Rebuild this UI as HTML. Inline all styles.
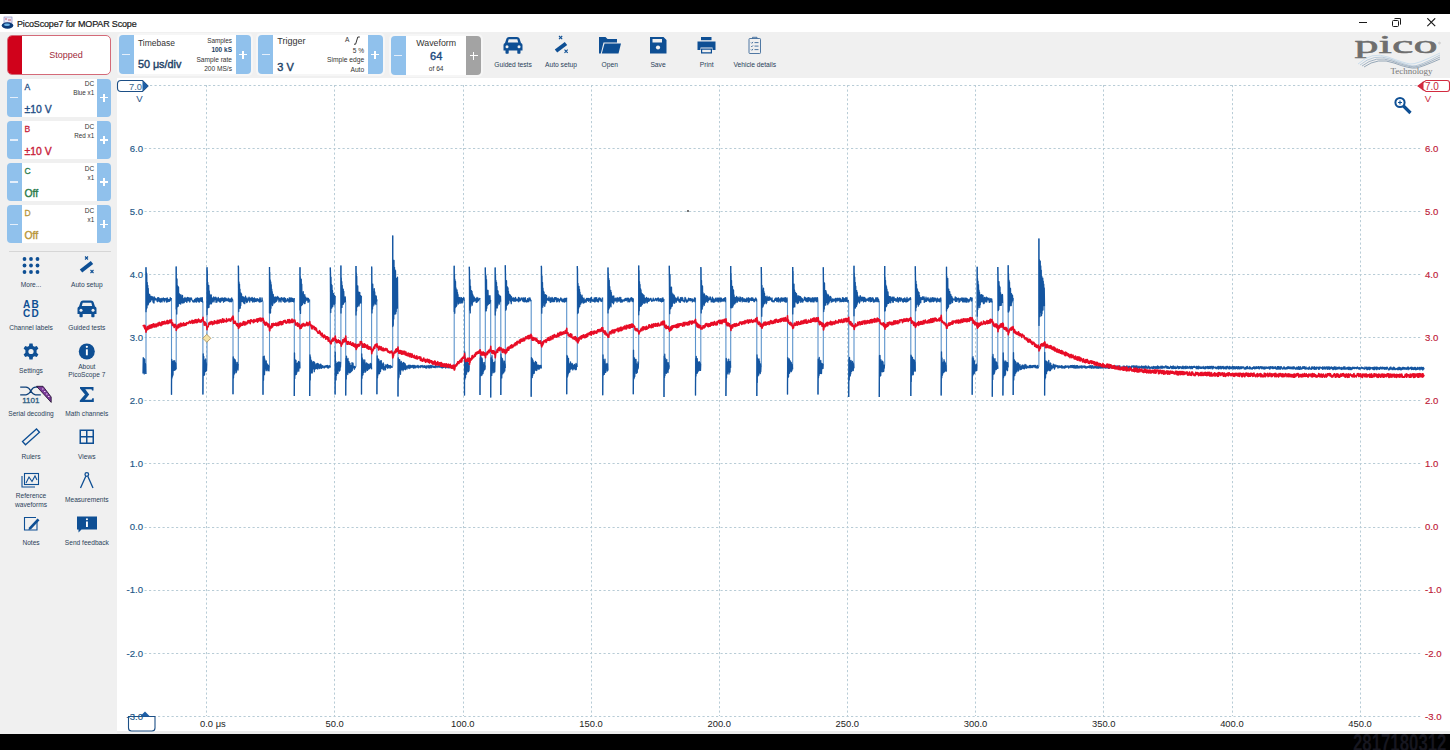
<!DOCTYPE html>
<html><head><meta charset="utf-8">
<style>
html,body{margin:0;padding:0;}
body{width:1450px;height:750px;position:relative;overflow:hidden;background:#000;font-family:"Liberation Sans", sans-serif;}
.a{position:absolute;}
.t{position:absolute;white-space:nowrap;line-height:1;font-family:"Liberation Sans", sans-serif;}
.bm{position:absolute;background:#90c1ec;}
.bm.l{border-radius:4px 0 0 4px;}
.bm.r{border-radius:0 4px 4px 0;}
.bm:before{content:"";position:absolute;left:50%;top:50%;width:8px;height:1.6px;margin:-0.8px 0 0 -4px;background:#fff;}
.bm.l:before{background:#e4eefa;}
.bm.p:after{content:"";position:absolute;left:50%;top:50%;width:1.6px;height:8px;margin:-4px 0 0 -0.8px;background:#fff;}
.wc{position:absolute;background:#fff;}
</style></head>
<body>
<!-- title bar -->
<div class="a" style="left:0;top:14px;width:1450px;height:18px;background:#fff;"></div>
<!-- toolbar + left panel -->
<div class="a" style="left:0;top:32px;width:1450px;height:46px;background:#f0f0f0;"></div>
<div class="a" style="left:0;top:78px;width:117px;height:656px;background:#f0f0f0;"></div>
<!-- plot -->
<div class="a" style="left:117px;top:78px;width:1333px;height:653px;background:#fff;"></div>
<div class="a" style="left:117px;top:731px;width:1333px;height:3px;background:#ececec;"></div>

<!-- app icon -->
<svg class="a" style="left:1px;top:16px" width="13" height="14" viewBox="0 0 13 14">
<rect x="3" y="1" width="8" height="6" fill="#e8e8f4" stroke="#8080c0" stroke-width="0.6"/>
<path d="M4 3h2M7 4h3" stroke="#c03050" stroke-width="0.8"/>
<ellipse cx="6.5" cy="9.5" rx="5.8" ry="3.2" fill="#0c3a78"/>
<ellipse cx="6" cy="8.8" rx="3" ry="1.3" fill="#6fb4e8"/>
</svg>
<!-- window controls -->
<div class="a" style="left:1358.5px;top:22.2px;width:8px;height:1.3px;background:#1a1a1a;"></div>
<div class="a" style="left:1392px;top:19.5px;width:7px;height:7px;border:1.4px solid #1a1a1a;border-radius:1.5px;box-sizing:border-box;"></div>
<div class="a" style="left:1394px;top:18px;width:7px;height:7px;border-top:1.4px solid #1a1a1a;border-right:1.4px solid #1a1a1a;border-radius:1.5px;box-sizing:border-box;"></div>
<svg class="a" style="left:1426.8px;top:18.2px" width="9" height="9" viewBox="0 0 9 9"><path d="M0.3 0.3L8.2 8.2M8.2 0.3L0.3 8.2" stroke="#1a1a1a" stroke-width="1.2"/></svg>

<!-- Stopped button -->
<div class="a" style="left:7px;top:35px;width:104px;height:40px;box-sizing:border-box;border:1px solid #d46a78;border-radius:5px;background:#fff;overflow:hidden;">
  <div class="a" style="left:0;top:0;width:14px;height:40px;background:#d0021b;"></div>
</div>

<!-- Timebase control -->
<div class="a" style="left:117px;top:33px;width:136px;height:43px;background:#f6f6f6;border-radius:5px;"></div>
<div class="wc" style="left:133px;top:35px;width:103px;height:39px;"></div>
<div class="bm l" style="left:119px;top:35px;width:14.5px;height:39px;"></div>
<div class="bm r p" style="left:235.5px;top:35px;width:15px;height:39px;"></div>
<!-- Trigger control -->
<div class="a" style="left:256px;top:33px;width:129px;height:43px;background:#f6f6f6;border-radius:5px;"></div>
<div class="wc" style="left:273px;top:35px;width:95px;height:39px;"></div>
<div class="bm l" style="left:258.3px;top:35px;width:15px;height:39px;"></div>
<div class="bm r p" style="left:368px;top:35px;width:14.5px;height:39px;"></div>
<!-- Waveform control -->
<div class="a" style="left:389px;top:34px;width:94px;height:43px;background:#f6f6f6;border-radius:5px;"></div>
<div class="wc" style="left:405px;top:36px;width:62px;height:39px;"></div>
<div class="bm l" style="left:391px;top:36px;width:14.5px;height:39px;"></div>
<div class="bm r p" style="left:466.3px;top:36px;width:14.5px;height:39px;background:#a3a3a3;"></div>

<!-- trigger edge glyph -->
<svg class="a" style="left:353px;top:36px" width="8" height="9" viewBox="0 0 8 9"><path d="M1 8.2h1.6L4.8 1h2" fill="none" stroke="#333" stroke-width="1"/></svg>

<!-- toolbar icons -->
<svg class="a" style="left:480px;top:33px" width="300" height="24" viewBox="480 33 300 24">
 <g fill="#0e4f94">
  <!-- car -->
  <path d="M506.5 38.5 Q507 37 509 37 H517 Q519 37 519.5 38.5 L521 43 Q522.5 43.5 522.5 45 V50.5 H520.5 V53 Q520.5 53.7 519.8 53.7 H518 Q517.3 53.7 517.3 53 V50.5 H508.7 V53 Q508.7 53.7 508 53.7 H506.2 Q505.5 53.7 505.5 53 V50.5 H503.5 V45 Q503.5 43.5 505 43 Z M507.8 42.5 H518.2 L517.3 39.3 H508.7 Z"/>
  <circle cx="507" cy="46.8" r="1.5" fill="#f0f0f0"/><circle cx="519" cy="46.8" r="1.5" fill="#f0f0f0"/>
  <!-- wand -->
  <path d="M554.8 49.4 L564.8 41.9 L567.2 45.1 L557.2 52.6 Z"/>
  <path d="M559 36 l3.2 3.2 M562.2 36 l-3.2 3.2 M564.5 49.7 l3.2 3.2 M567.7 49.7 l-3.2 3.2" stroke="#0e4f94" stroke-width="1.1"/>
  <!-- folder -->
  <path d="M599 37 H605.5 L607.5 39 H617 V42.5 H603.5 L600.8 53.5 H599 Z"/>
  <path d="M604.5 43.5 H621 L618.5 53.5 H601.8 Z"/>
  <!-- save -->
  <path d="M650 37 H663.5 L666.5 40 V53.5 H650 Z M652.5 39 V42.5 H662 V39 Z" fill-rule="evenodd"/>
  <circle cx="658" cy="47.5" r="2.1" fill="#f0f0f0"/>
  <!-- print -->
  <rect x="701" y="37" width="10.5" height="3.2"/>
  <path d="M697.5 41.5 H715.5 V50 H712.5 V47.5 H700.5 V50 H697.5 Z"/>
  <path d="M701 48.5 H712 V53.5 H701 Z M702.2 49.7 V52.3 H710.8 V49.7 Z" fill-rule="evenodd"/>
 </g>
 <!-- vehicle details clipboard -->
 <g fill="none" stroke="#3d6a9a" stroke-width="0.9">
  <rect x="749" y="38.5" width="11.5" height="15" rx="0.8"/>
  <path d="M752.5 38.5 V37.3 H757 V38.5"/>
  <path d="M751 42.5 l0.8 0.8 l1.2 -1.4 M754.5 42.6 H758.5 M751 46 l0.8 0.8 l1.2 -1.4 M754.5 46.1 H758.5 M751 49.5 l0.8 0.8 l1.2 -1.4 M754.5 49.6 H758.5"/>
 </g>
</svg>

<!-- pico logo -->
<svg class="a" style="left:1350px;top:33px" width="95" height="44" viewBox="0 0 95 44">
 <text x="4.5" y="19.5" style="font-family:'Liberation Serif',serif" font-size="25" fill="#6e6e6e" stroke="#6e6e6e" stroke-width="0.5" textLength="83" lengthAdjust="spacingAndGlyphs">pico</text>
 <circle cx="89.5" cy="10" r="0.9" fill="none" stroke="#999" stroke-width="0.4"/>
 <g fill="none" stroke-width="0.7">
  <path d="M8 31 Q22 18 38 24 T60 31 T90 20" stroke="#b9d4ea"/>
  <path d="M10 32 Q24 20 40 26 T62 33 T90 22" stroke="#9db8cf"/>
  <path d="M12 33 Q26 22 42 28 T64 34 T90 24" stroke="#7f97ad"/>
  <path d="M14 34 Q28 24 44 30 T66 35 T90 26" stroke="#6f879d"/>
 </g>
 <text x="40.5" y="41" style="font-family:'Liberation Serif',serif" font-size="8.5" fill="#777" textLength="42" lengthAdjust="spacingAndGlyphs">Technology</text>
</svg>

<!-- left panel channels -->
<div class="wc" style="left:21px;top:78.6px;width:76px;height:38px;"></div>
<div class="bm l" style="left:7px;top:78.6px;width:14.5px;height:38px;"></div>
<div class="bm r p" style="left:96.6px;top:78.6px;width:14.5px;height:38px;"></div>
<div class="wc" style="left:21px;top:120.8px;width:76px;height:38px;"></div>
<div class="bm l" style="left:7px;top:120.8px;width:14.5px;height:38px;"></div>
<div class="bm r p" style="left:96.6px;top:120.8px;width:14.5px;height:38px;"></div>
<div class="wc" style="left:21px;top:163px;width:76px;height:38px;"></div>
<div class="bm l" style="left:7px;top:163px;width:14.5px;height:38px;"></div>
<div class="bm r p" style="left:96.6px;top:163px;width:14.5px;height:38px;"></div>
<div class="wc" style="left:21px;top:205.3px;width:76px;height:38px;"></div>
<div class="bm l" style="left:7px;top:205.3px;width:14.5px;height:38px;"></div>
<div class="bm r p" style="left:96.6px;top:205.3px;width:14.5px;height:38px;"></div>
<div class="a" style="left:9px;top:251px;width:102px;height:1px;background:#d6d6d6;"></div>

<!-- left icons -->
<svg class="a" style="left:0;top:250px" width="117" height="290" viewBox="0 250 117 290">
 <g fill="#0e4f94">
  <!-- more dots -->
  <g>
   <circle cx="24.5" cy="259" r="1.9"/><circle cx="31" cy="259" r="1.9"/><circle cx="37.5" cy="259" r="1.9"/>
   <circle cx="24.5" cy="265.5" r="1.9"/><circle cx="31" cy="265.5" r="1.9"/><circle cx="37.5" cy="265.5" r="1.9"/>
   <circle cx="24.5" cy="272" r="1.9"/><circle cx="31" cy="272" r="1.9"/><circle cx="37.5" cy="272" r="1.9"/>
  </g>
  <!-- wand -->
  <path d="M79.8 269.4 L90.8 260.9 L93.2 264.1 L82.2 272.6 Z"/>
  <path d="M85 256.5 l3 3 M88 256.5 l-3 3 M90.5 270 l3 3 M93.5 270 l-3 3" stroke="#0e4f94" stroke-width="1.1"/>
  <!-- ABCD -->
  <text x="31.5" y="307.8" font-family="Liberation Sans, sans-serif" font-size="10" font-weight="700" text-anchor="middle" letter-spacing="1.2">AB</text>
  <text x="31.5" y="317.1" font-family="Liberation Sans, sans-serif" font-size="10" font-weight="700" text-anchor="middle" letter-spacing="1.2">CD</text>
  <!-- car -->
  <path d="M80.5 302 Q81 300.5 83 300.5 H91 Q93 300.5 93.5 302 L95 306.5 Q96.5 307 96.5 308.5 V314 H94.5 V316.5 Q94.5 317.2 93.8 317.2 H92 Q91.3 317.2 91.3 316.5 V314 H82.7 V316.5 Q82.7 317.2 82 317.2 H80.2 Q79.5 317.2 79.5 316.5 V314 H77.5 V308.5 Q77.5 307 79 306.5 Z M81.8 306 H92.2 L91.3 302.8 H82.7 Z"/>
  <circle cx="81" cy="310.3" r="1.5" fill="#f0f0f0"/><circle cx="93" cy="310.3" r="1.5" fill="#f0f0f0"/>
  <!-- gear -->
  <g transform="translate(31 351.5)">
   <path d="M-1.6 -8 H1.6 L2 -5.6 L3.6 -4.7 L5.8 -5.6 L7.4 -2.9 L5.6 -1.3 V1.3 L7.4 2.9 L5.8 5.6 L3.6 4.7 L2 5.6 L1.6 8 H-1.6 L-2 5.6 L-3.6 4.7 L-5.8 5.6 L-7.4 2.9 L-5.6 1.3 V-1.3 L-7.4 -2.9 L-5.8 -5.6 L-3.6 -4.7 L-2 -5.6 Z"/>
   <circle r="2.6" fill="#f0f0f0"/>
  </g>
  <!-- info -->
  <circle cx="86.8" cy="351.5" r="8"/>
  <rect x="85.9" y="349.3" width="1.9" height="6" fill="#fff"/><circle cx="86.85" cy="346.8" r="1.1" fill="#fff"/>
  <!-- sigma -->
  <path d="M80 387 H93.5 V390.5 H92 L91.5 389.3 H85.3 L89.2 394.5 L85 399.8 H91.7 L92.3 398.3 H93.8 V402 H79.8 V400.6 L85 394.5 L80 388.5 Z"/>
  <!-- grid views -->
  <path d="M79.5 429.5 H94 V444 H79.5 Z M81 431 V436 H86 V431 Z M87.5 431 V436 H92.5 V431 Z M81 437.5 V442.5 H86 V437.5 Z M87.5 437.5 V442.5 H92.5 V437.5 Z" fill-rule="evenodd"/>
  <!-- notes speech -->
  <path d="M77 516.5 H97 V529.5 H81.5 L78.5 532.5 V529.5 H77 Z"/>
  <rect x="86" y="521.5" width="1.9" height="5.5" fill="#fff"/><circle cx="86.95" cy="519.3" r="1" fill="#fff"/>
 </g>
 <!-- serial decoding -->
 <g fill="none" stroke="#0c3f78" stroke-width="1.3">
  <path d="M20.2 387.2 H26 Q28.5 387.2 30.8 391 Q33 394.8 35.5 394.8 H40.8 M20.2 394.8 H26 Q28.5 394.8 30.8 391 Q33 387.2 35.5 387.2 H38"/>
 </g>
 <path d="M36.5 386.3 L43 386.3 L51.2 397 L51.2 402.4 Z" fill="#7a3a98" stroke="#1a0a2a" stroke-width="0.8"/>
 <path d="M42 389 l1.5 0 M44 391.5 l1.5 0 M46 394 l1.5 0 M48 396.5 l1.5 0" stroke="#e8c8f0" stroke-width="1"/>
 <text x="30.8" y="403" style="font-family:'Liberation Sans',sans-serif" font-size="8" fill="#2a5a80" stroke="#2a5a80" stroke-width="0.3" text-anchor="middle">1101</text>
 <!-- ruler -->
 <g fill="none" stroke="#0e4f94" stroke-width="1.3">
  <path d="M22.5 441.5 L36.5 429 L39.5 432.3 L25.5 444.8 Z"/>
 </g>
 <!-- reference waveforms -->
 <g fill="none" stroke="#0e4f94" stroke-width="1.1">
  <rect x="24.5" y="473.5" width="14" height="11"/>
  <path d="M22 476 V487 H35"/>
  <path d="M26 483 L29 477 L32 481.5 L35 476 L37 480"/>
 </g>
 <!-- measurements compass -->
 <g fill="none" stroke="#0e4f94" stroke-width="1.3">
  <circle cx="86.8" cy="474.5" r="1.8"/>
  <path d="M85.8 476.3 L80.5 488 M87.8 476.3 L93 488"/>
 </g>
 <!-- notes -->
 <g fill="none" stroke="#0e4f94" stroke-width="1.1">
  <path d="M36 517.5 H24.5 V530 H37 V522"/>
 </g>
 <path d="M29 527.5 L37.5 518.5 L39.5 520.3 L31 529.3 L28.5 530 Z" fill="#0e4f94"/>
</svg>

<!-- grid -->
<svg class="a" style="left:0;top:0" width="1450" height="750">
 <g stroke="#b8ccd6" stroke-width="1" stroke-dasharray="2.2 2.3">
<line x1="144.5" y1="716.5" x2="1421" y2="716.5"/>
<line x1="144.5" y1="653.5" x2="1421" y2="653.5"/>
<line x1="144.5" y1="590.5" x2="1421" y2="590.5"/>
<line x1="144.5" y1="527.5" x2="1421" y2="527.5"/>
<line x1="144.5" y1="463.5" x2="1421" y2="463.5"/>
<line x1="144.5" y1="400.5" x2="1421" y2="400.5"/>
<line x1="144.5" y1="337.5" x2="1421" y2="337.5"/>
<line x1="144.5" y1="274.5" x2="1421" y2="274.5"/>
<line x1="144.5" y1="211.5" x2="1421" y2="211.5"/>
<line x1="144.5" y1="148.5" x2="1421" y2="148.5"/>
<line x1="150" y1="85.5" x2="1417" y2="85.5"/>
<line x1="206.5" y1="85" x2="206.5" y2="716"/>
<line x1="334.5" y1="85" x2="334.5" y2="716"/>
<line x1="463.5" y1="85" x2="463.5" y2="716"/>
<line x1="591.5" y1="85" x2="591.5" y2="716"/>
<line x1="719.5" y1="85" x2="719.5" y2="716"/>
<line x1="847.5" y1="85" x2="847.5" y2="716"/>
<line x1="975.5" y1="85" x2="975.5" y2="716"/>
<line x1="1103.5" y1="85" x2="1103.5" y2="716"/>
<line x1="1232.5" y1="85" x2="1232.5" y2="716"/>
<line x1="1360.5" y1="85" x2="1360.5" y2="716"/>
 </g>
 <path d="M146.00,374.1V267.2 M171.50,298.0V394.8 M176.20,369.2V266.6 M202.90,301.6V394.5 M207.00,364.0V267.2 M233.00,300.8V394.2 M238.30,363.5V265.7 M263.00,301.5V394.7 M269.50,365.3V266.9 M294.30,298.1V395.9 M300.00,368.4V267.2 M309.70,299.4V395.9 M330.30,367.5V267.5 M335.10,295.9V394.4 M340.90,361.8V265.4 M345.70,302.5V395.6 M356.00,366.7V266.1 M361.50,296.1V394.5 M371.60,369.3V266.6 M376.90,299.5V394.3 M392.70,366.6V235.5 M398.00,308.8V396.5 M454.20,365.5V265.8 M464.50,301.5V395.6 M469.30,365.7V266.7 M480.00,298.0V395.1 M485.30,365.5V267.4 M490.70,300.0V397.6 M495.20,360.8V267.5 M500.80,301.9V394.9 M505.30,368.0V265.2 M531.20,300.2V396.7 M541.30,368.4V265.8 M566.70,297.7V394.2 M577.30,367.1V266.1 M602.70,297.6V395.2 M608.00,370.6V267.6 M633.30,298.6V394.2 M638.70,362.4V265.5 M664.00,299.1V396.9 M669.30,365.4V265.8 M695.50,297.8V395.5 M700.80,364.0V267.1 M725.90,299.8V396.0 M730.70,367.7V266.0 M756.80,301.7V395.9 M761.30,366.5V267.1 M787.50,301.7V394.5 M792.70,369.3V267.0 M818.00,301.3V394.5 M823.30,363.8V267.3 M848.70,301.7V397.1 M854.00,368.2V265.8 M879.30,302.0V396.9 M884.70,364.4V266.0 M910.80,300.4V396.1 M915.30,371.6V266.3 M941.20,301.1V395.4 M946.50,371.6V266.8 M972.20,297.6V394.7 M977.20,364.1V266.7 M992.30,301.4V396.7 M997.80,368.8V267.0 M1002.90,303.0V395.6 M1008.20,367.4V265.3 M1013.20,298.1V394.9 M1038.90,366.9V238.6 M1044.60,306.1V395.6" fill="none" stroke="#5b93cc" stroke-width="1.1"/>
 <path d="M143.00,373.5 143.25,357.7 143.50,369.0 143.75,372.3 144.00,358.6 144.25,373.9 144.50,369.5 144.75,359.4 145.00,371.7 145.25,363.4 145.50,364.4 145.75,374.1 M146.00,267.2 146.00,311.7 146.25,271.9 146.50,309.0 146.75,273.7 147.00,307.7 147.25,282.5 147.50,303.1 147.75,285.4 148.00,304.9 148.25,288.5 148.50,304.0 148.75,293.7 149.00,302.4 149.25,295.4 149.50,302.1 149.75,294.6 150.00,299.6 150.25,297.7 150.50,301.7 150.75,296.5 151.00,299.5 151.25,296.4 151.50,299.9 151.75,297.8 152.00,299.3 152.25,296.8 152.50,299.7 152.75,296.9 153.00,301.9 153.25,300.8 153.50,302.7 153.75,298.0 154.00,303.0 154.25,296.8 154.50,299.8 154.75,298.6 155.00,299.8 155.25,298.1 155.50,299.1 155.75,299.7 156.00,299.9 156.25,299.8 156.50,298.8 156.75,299.0 157.00,300.4 157.25,301.6 157.50,301.7 157.75,297.7 158.00,300.6 158.25,300.1 158.50,300.2 158.75,297.6 159.00,301.1 159.25,299.5 159.50,300.2 159.75,301.7 160.00,298.6 160.25,301.9 160.50,302.1 160.75,298.9 161.00,301.3 161.25,299.9 161.50,300.7 161.75,298.5 162.00,301.9 162.25,299.9 162.50,299.7 162.75,299.9 163.00,298.5 163.25,297.9 163.50,298.7 163.75,300.4 164.00,298.7 164.25,301.8 164.50,298.6 164.75,298.7 165.00,299.9 165.25,299.6 165.50,299.8 165.75,300.3 166.00,298.3 166.25,301.1 166.50,302.0 166.75,298.4 167.00,301.9 167.25,297.9 167.50,300.2 167.75,300.6 168.00,301.5 168.25,301.0 168.50,299.3 168.75,299.8 169.00,300.2 169.25,301.4 169.50,299.7 169.75,301.0 170.00,300.7 170.25,297.6 170.50,298.8 170.75,300.2 171.00,299.0 171.25,298.0 M171.50,394.8 171.50,384.9 171.75,359.4 172.00,378.1 172.25,361.5 172.50,376.3 172.75,363.7 173.00,375.1 173.25,360.9 173.50,370.4 173.75,361.1 174.00,370.4 174.25,363.7 174.50,370.1 174.75,360.7 175.00,370.0 175.25,362.3 175.50,369.5 175.75,363.2 176.00,369.2 M176.20,266.6 176.25,309.1 176.50,278.4 176.75,314.1 177.00,278.9 177.25,307.1 177.50,285.7 177.75,306.3 178.00,291.4 178.25,306.2 178.50,287.0 178.75,303.3 179.00,294.8 179.25,303.4 179.50,293.9 179.75,301.9 180.00,297.4 180.25,303.9 180.50,294.8 180.75,304.0 181.00,294.9 181.25,301.3 181.50,297.0 181.75,302.7 182.00,298.0 182.25,301.1 182.50,295.4 182.75,303.1 183.00,299.0 183.25,300.7 183.50,299.3 183.75,302.6 184.00,298.3 184.25,302.5 184.50,299.7 184.75,299.2 185.00,297.5 185.25,301.0 185.50,298.5 185.75,299.2 186.00,301.3 186.25,300.1 186.50,298.2 186.75,302.3 187.00,300.5 187.25,300.9 187.50,297.4 187.75,298.7 188.00,297.6 188.25,300.7 188.50,300.8 188.75,298.5 189.00,298.0 189.25,300.0 189.50,298.2 189.75,302.0 190.00,301.6 190.25,299.3 190.50,299.6 190.75,297.9 191.00,298.6 191.25,298.6 191.50,298.1 191.75,299.9 192.00,300.0 192.25,300.5 192.50,300.7 192.75,301.7 193.00,301.7 193.25,302.0 193.50,300.9 193.75,301.3 194.00,300.6 194.25,301.1 194.50,299.5 194.75,302.0 195.00,299.7 195.25,299.2 195.50,300.3 195.75,301.5 196.00,298.1 196.25,300.9 196.50,302.0 196.75,301.8 197.00,299.9 197.25,298.3 197.50,297.9 197.75,299.7 198.00,300.7 198.25,300.0 198.50,301.6 198.75,298.4 199.00,298.8 199.25,302.1 199.50,299.3 199.75,300.8 200.00,300.9 200.25,297.9 200.50,298.3 200.75,299.0 201.00,298.3 201.25,301.4 201.50,297.9 201.75,298.6 202.00,300.2 202.25,297.7 202.50,302.0 202.75,301.6 M202.90,394.5 203.00,379.7 203.25,353.8 203.50,375.6 203.75,356.4 204.00,372.1 204.25,360.9 204.50,375.0 204.75,360.1 205.00,371.3 205.25,362.0 205.50,371.5 205.75,359.0 206.00,369.4 206.25,362.7 206.50,370.8 206.75,364.0 M207.00,267.2 207.00,314.5 207.25,270.7 207.50,306.1 207.75,282.5 208.00,307.8 208.25,286.7 208.50,304.9 208.75,285.4 209.00,307.3 209.25,290.9 209.50,304.2 209.75,294.1 210.00,303.1 210.25,295.2 210.50,302.1 210.75,295.8 211.00,304.0 211.25,294.8 211.50,303.5 211.75,298.7 212.00,299.1 212.25,298.0 212.50,301.9 212.75,299.8 213.00,299.3 213.25,298.4 213.50,299.4 213.75,296.8 214.00,301.9 214.25,297.3 214.50,299.9 214.75,299.3 215.00,299.4 215.25,298.2 215.50,298.6 215.75,297.2 216.00,302.3 216.25,299.0 216.50,301.3 216.75,298.2 217.00,302.0 217.25,299.5 217.50,300.3 217.75,299.9 218.00,300.3 218.25,297.3 218.50,299.7 218.75,298.3 219.00,301.4 219.25,299.1 219.50,301.4 219.75,299.9 220.00,302.1 220.25,298.4 220.50,302.2 220.75,300.8 221.00,301.5 221.25,298.2 221.50,300.7 221.75,299.6 222.00,300.1 222.25,297.9 222.50,300.3 222.75,298.5 223.00,299.7 223.25,300.3 223.50,302.1 223.75,300.4 224.00,298.2 224.25,300.3 224.50,301.3 224.75,301.1 225.00,297.7 225.25,300.3 225.50,300.9 225.75,300.2 226.00,300.6 226.25,298.5 226.50,300.7 226.75,300.6 227.00,300.4 227.25,299.4 227.50,299.7 227.75,298.8 228.00,300.9 228.25,298.1 228.50,301.2 228.75,299.5 229.00,299.1 229.25,299.0 229.50,299.3 229.75,301.8 230.00,300.9 230.25,301.3 230.50,300.6 230.75,298.9 231.00,300.3 231.25,301.8 231.50,300.6 231.75,298.0 232.00,301.3 232.25,300.4 232.50,299.3 232.75,300.8 M233.00,394.2 233.00,383.6 233.25,356.8 233.50,378.1 233.75,358.8 234.00,374.7 234.25,359.2 234.50,373.5 234.75,359.4 235.00,370.2 235.25,360.0 235.50,369.2 235.75,362.0 236.00,372.8 236.25,364.6 236.50,372.0 236.75,366.1 237.00,368.2 237.25,362.4 237.50,368.6 237.75,365.0 238.00,370.0 238.25,363.5 M238.30,265.7 238.50,267.3 238.75,311.6 239.00,281.9 239.25,308.6 239.50,284.1 239.75,307.2 240.00,289.2 240.25,308.2 240.50,292.9 240.75,305.4 241.00,293.2 241.25,301.7 241.50,293.9 241.75,300.8 242.00,296.6 242.25,301.3 242.50,297.6 242.75,299.6 243.00,296.6 243.25,302.2 243.50,299.0 243.75,303.0 244.00,297.5 244.25,302.9 244.50,298.8 244.75,303.7 245.00,297.8 245.25,301.7 245.50,296.1 245.75,300.1 246.00,298.6 246.25,299.8 246.50,299.4 246.75,302.5 247.00,297.8 247.25,302.1 247.50,301.4 247.75,300.1 248.00,300.2 248.25,300.5 248.50,298.5 248.75,298.1 249.00,297.1 249.25,299.6 249.50,297.8 249.75,302.0 250.00,298.8 250.25,299.7 250.50,298.9 250.75,298.2 251.00,298.4 251.25,300.4 251.50,299.5 251.75,298.2 252.00,297.3 252.25,301.2 252.50,298.0 252.75,302.0 253.00,300.8 253.25,299.8 253.50,300.4 253.75,298.3 254.00,300.2 254.25,301.9 254.50,298.0 254.75,300.3 255.00,299.1 255.25,301.4 255.50,301.4 255.75,300.6 256.00,298.7 256.25,301.5 256.50,300.2 256.75,300.6 257.00,300.8 257.25,299.1 257.50,298.7 257.75,300.3 258.00,300.7 258.25,300.3 258.50,300.1 258.75,299.5 259.00,301.7 259.25,299.1 259.50,302.0 259.75,300.1 260.00,297.6 260.25,298.4 260.50,301.8 260.75,301.1 261.00,301.4 261.25,301.4 261.50,300.9 261.75,301.6 262.00,297.8 262.25,299.7 262.50,300.7 262.75,301.5 M263.00,394.7 263.00,384.4 263.25,356.7 263.50,380.3 263.75,358.5 264.00,374.9 264.25,356.1 264.50,374.5 264.75,358.9 265.00,370.8 265.25,360.9 265.50,368.7 265.75,364.8 266.00,368.7 266.25,361.0 266.50,370.2 266.75,364.1 267.00,370.8 267.25,364.0 267.50,368.9 267.75,365.9 268.00,369.2 268.25,365.1 268.50,370.4 268.75,366.9 269.00,370.9 269.25,365.3 M269.50,266.9 269.50,312.9 269.75,272.3 270.00,311.7 270.25,279.9 270.50,313.0 270.75,282.0 271.00,308.3 271.25,284.7 271.50,304.2 271.75,289.2 272.00,302.5 272.25,291.7 272.50,305.6 272.75,294.5 273.00,304.0 273.25,294.5 273.50,301.9 273.75,296.9 274.00,301.4 274.25,297.5 274.50,302.9 274.75,298.8 275.00,302.4 275.25,296.8 275.50,300.0 275.75,298.3 276.00,301.5 276.25,297.6 276.50,301.1 276.75,299.8 277.00,300.3 277.25,296.5 277.50,299.1 277.75,298.3 278.00,298.9 278.25,297.1 278.50,299.3 278.75,299.1 279.00,301.9 279.25,300.1 279.50,298.8 279.75,298.2 280.00,298.8 280.25,300.1 280.50,301.0 280.75,299.2 281.00,302.0 281.25,297.7 281.50,298.0 281.75,298.9 282.00,298.0 282.25,299.5 282.50,300.0 282.75,298.7 283.00,300.2 283.25,301.3 283.50,298.1 283.75,298.1 284.00,299.6 284.25,297.7 284.50,302.2 284.75,301.8 285.00,299.9 285.25,301.9 285.50,298.4 285.75,301.9 286.00,299.9 286.25,301.0 286.50,301.1 286.75,300.9 287.00,301.0 287.25,300.6 287.50,298.6 287.75,300.9 288.00,300.5 288.25,300.3 288.50,300.6 288.75,299.3 289.00,302.1 289.25,297.9 289.50,297.8 289.75,301.4 290.00,301.6 290.25,297.8 290.50,300.9 290.75,300.5 291.00,301.6 291.25,298.6 291.50,301.1 291.75,297.9 292.00,299.6 292.25,300.0 292.50,301.3 292.75,298.6 293.00,301.3 293.25,301.1 293.50,300.0 293.75,301.9 294.00,300.0 294.25,298.1 M294.30,395.9 294.50,352.9 294.75,378.6 295.00,359.5 295.25,375.0 295.50,360.6 295.75,371.0 296.00,360.5 296.25,374.4 296.50,363.8 296.75,373.1 297.00,363.6 297.25,371.6 297.50,363.8 297.75,368.5 298.00,362.3 298.25,369.8 298.50,361.5 298.75,371.2 299.00,365.2 299.25,368.2 299.50,362.0 299.75,368.4 M300.00,267.2 300.00,310.0 300.25,276.7 300.50,313.4 300.75,281.4 301.00,305.2 301.25,279.2 301.50,305.6 301.75,284.1 302.00,304.5 302.25,293.3 302.50,304.5 302.75,294.5 303.00,302.9 303.25,291.7 303.50,300.8 303.75,295.8 304.00,302.6 304.25,297.6 304.50,303.5 304.75,294.6 305.00,303.5 305.25,297.1 305.50,301.4 305.75,297.2 306.00,299.5 306.25,298.8 306.50,300.0 306.75,298.8 307.00,298.7 307.25,298.1 307.50,300.3 307.75,298.3 308.00,302.3 308.25,300.9 308.50,298.5 308.75,300.1 309.00,301.7 309.25,299.7 309.50,299.4 M309.70,395.9 309.75,384.6 310.00,354.8 310.25,380.0 310.50,357.0 310.75,373.5 311.00,359.8 311.25,372.3 311.50,360.6 311.75,371.5 312.00,361.6 312.25,372.9 312.50,362.6 312.75,367.9 313.00,364.5 313.25,368.6 313.50,361.6 313.75,369.0 314.00,363.2 314.25,371.7 314.50,362.1 314.75,368.9 315.00,365.6 315.25,367.8 315.50,365.4 315.75,368.8 316.00,364.0 316.25,366.7 316.50,364.0 316.75,368.4 317.00,365.5 317.25,366.9 317.50,363.4 317.75,369.0 318.00,364.1 318.25,367.8 318.50,364.0 318.75,366.7 319.00,364.3 319.25,368.2 319.50,365.6 319.75,368.5 320.00,367.4 320.25,367.5 320.50,364.2 320.75,367.9 321.00,364.3 321.25,367.7 321.50,368.3 321.75,366.2 322.00,367.5 322.25,365.7 322.50,367.7 322.75,366.4 323.00,365.9 323.25,367.0 323.50,366.9 323.75,367.5 324.00,367.0 324.25,368.0 324.50,366.5 324.75,366.2 325.00,366.0 325.25,367.2 325.50,366.5 325.75,365.8 326.00,367.2 326.25,366.5 326.50,365.6 326.75,366.3 327.00,366.9 327.25,365.5 327.50,367.8 327.75,366.7 328.00,365.7 328.25,368.0 328.50,367.6 328.75,367.8 329.00,366.8 329.25,366.5 329.50,365.6 329.75,366.9 330.00,366.5 330.25,367.5 M330.30,267.5 330.50,273.0 330.75,312.6 331.00,277.1 331.25,305.2 331.50,284.4 331.75,308.1 332.00,285.5 332.25,306.2 332.50,290.5 332.75,306.5 333.00,294.9 333.25,303.7 333.50,293.7 333.75,303.0 334.00,296.4 334.25,304.8 334.50,295.5 334.75,303.4 335.00,295.9 M335.10,394.4 335.25,352.1 335.50,375.5 335.75,361.2 336.00,379.9 336.25,363.6 336.50,375.4 336.75,363.3 337.00,373.5 337.25,364.1 337.50,371.3 337.75,362.4 338.00,373.6 338.25,364.7 338.50,369.9 338.75,362.0 339.00,368.8 339.25,362.6 339.50,371.1 339.75,362.2 340.00,370.3 340.25,365.2 340.50,367.0 340.75,361.8 M340.90,265.4 341.00,313.1 341.25,278.0 341.50,307.4 341.75,281.6 342.00,307.4 342.25,285.5 342.50,304.5 342.75,292.0 343.00,304.3 343.25,289.2 343.50,304.1 343.75,291.3 344.00,302.1 344.25,296.9 344.50,302.2 344.75,298.7 345.00,301.1 345.25,297.0 345.50,302.5 M345.70,395.6 345.75,385.3 346.00,358.5 346.25,378.9 346.50,356.2 346.75,372.1 347.00,359.5 347.25,372.8 347.50,360.8 347.75,374.6 348.00,358.4 348.25,371.9 348.50,361.4 348.75,371.4 349.00,361.7 349.25,372.8 349.50,365.0 349.75,368.6 350.00,363.4 350.25,372.5 350.50,366.3 350.75,367.3 351.00,365.7 351.25,371.5 351.50,365.8 351.75,370.8 352.00,362.7 352.25,370.5 352.50,365.5 352.75,367.0 353.00,363.1 353.25,367.3 353.50,367.5 353.75,367.9 354.00,366.7 354.25,369.3 354.50,366.5 354.75,366.5 355.00,367.9 355.25,367.5 355.50,366.7 355.75,366.7 M356.00,266.1 356.00,315.0 356.25,272.8 356.50,310.9 356.75,276.2 357.00,306.9 357.25,287.4 357.50,306.4 357.75,285.9 358.00,304.6 358.25,292.2 358.50,304.8 358.75,292.1 359.00,306.1 359.25,294.2 359.50,304.0 359.75,292.3 360.00,300.9 360.25,298.5 360.50,302.5 360.75,295.7 361.00,303.1 361.25,296.1 M361.50,394.5 361.50,383.4 361.75,353.9 362.00,378.3 362.25,357.8 362.50,375.3 362.75,361.5 363.00,374.8 363.25,359.8 363.50,371.4 363.75,362.1 364.00,372.4 364.25,363.3 364.50,369.2 364.75,359.9 365.00,370.1 365.25,365.4 365.50,372.1 365.75,364.4 366.00,371.0 366.25,362.8 366.50,369.1 366.75,363.1 367.00,368.0 367.25,365.2 367.50,370.4 367.75,363.8 368.00,368.7 368.25,364.3 368.50,369.2 368.75,364.3 369.00,366.3 369.25,366.0 369.50,368.7 369.75,365.5 370.00,366.5 370.25,363.3 370.50,365.1 370.75,367.7 371.00,366.0 371.25,364.0 371.50,369.3 M371.60,266.6 371.75,268.4 372.00,312.9 372.25,285.9 372.50,308.9 372.75,284.1 373.00,306.3 373.25,291.7 373.50,303.5 373.75,293.2 374.00,304.9 374.25,288.7 374.50,303.0 374.75,292.0 375.00,302.2 375.25,297.2 375.50,303.5 375.75,295.8 376.00,304.5 376.25,296.2 376.50,301.1 376.75,299.5 M376.90,394.3 377.00,378.0 377.25,356.0 377.50,377.8 377.75,358.5 378.00,375.0 378.25,362.5 378.50,373.3 378.75,359.5 379.00,373.3 379.25,361.7 379.50,373.7 379.75,364.5 380.00,369.4 380.25,361.0 380.50,371.5 380.75,363.7 381.00,367.1 381.25,360.6 381.50,368.6 381.75,364.4 382.00,368.1 382.25,365.9 382.50,367.7 382.75,363.6 383.00,369.3 383.25,362.8 383.50,368.1 383.75,364.2 384.00,370.2 384.25,366.8 384.50,367.4 384.75,367.3 385.00,366.8 385.25,366.6 385.50,369.8 385.75,364.9 386.00,365.6 386.25,366.3 386.50,367.0 386.75,366.8 387.00,367.0 387.25,364.3 387.50,367.6 387.75,368.4 388.00,364.9 388.25,365.5 388.50,367.5 388.75,366.5 389.00,365.7 389.25,367.2 389.50,365.9 389.75,366.4 390.00,368.2 390.25,365.5 390.50,366.8 390.75,367.7 391.00,366.1 391.25,367.4 391.50,366.6 391.75,366.5 392.00,367.2 392.25,367.2 392.50,366.6 M392.70,235.5 392.75,326.5 393.00,259.8 393.25,325.3 393.50,267.0 393.75,318.9 394.00,260.5 394.25,314.3 394.50,267.3 394.75,314.0 395.00,269.8 395.25,311.7 395.50,270.6 395.75,313.8 396.00,281.1 396.25,311.6 396.50,278.5 396.75,308.5 397.00,281.9 397.25,306.5 397.50,277.2 397.75,308.8 M398.00,396.5 398.00,388.2 398.25,357.8 398.50,379.2 398.75,359.9 399.00,377.2 399.25,359.6 399.50,370.3 399.75,359.8 400.00,370.7 400.25,362.4 400.50,374.3 400.75,365.4 401.00,370.6 401.25,361.4 401.50,367.7 401.75,365.8 402.00,369.4 402.25,363.7 402.50,369.4 402.75,363.1 403.00,370.8 403.25,362.3 403.50,369.5 403.75,362.6 404.00,368.7 404.25,364.3 404.50,369.1 404.75,363.5 405.00,369.3 405.25,364.0 405.50,369.6 405.75,365.9 406.00,366.5 406.25,365.8 406.50,366.4 406.75,367.3 407.00,369.0 407.25,367.3 407.50,365.8 407.75,366.8 408.00,366.7 408.25,367.4 408.50,365.3 408.75,368.2 409.00,365.1 409.25,368.5 409.50,365.4 409.75,366.0 410.00,365.3 410.25,366.1 410.50,367.8 410.75,365.3 411.00,366.7 411.25,367.0 411.50,366.6 411.75,365.8 412.00,367.5 412.25,365.5 412.50,366.7 412.75,366.3 413.00,366.7 413.25,365.5 413.50,368.1 413.75,365.6 414.00,366.6 414.25,366.4 414.50,367.9 414.75,365.4 415.00,366.8 415.25,365.9 415.50,367.4 415.75,367.8 416.00,366.4 416.25,366.7 416.50,366.9 416.75,366.0 417.00,366.5 417.25,367.2 417.50,366.1 417.75,365.4 418.00,365.4 418.25,367.8 418.50,366.2 418.75,366.8 419.00,366.4 419.25,366.5 419.50,366.2 419.75,366.8 420.00,367.1 420.25,367.6 420.50,366.7 420.75,365.7 421.00,365.6 421.25,366.8 421.50,366.9 421.75,366.6 422.00,365.9 422.25,365.5 422.50,366.6 422.75,366.3 423.00,367.7 423.25,366.9 423.50,366.4 423.75,365.9 424.00,366.6 424.25,366.1 424.50,367.4 424.75,365.7 425.00,366.5 425.25,366.6 425.50,367.8 425.75,367.9 426.00,368.0 426.25,365.8 426.50,368.1 426.75,366.7 427.00,365.8 427.25,366.2 427.50,366.8 427.75,366.8 428.00,365.9 428.25,367.8 428.50,366.7 428.75,366.2 429.00,365.4 429.25,366.8 429.50,367.9 429.75,368.0 430.00,367.6 430.25,366.9 430.50,365.4 430.75,366.6 431.00,365.9 431.25,367.8 431.50,367.6 431.75,365.5 432.00,365.5 432.25,366.7 432.50,366.3 432.75,367.2 433.00,367.0 433.25,366.8 433.50,366.1 433.75,367.4 434.00,366.2 434.25,366.6 434.50,367.4 434.75,366.8 435.00,366.4 435.25,367.7 435.50,365.5 435.75,366.1 436.00,366.0 436.25,366.0 436.50,366.7 436.75,366.7 437.00,367.6 437.25,366.8 437.50,366.3 437.75,366.6 438.00,365.8 438.25,366.6 438.50,366.3 438.75,366.6 439.00,367.4 439.25,365.7 439.50,366.9 439.75,366.0 440.00,366.1 440.25,366.9 440.50,365.8 440.75,366.7 441.00,367.3 441.25,367.7 441.50,365.9 441.75,365.7 442.00,365.5 442.25,365.8 442.50,367.8 442.75,365.9 443.00,367.7 443.25,366.5 443.50,366.9 443.75,366.5 444.00,367.3 444.25,365.5 444.50,365.5 444.75,366.0 445.00,366.6 445.25,366.8 445.50,367.7 445.75,368.0 446.00,367.0 446.25,366.3 446.50,367.1 446.75,365.5 447.00,366.1 447.25,367.1 447.50,367.7 447.75,365.9 448.00,366.9 448.25,366.2 448.50,365.6 448.75,367.9 449.00,366.4 449.25,367.9 449.50,365.8 449.75,366.3 450.00,367.0 450.25,367.3 450.50,367.1 450.75,366.3 451.00,367.2 451.25,366.2 451.50,368.0 451.75,367.6 452.00,368.0 452.25,367.7 452.50,367.9 452.75,367.3 453.00,366.7 453.25,365.9 453.50,367.8 453.75,367.7 454.00,365.5 M454.20,265.8 454.25,311.4 454.50,274.3 454.75,313.3 455.00,279.6 455.25,307.7 455.50,281.5 455.75,304.6 456.00,288.0 456.25,306.5 456.50,293.2 456.75,305.4 457.00,290.0 457.25,301.8 457.50,292.5 457.75,301.9 458.00,294.6 458.25,304.1 458.50,297.5 458.75,303.2 459.00,297.6 459.25,303.2 459.50,298.2 459.75,299.5 460.00,297.3 460.25,299.7 460.50,299.3 460.75,303.1 461.00,300.2 461.25,302.3 461.50,297.6 461.75,302.5 462.00,300.1 462.25,302.9 462.50,298.6 462.75,299.0 463.00,299.2 463.25,299.9 463.50,297.7 463.75,299.9 464.00,298.0 464.25,301.5 M464.50,395.6 464.50,381.8 464.75,351.9 465.00,379.0 465.25,357.5 465.50,377.4 465.75,361.5 466.00,371.8 466.25,361.5 466.50,374.2 466.75,360.6 467.00,370.5 467.25,363.2 467.50,369.8 467.75,359.7 468.00,371.9 468.25,365.6 468.50,371.4 468.75,363.7 469.00,370.8 469.25,365.7 M469.30,266.7 469.50,271.3 469.75,310.2 470.00,279.6 470.25,312.9 470.50,286.2 470.75,306.2 471.00,291.7 471.25,303.2 471.50,290.7 471.75,303.6 472.00,291.5 472.25,305.2 472.50,294.0 472.75,301.9 473.00,295.2 473.25,301.8 473.50,297.5 473.75,299.9 474.00,296.8 474.25,301.1 474.50,297.6 474.75,300.3 475.00,298.4 475.25,300.6 475.50,300.5 475.75,299.3 476.00,300.8 476.25,302.4 476.50,298.4 476.75,300.7 477.00,297.4 477.25,301.8 477.50,299.8 477.75,298.8 478.00,298.1 478.25,300.5 478.50,300.7 478.75,299.6 479.00,299.7 479.25,299.3 479.50,298.8 479.75,298.0 M480.00,395.1 480.00,385.5 480.25,358.0 480.50,374.8 480.75,355.3 481.00,375.7 481.25,358.7 481.50,371.8 481.75,357.8 482.00,375.0 482.25,358.7 482.50,372.5 482.75,362.4 483.00,373.5 483.25,364.4 483.50,371.2 483.75,364.4 484.00,368.6 484.25,362.5 484.50,369.8 484.75,365.4 485.00,369.2 485.25,365.5 M485.30,267.4 485.50,278.1 485.75,310.9 486.00,275.7 486.25,310.8 486.50,279.6 486.75,308.2 487.00,290.0 487.25,305.6 487.50,290.5 487.75,303.3 488.00,290.5 488.25,304.5 488.50,296.0 488.75,303.5 489.00,295.9 489.25,302.2 489.50,297.9 489.75,303.5 490.00,295.7 490.25,302.3 490.50,300.0 M490.70,397.6 490.75,381.4 491.00,357.9 491.25,374.2 491.50,361.0 491.75,375.4 492.00,355.7 492.25,373.0 492.50,359.6 492.75,370.2 493.00,362.7 493.25,370.6 493.50,362.9 493.75,372.7 494.00,362.7 494.25,368.6 494.50,365.0 494.75,371.8 495.00,360.8 M495.20,267.5 495.25,315.1 495.50,275.4 495.75,311.0 496.00,280.4 496.25,307.9 496.50,282.4 496.75,306.0 497.00,286.4 497.25,307.9 497.50,290.4 497.75,305.7 498.00,290.9 498.25,302.8 498.50,294.5 498.75,302.2 499.00,295.0 499.25,304.2 499.50,298.2 499.75,300.9 500.00,295.8 500.25,301.6 500.50,296.4 500.75,301.9 M500.80,394.9 501.00,353.9 501.25,375.8 501.50,357.2 501.75,377.9 502.00,362.1 502.25,373.4 502.50,358.7 502.75,373.8 503.00,363.0 503.25,370.3 503.50,364.1 503.75,372.7 504.00,360.9 504.25,370.8 504.50,361.3 504.75,371.1 505.00,364.0 505.25,368.0 M505.30,265.2 505.50,275.3 505.75,310.3 506.00,283.4 506.25,309.2 506.50,280.7 506.75,305.6 507.00,291.8 507.25,305.1 507.50,286.9 507.75,301.3 508.00,287.9 508.25,303.9 508.50,291.4 508.75,303.2 509.00,294.1 509.25,300.2 509.50,294.3 509.75,300.0 510.00,297.4 510.25,299.4 510.50,295.1 510.75,301.8 511.00,296.3 511.25,303.7 511.50,296.7 511.75,300.0 512.00,299.1 512.25,300.3 512.50,298.8 512.75,299.1 513.00,297.8 513.25,301.2 513.50,297.9 513.75,298.8 514.00,299.3 514.25,299.5 514.50,301.2 514.75,300.1 515.00,297.9 515.25,301.3 515.50,297.3 515.75,300.3 516.00,298.7 516.25,300.7 516.50,299.9 516.75,300.5 517.00,299.5 517.25,300.6 517.50,299.5 517.75,300.0 518.00,298.9 518.25,301.2 518.50,297.4 518.75,301.8 519.00,299.2 519.25,297.9 519.50,299.3 519.75,300.3 520.00,300.8 520.25,299.9 520.50,299.2 520.75,300.3 521.00,298.3 521.25,298.1 521.50,298.9 521.75,299.1 522.00,298.0 522.25,299.2 522.50,299.1 522.75,301.0 523.00,299.1 523.25,299.3 523.50,298.0 523.75,301.6 524.00,299.3 524.25,299.4 524.50,298.3 524.75,301.8 525.00,297.7 525.25,297.7 525.50,300.4 525.75,300.1 526.00,301.6 526.25,300.7 526.50,301.9 526.75,302.0 527.00,300.3 527.25,301.3 527.50,298.7 527.75,301.6 528.00,301.1 528.25,299.4 528.50,299.6 528.75,301.6 529.00,297.8 529.25,300.4 529.50,298.2 529.75,299.8 530.00,298.0 530.25,299.9 530.50,299.6 530.75,300.9 531.00,300.2 M531.20,396.7 531.25,384.0 531.50,357.6 531.75,376.8 532.00,361.8 532.25,377.6 532.50,358.9 532.75,375.2 533.00,360.4 533.25,372.7 533.50,362.7 533.75,373.4 534.00,362.5 534.25,373.2 534.50,366.0 534.75,368.8 535.00,363.5 535.25,370.0 535.50,361.3 535.75,370.0 536.00,364.1 536.25,369.6 536.50,362.5 536.75,370.5 537.00,364.5 537.25,368.3 537.50,365.3 537.75,368.9 538.00,367.0 538.25,366.1 538.50,365.2 538.75,369.2 539.00,367.1 539.25,369.0 539.50,365.7 539.75,367.2 540.00,365.4 540.25,367.8 540.50,366.3 540.75,367.1 541.00,365.5 541.25,368.4 M541.30,265.8 541.50,267.2 541.75,313.2 542.00,275.8 542.25,306.8 542.50,282.5 542.75,307.2 543.00,288.2 543.25,305.6 543.50,291.1 543.75,301.7 544.00,292.1 544.25,301.9 544.50,294.7 544.75,306.3 545.00,296.4 545.25,304.1 545.50,294.6 545.75,302.9 546.00,298.3 546.25,302.7 546.50,295.3 546.75,299.6 547.00,299.1 547.25,300.1 547.50,299.0 547.75,299.0 548.00,298.4 548.25,299.8 548.50,300.2 548.75,300.5 549.00,297.0 549.25,300.6 549.50,299.0 549.75,299.2 550.00,299.6 550.25,302.3 550.50,298.0 550.75,302.1 551.00,298.9 551.25,301.6 551.50,299.7 551.75,298.6 552.00,297.4 552.25,301.0 552.50,298.0 552.75,301.7 553.00,298.6 553.25,299.2 553.50,300.3 553.75,301.6 554.00,301.0 554.25,301.7 554.50,297.6 554.75,301.2 555.00,298.5 555.25,298.1 555.50,297.6 555.75,298.0 556.00,299.4 556.25,299.1 556.50,297.8 556.75,301.9 557.00,300.3 557.25,301.7 557.50,299.9 557.75,298.9 558.00,298.3 558.25,300.5 558.50,298.9 558.75,299.8 559.00,299.2 559.25,301.9 559.50,301.3 559.75,300.6 560.00,299.8 560.25,299.6 560.50,299.8 560.75,297.8 561.00,298.4 561.25,300.2 561.50,300.8 561.75,300.9 562.00,299.0 562.25,301.4 562.50,300.2 562.75,300.5 563.00,301.9 563.25,301.4 563.50,299.1 563.75,299.6 564.00,299.2 564.25,301.7 564.50,302.0 564.75,298.4 565.00,301.2 565.25,298.7 565.50,299.2 565.75,298.3 566.00,301.6 566.25,301.2 566.50,297.7 M566.70,394.2 566.75,382.7 567.00,355.5 567.25,377.2 567.50,356.4 567.75,376.1 568.00,358.9 568.25,373.9 568.50,358.3 568.75,372.8 569.00,364.8 569.25,372.2 569.50,364.0 569.75,372.1 570.00,365.4 570.25,369.5 570.50,361.8 570.75,368.5 571.00,365.1 571.25,368.9 571.50,364.3 571.75,367.8 572.00,363.3 572.25,368.4 572.50,363.8 572.75,369.9 573.00,365.2 573.25,367.5 573.50,365.3 573.75,368.9 574.00,367.0 574.25,368.4 574.50,364.3 574.75,366.6 575.00,367.3 575.25,369.7 575.50,366.0 575.75,368.7 576.00,363.5 576.25,369.5 576.50,364.0 576.75,366.3 577.00,366.9 577.25,367.1 M577.30,266.1 577.50,269.8 577.75,313.6 578.00,283.5 578.25,312.5 578.50,289.9 578.75,308.0 579.00,286.5 579.25,305.3 579.50,289.4 579.75,306.5 580.00,292.2 580.25,304.1 580.50,294.5 580.75,304.1 581.00,296.6 581.25,301.9 581.50,296.7 581.75,302.6 582.00,295.1 582.25,300.6 582.50,297.4 582.75,301.5 583.00,298.8 583.25,303.2 583.50,300.3 583.75,299.1 584.00,298.2 584.25,302.6 584.50,300.5 584.75,300.3 585.00,300.7 585.25,302.0 585.50,301.0 585.75,299.7 586.00,300.0 586.25,302.0 586.50,298.4 586.75,299.8 587.00,300.6 587.25,298.5 587.50,300.4 587.75,300.2 588.00,299.3 588.25,298.4 588.50,301.3 588.75,299.0 589.00,298.6 589.25,300.4 589.50,299.2 589.75,300.5 590.00,298.8 590.25,302.4 590.50,298.1 590.75,299.4 591.00,300.8 591.25,298.0 591.50,297.3 591.75,301.0 592.00,300.2 592.25,299.5 592.50,301.1 592.75,299.8 593.00,300.5 593.25,301.3 593.50,300.7 593.75,299.7 594.00,299.8 594.25,298.0 594.50,301.9 594.75,301.6 595.00,299.7 595.25,301.8 595.50,297.6 595.75,299.2 596.00,297.8 596.25,298.0 596.50,301.0 596.75,297.7 597.00,300.9 597.25,300.2 597.50,301.7 597.75,299.7 598.00,300.0 598.25,301.4 598.50,301.9 598.75,298.1 599.00,298.7 599.25,300.0 599.50,297.9 599.75,298.1 600.00,299.9 600.25,298.5 600.50,298.8 600.75,301.0 601.00,299.8 601.25,300.1 601.50,300.9 601.75,301.5 602.00,301.1 602.25,298.5 602.50,297.6 M602.70,395.2 602.75,384.1 603.00,354.9 603.25,375.2 603.50,359.5 603.75,373.7 604.00,361.1 604.25,374.4 604.50,363.2 604.75,372.8 605.00,359.2 605.25,371.3 605.50,364.9 605.75,372.3 606.00,364.2 606.25,368.6 606.50,364.5 606.75,368.7 607.00,363.5 607.25,371.1 607.50,364.0 607.75,370.6 M608.00,267.6 608.00,312.9 608.25,272.8 608.50,309.6 608.75,278.5 609.00,308.7 609.25,280.3 609.50,307.5 609.75,286.6 610.00,305.7 610.25,294.4 610.50,302.5 610.75,290.3 611.00,306.8 611.25,292.3 611.50,301.8 611.75,295.1 612.00,299.8 612.25,297.3 612.50,302.7 612.75,296.7 613.00,300.9 613.25,296.7 613.50,303.8 613.75,295.9 614.00,302.2 614.25,300.2 614.50,300.5 614.75,299.9 615.00,300.6 615.25,298.1 615.50,300.2 615.75,301.0 616.00,299.6 616.25,299.8 616.50,300.0 616.75,298.1 617.00,302.2 617.25,297.6 617.50,298.3 617.75,299.7 618.00,300.9 618.25,299.0 618.50,299.0 618.75,301.2 619.00,299.9 619.25,297.4 619.50,298.6 619.75,300.2 620.00,300.7 620.25,301.7 620.50,298.9 620.75,297.3 621.00,302.4 621.25,300.2 621.50,299.5 621.75,301.1 622.00,300.8 622.25,301.6 622.50,301.9 622.75,300.2 623.00,299.7 623.25,300.9 623.50,300.9 623.75,300.9 624.00,300.2 624.25,301.1 624.50,300.1 624.75,299.1 625.00,299.0 625.25,298.4 625.50,300.3 625.75,299.5 626.00,298.9 626.25,300.7 626.50,300.1 626.75,299.5 627.00,298.1 627.25,299.4 627.50,298.3 627.75,300.1 628.00,301.9 628.25,298.1 628.50,299.6 628.75,301.1 629.00,299.0 629.25,301.3 629.50,301.8 629.75,300.1 630.00,301.5 630.25,299.8 630.50,298.1 630.75,299.4 631.00,299.8 631.25,299.2 631.50,297.6 631.75,298.2 632.00,301.1 632.25,300.4 632.50,298.7 632.75,298.5 633.00,301.6 633.25,298.6 M633.30,394.2 633.50,350.1 633.75,379.1 634.00,360.7 634.25,378.1 634.50,357.8 634.75,376.5 635.00,362.2 635.25,371.3 635.50,359.7 635.75,371.5 636.00,359.5 636.25,373.4 636.50,363.6 636.75,371.1 637.00,365.4 637.25,372.6 637.50,364.3 637.75,369.2 638.00,361.9 638.25,368.1 638.50,362.4 M638.70,265.5 638.75,314.8 639.00,270.6 639.25,310.8 639.50,281.7 639.75,305.3 640.00,284.5 640.25,306.1 640.50,288.6 640.75,306.3 641.00,289.8 641.25,305.9 641.50,292.9 641.75,303.2 642.00,297.0 642.25,304.6 642.50,294.0 642.75,302.7 643.00,294.5 643.25,299.6 643.50,297.1 643.75,303.2 644.00,295.3 644.25,298.9 644.50,297.8 644.75,303.1 645.00,299.2 645.25,302.5 645.50,298.5 645.75,298.9 646.00,299.8 646.25,300.2 646.50,297.3 646.75,302.3 647.00,298.2 647.25,302.9 647.50,300.2 647.75,299.4 648.00,301.1 648.25,298.1 648.50,299.3 648.75,301.4 649.00,299.4 649.25,300.9 649.50,299.1 649.75,300.1 650.00,298.6 650.25,299.8 650.50,298.5 650.75,299.8 651.00,298.5 651.25,300.2 651.50,299.9 651.75,301.3 652.00,301.2 652.25,301.0 652.50,300.2 652.75,300.6 653.00,299.6 653.25,298.2 653.50,300.6 653.75,300.0 654.00,300.9 654.25,300.8 654.50,300.3 654.75,299.7 655.00,300.0 655.25,299.0 655.50,298.4 655.75,299.9 656.00,300.2 656.25,298.9 656.50,299.0 656.75,299.7 657.00,300.9 657.25,298.7 657.50,299.6 657.75,298.2 658.00,299.2 658.25,298.0 658.50,298.9 658.75,301.2 659.00,300.9 659.25,300.3 659.50,300.2 659.75,298.8 660.00,299.0 660.25,301.3 660.50,298.6 660.75,300.3 661.00,298.9 661.25,300.9 661.50,301.9 661.75,301.7 662.00,300.6 662.25,298.1 662.50,299.6 662.75,301.3 663.00,298.0 663.25,301.4 663.50,300.6 663.75,299.1 M664.00,396.9 664.00,385.3 664.25,356.1 664.50,377.4 664.75,354.2 665.00,375.4 665.25,358.1 665.50,373.1 665.75,361.9 666.00,370.7 666.25,360.6 666.50,373.3 666.75,359.4 667.00,371.7 667.25,362.7 667.50,371.6 667.75,363.9 668.00,372.5 668.25,362.6 668.50,369.6 668.75,365.1 669.00,368.4 669.25,365.4 M669.30,265.8 669.50,278.8 669.75,313.7 670.00,274.3 670.25,309.0 670.50,288.5 670.75,308.6 671.00,287.4 671.25,305.6 671.50,287.2 671.75,306.5 672.00,292.8 672.25,306.0 672.50,294.6 672.75,303.2 673.00,294.2 673.25,301.5 673.50,297.3 673.75,302.2 674.00,295.1 674.25,303.3 674.50,295.9 674.75,303.0 675.00,299.6 675.25,300.4 675.50,298.0 675.75,300.8 676.00,300.0 676.25,302.1 676.50,299.9 676.75,299.5 677.00,298.2 677.25,299.2 677.50,298.1 677.75,300.3 678.00,296.9 678.25,300.6 678.50,300.2 678.75,299.1 679.00,300.9 679.25,301.9 679.50,301.2 679.75,301.9 680.00,299.2 680.25,302.4 680.50,297.7 680.75,298.2 681.00,298.0 681.25,300.5 681.50,298.0 681.75,300.7 682.00,297.4 682.25,299.5 682.50,300.3 682.75,298.2 683.00,301.0 683.25,300.1 683.50,300.8 683.75,300.7 684.00,301.4 684.25,302.1 684.50,300.5 684.75,300.3 685.00,297.4 685.25,299.5 685.50,297.9 685.75,299.3 686.00,301.5 686.25,300.3 686.50,301.7 686.75,302.2 687.00,299.9 687.25,300.6 687.50,300.4 687.75,301.6 688.00,300.6 688.25,300.6 688.50,298.1 688.75,300.0 689.00,298.4 689.25,300.2 689.50,299.7 689.75,300.4 690.00,300.7 690.25,298.6 690.50,300.6 690.75,298.7 691.00,299.5 691.25,299.9 691.50,300.3 691.75,299.3 692.00,299.0 692.25,301.9 692.50,299.1 692.75,300.2 693.00,299.7 693.25,301.0 693.50,300.3 693.75,301.1 694.00,300.2 694.25,299.4 694.50,297.9 694.75,298.4 695.00,301.8 695.25,297.8 M695.50,395.5 695.50,388.5 695.75,358.6 696.00,375.9 696.25,356.5 696.50,373.5 696.75,359.7 697.00,373.4 697.25,358.6 697.50,372.6 697.75,362.3 698.00,371.4 698.25,362.2 698.50,368.9 698.75,363.4 699.00,370.5 699.25,361.6 699.50,370.2 699.75,363.8 700.00,369.9 700.25,363.0 700.50,370.4 700.75,364.0 M700.80,267.1 701.00,269.2 701.25,312.9 701.50,280.4 701.75,308.9 702.00,285.3 702.25,309.1 702.50,286.1 702.75,306.7 703.00,292.7 703.25,304.1 703.50,294.2 703.75,302.2 704.00,294.6 704.25,305.3 704.50,294.0 704.75,303.1 705.00,297.1 705.25,302.4 705.50,299.1 705.75,301.7 706.00,295.6 706.25,299.8 706.50,295.9 706.75,301.2 707.00,299.8 707.25,301.7 707.50,296.4 707.75,302.2 708.00,297.0 708.25,299.1 708.50,299.2 708.75,300.4 709.00,298.3 709.25,299.7 709.50,298.5 709.75,298.8 710.00,297.0 710.25,299.4 710.50,297.1 710.75,299.3 711.00,299.9 711.25,301.8 711.50,299.5 711.75,300.8 712.00,301.6 712.25,299.7 712.50,297.2 712.75,301.7 713.00,298.3 713.25,302.2 713.50,299.4 713.75,301.6 714.00,299.1 714.25,302.0 714.50,301.2 714.75,300.8 715.00,301.7 715.25,300.8 715.50,298.5 715.75,299.7 716.00,297.8 716.25,301.0 716.50,300.1 716.75,300.1 717.00,299.6 717.25,301.1 717.50,298.1 717.75,299.6 718.00,298.2 718.25,302.0 718.50,299.3 718.75,298.2 719.00,298.6 719.25,298.5 719.50,301.0 719.75,298.4 720.00,299.6 720.25,298.0 720.50,299.4 720.75,301.8 721.00,299.4 721.25,298.3 721.50,298.2 721.75,298.7 722.00,301.2 722.25,300.9 722.50,299.7 722.75,300.8 723.00,300.1 723.25,301.1 723.50,298.7 723.75,300.9 724.00,300.6 724.25,300.6 724.50,298.8 724.75,297.9 725.00,299.0 725.25,301.7 725.50,297.7 725.75,299.8 M725.90,396.0 726.00,387.4 726.25,358.3 726.50,377.9 726.75,359.4 727.00,374.3 727.25,363.4 727.50,373.3 727.75,361.8 728.00,371.5 728.25,362.6 728.50,370.7 728.75,359.1 729.00,374.1 729.25,364.9 729.50,371.7 729.75,361.6 730.00,372.1 730.25,361.4 730.50,367.7 M730.70,266.0 730.75,307.7 731.00,273.4 731.25,306.2 731.50,280.5 731.75,307.8 732.00,286.5 732.25,306.4 732.50,286.4 732.75,307.1 733.00,290.7 733.25,305.5 733.50,290.0 733.75,303.6 734.00,294.8 734.25,302.3 734.50,297.2 734.75,304.0 735.00,297.6 735.25,300.8 735.50,297.6 735.75,302.7 736.00,298.2 736.25,300.3 736.50,296.5 736.75,299.7 737.00,298.0 737.25,302.1 737.50,298.3 737.75,301.2 738.00,297.2 738.25,300.0 738.50,298.2 738.75,298.9 739.00,298.6 739.25,301.0 739.50,301.0 739.75,301.1 740.00,296.9 740.25,301.5 740.50,298.8 740.75,299.2 741.00,297.7 741.25,300.1 741.50,299.2 741.75,300.1 742.00,300.4 742.25,301.8 742.50,297.6 742.75,298.1 743.00,299.0 743.25,300.1 743.50,299.0 743.75,301.4 744.00,300.8 744.25,299.4 744.50,298.9 744.75,299.7 745.00,301.6 745.25,299.1 745.50,300.0 745.75,301.4 746.00,300.5 746.25,301.6 746.50,301.7 746.75,298.1 747.00,298.0 747.25,300.5 747.50,299.8 747.75,300.6 748.00,299.0 748.25,302.2 748.50,298.0 748.75,297.8 749.00,302.0 749.25,301.8 749.50,299.8 749.75,299.0 750.00,298.7 750.25,299.7 750.50,300.2 750.75,299.4 751.00,299.7 751.25,297.8 751.50,300.5 751.75,297.9 752.00,298.9 752.25,299.1 752.50,300.3 752.75,297.8 753.00,300.0 753.25,300.5 753.50,299.1 753.75,300.6 754.00,301.7 754.25,299.1 754.50,301.6 754.75,299.7 755.00,299.7 755.25,300.3 755.50,300.1 755.75,298.0 756.00,299.8 756.25,300.0 756.50,299.2 756.75,301.7 M756.80,395.9 757.00,355.0 757.25,382.5 757.50,358.0 757.75,376.3 758.00,359.5 758.25,371.3 758.50,363.5 758.75,375.1 759.00,358.8 759.25,372.4 759.50,361.2 759.75,370.6 760.00,364.3 760.25,373.5 760.50,363.8 760.75,371.6 761.00,366.3 761.25,366.5 M761.30,267.1 761.50,278.6 761.75,316.3 762.00,285.5 762.25,307.2 762.50,289.8 762.75,307.1 763.00,290.5 763.25,306.1 763.50,288.1 763.75,301.9 764.00,291.6 764.25,303.8 764.50,293.5 764.75,303.0 765.00,297.1 765.25,300.8 765.50,296.7 765.75,300.4 766.00,299.2 766.25,303.7 766.50,297.8 766.75,302.5 767.00,296.2 767.25,299.3 767.50,299.7 767.75,300.0 768.00,297.7 768.25,300.4 768.50,297.1 768.75,299.9 769.00,300.0 769.25,298.2 769.50,296.9 769.75,300.1 770.00,297.4 770.25,298.8 770.50,298.3 770.75,298.6 771.00,299.5 771.25,299.1 771.50,300.2 771.75,301.2 772.00,298.0 772.25,301.4 772.50,301.4 772.75,301.7 773.00,300.8 773.25,301.7 773.50,300.8 773.75,301.4 774.00,301.9 774.25,301.3 774.50,300.5 774.75,299.1 775.00,299.3 775.25,298.5 775.50,300.4 775.75,299.8 776.00,297.8 776.25,300.3 776.50,298.4 776.75,301.5 777.00,299.8 777.25,298.2 777.50,299.3 777.75,301.2 778.00,300.9 778.25,301.9 778.50,297.7 778.75,299.9 779.00,300.8 779.25,298.9 779.50,300.6 779.75,300.9 780.00,300.3 780.25,302.2 780.50,298.7 780.75,299.9 781.00,298.0 781.25,300.6 781.50,300.6 781.75,297.9 782.00,301.4 782.25,299.6 782.50,300.5 782.75,299.4 783.00,298.1 783.25,300.6 783.50,300.9 783.75,299.8 784.00,299.5 784.25,298.0 784.50,301.3 784.75,300.8 785.00,298.9 785.25,302.0 785.50,297.6 785.75,301.9 786.00,299.0 786.25,300.6 786.50,302.0 786.75,299.9 787.00,297.9 787.25,301.7 M787.50,394.5 787.50,384.8 787.75,357.6 788.00,376.6 788.25,358.7 788.50,377.1 788.75,359.3 789.00,373.4 789.25,359.0 789.50,373.2 789.75,361.8 790.00,370.5 790.25,360.9 790.50,370.6 790.75,365.0 791.00,371.8 791.25,362.4 791.50,371.3 791.75,364.1 792.00,370.3 792.25,364.5 792.50,369.3 M792.70,267.0 792.75,313.9 793.00,271.5 793.25,307.4 793.50,285.2 793.75,306.7 794.00,284.1 794.25,306.3 794.50,289.9 794.75,306.9 795.00,293.0 795.25,301.5 795.50,292.4 795.75,301.8 796.00,293.8 796.25,302.0 796.50,293.7 796.75,301.2 797.00,297.2 797.25,303.5 797.50,297.9 797.75,301.4 798.00,295.7 798.25,303.1 798.50,296.3 798.75,302.1 799.00,296.2 799.25,298.6 799.50,296.3 799.75,300.7 800.00,297.0 800.25,300.3 800.50,296.6 800.75,302.3 801.00,301.3 801.25,302.0 801.50,297.9 801.75,299.7 802.00,300.7 802.25,298.6 802.50,300.0 802.75,302.1 803.00,299.9 803.25,300.1 803.50,300.7 803.75,300.1 804.00,300.1 804.25,298.5 804.50,297.2 804.75,299.6 805.00,297.3 805.25,299.3 805.50,300.3 805.75,298.2 806.00,301.2 806.25,298.3 806.50,299.2 806.75,300.9 807.00,301.7 807.25,298.0 807.50,300.0 807.75,300.4 808.00,301.7 808.25,297.9 808.50,297.6 808.75,300.8 809.00,298.4 809.25,298.7 809.50,300.6 809.75,297.9 810.00,299.6 810.25,298.2 810.50,301.6 810.75,301.2 811.00,301.4 811.25,301.8 811.50,300.6 811.75,298.3 812.00,300.3 812.25,297.7 812.50,298.7 812.75,301.8 813.00,300.7 813.25,300.0 813.50,301.8 813.75,297.8 814.00,301.9 814.25,298.5 814.50,299.4 814.75,300.6 815.00,297.6 815.25,299.9 815.50,299.3 815.75,300.2 816.00,297.8 816.25,301.6 816.50,298.0 816.75,300.8 817.00,298.5 817.25,301.6 817.50,297.7 817.75,301.3 M818.00,394.5 818.00,387.9 818.25,359.2 818.50,377.8 818.75,359.9 819.00,375.6 819.25,357.4 819.50,372.0 819.75,361.3 820.00,373.5 820.25,361.2 820.50,371.6 820.75,360.5 821.00,373.4 821.25,363.7 821.50,373.6 821.75,363.4 822.00,368.9 822.25,364.2 822.50,367.1 822.75,364.0 823.00,368.4 823.25,363.8 M823.30,267.3 823.50,281.9 823.75,311.6 824.00,285.6 824.25,309.0 824.50,283.0 824.75,303.5 825.00,291.4 825.25,305.0 825.50,290.6 825.75,305.1 826.00,291.0 826.25,301.0 826.50,293.0 826.75,302.7 827.00,296.7 827.25,302.2 827.50,295.1 827.75,304.7 828.00,294.5 828.25,302.9 828.50,295.5 828.75,303.2 829.00,296.2 829.25,301.9 829.50,299.8 829.75,298.7 830.00,297.1 830.25,300.3 830.50,296.5 830.75,300.0 831.00,297.1 831.25,302.1 831.50,300.7 831.75,300.4 832.00,300.2 832.25,301.7 832.50,298.8 832.75,300.6 833.00,301.1 833.25,299.3 833.50,301.1 833.75,299.2 834.00,300.6 834.25,300.8 834.50,299.9 834.75,300.6 835.00,300.9 835.25,298.3 835.50,298.5 835.75,302.1 836.00,300.3 836.25,298.5 836.50,300.3 836.75,299.6 837.00,300.3 837.25,301.0 837.50,298.8 837.75,298.2 838.00,299.5 838.25,300.5 838.50,300.0 838.75,298.7 839.00,300.1 839.25,298.2 839.50,299.3 839.75,300.2 840.00,301.8 840.25,298.5 840.50,301.4 840.75,300.4 841.00,300.0 841.25,301.3 841.50,300.4 841.75,301.6 842.00,299.4 842.25,300.5 842.50,297.8 842.75,297.7 843.00,301.4 843.25,297.9 843.50,299.2 843.75,301.6 844.00,299.7 844.25,300.2 844.50,300.6 844.75,298.7 845.00,299.3 845.25,301.4 845.50,297.9 845.75,300.8 846.00,297.6 846.25,298.2 846.50,301.3 846.75,299.1 847.00,298.0 847.25,300.9 847.50,300.5 847.75,301.8 848.00,302.0 848.25,300.5 848.50,301.7 M848.70,397.1 848.75,383.3 849.00,358.9 849.25,379.9 849.50,357.5 849.75,371.5 850.00,361.0 850.25,375.9 850.50,364.2 850.75,373.8 851.00,360.3 851.25,371.2 851.50,362.0 851.75,371.3 852.00,363.3 852.25,370.1 852.50,361.4 852.75,369.8 853.00,362.6 853.25,370.6 853.50,363.7 853.75,368.2 M854.00,265.8 854.00,315.8 854.25,273.1 854.50,306.1 854.75,277.1 855.00,307.8 855.25,282.3 855.50,308.1 855.75,286.2 856.00,302.6 856.25,291.1 856.50,306.3 856.75,290.7 857.00,304.7 857.25,292.5 857.50,303.0 857.75,295.8 858.00,301.9 858.25,296.9 858.50,300.6 858.75,297.4 859.00,301.1 859.25,299.3 859.50,303.0 859.75,296.9 860.00,301.7 860.25,295.6 860.50,299.1 860.75,296.7 861.00,298.9 861.25,297.7 861.50,300.9 861.75,297.5 862.00,298.8 862.25,300.3 862.50,300.3 862.75,297.1 863.00,300.8 863.25,298.1 863.50,301.9 863.75,297.5 864.00,299.7 864.25,301.3 864.50,300.1 864.75,297.5 865.00,301.0 865.25,298.5 865.50,298.9 865.75,301.7 866.00,301.1 866.25,300.3 866.50,299.1 866.75,300.0 867.00,300.0 867.25,299.3 867.50,300.0 867.75,300.4 868.00,298.5 868.25,298.1 868.50,300.9 868.75,301.1 869.00,298.3 869.25,298.6 869.50,298.1 869.75,297.7 870.00,297.9 870.25,301.8 870.50,301.6 870.75,297.7 871.00,299.9 871.25,298.2 871.50,301.4 871.75,299.4 872.00,298.3 872.25,299.1 872.50,298.3 872.75,297.7 873.00,300.5 873.25,301.6 873.50,299.0 873.75,302.1 874.00,301.9 874.25,301.7 874.50,301.8 874.75,299.8 875.00,301.4 875.25,301.5 875.50,301.0 875.75,297.9 876.00,297.7 876.25,299.1 876.50,300.2 876.75,301.5 877.00,299.7 877.25,297.8 877.50,301.2 877.75,297.8 878.00,301.8 878.25,300.4 878.50,299.3 878.75,300.7 879.00,301.2 879.25,302.0 M879.30,396.9 879.50,355.6 879.75,375.2 880.00,355.5 880.25,376.0 880.50,359.9 880.75,375.5 881.00,359.8 881.25,371.7 881.50,361.7 881.75,371.1 882.00,361.8 882.25,371.6 882.50,361.1 882.75,371.8 883.00,361.9 883.25,369.2 883.50,365.8 883.75,371.3 884.00,365.5 884.25,368.1 884.50,364.4 M884.70,266.0 884.75,311.0 885.00,277.1 885.25,310.7 885.50,280.4 885.75,305.2 886.00,285.2 886.25,306.7 886.50,286.7 886.75,305.8 887.00,289.2 887.25,303.7 887.50,294.7 887.75,303.5 888.00,291.9 888.25,300.8 888.50,295.9 888.75,303.3 889.00,296.3 889.25,299.9 889.50,298.3 889.75,302.0 890.00,296.7 890.25,299.2 890.50,297.0 890.75,302.8 891.00,299.5 891.25,299.4 891.50,298.5 891.75,300.3 892.00,297.2 892.25,300.5 892.50,297.8 892.75,302.1 893.00,297.2 893.25,302.3 893.50,299.4 893.75,300.5 894.00,297.2 894.25,298.6 894.50,300.4 894.75,300.3 895.00,299.3 895.25,298.9 895.50,300.0 895.75,298.7 896.00,301.3 896.25,299.0 896.50,301.1 896.75,301.0 897.00,301.1 897.25,301.1 897.50,297.4 897.75,300.5 898.00,300.2 898.25,302.2 898.50,300.6 898.75,298.5 899.00,301.2 899.25,299.1 899.50,297.6 899.75,298.0 900.00,299.0 900.25,299.3 900.50,301.2 900.75,301.0 901.00,297.8 901.25,298.5 901.50,299.9 901.75,298.7 902.00,299.0 902.25,299.1 902.50,301.5 902.75,300.7 903.00,299.8 903.25,302.2 903.50,298.7 903.75,299.6 904.00,300.2 904.25,300.3 904.50,301.3 904.75,298.0 905.00,299.3 905.25,298.9 905.50,301.8 905.75,299.2 906.00,300.0 906.25,300.9 906.50,301.9 906.75,299.9 907.00,297.5 907.25,299.9 907.50,301.0 907.75,301.6 908.00,299.4 908.25,300.5 908.50,298.8 908.75,300.4 909.00,299.7 909.25,300.0 909.50,299.4 909.75,298.2 910.00,299.1 910.25,299.4 910.50,297.7 910.75,300.4 M910.80,396.1 911.00,355.1 911.25,381.6 911.50,356.2 911.75,375.6 912.00,359.9 912.25,374.2 912.50,357.5 912.75,373.2 913.00,363.5 913.25,374.7 913.50,359.6 913.75,371.6 914.00,361.2 914.25,370.2 914.50,360.2 914.75,367.5 915.00,362.0 915.25,371.6 M915.30,266.3 915.50,277.1 915.75,310.8 916.00,281.1 916.25,307.6 916.50,284.5 916.75,304.4 917.00,288.4 917.25,303.9 917.50,289.6 917.75,303.0 918.00,293.5 918.25,306.2 918.50,292.0 918.75,304.1 919.00,292.5 919.25,304.5 919.50,295.4 919.75,302.7 920.00,297.8 920.25,301.9 920.50,297.7 920.75,302.8 921.00,297.8 921.25,299.5 921.50,299.0 921.75,298.9 922.00,297.3 922.25,299.3 922.50,296.9 922.75,299.5 923.00,296.9 923.25,299.2 923.50,297.1 923.75,298.6 924.00,296.9 924.25,302.4 924.50,298.2 924.75,300.7 925.00,299.3 925.25,300.5 925.50,301.1 925.75,301.5 926.00,297.1 926.25,300.1 926.50,301.4 926.75,300.4 927.00,299.9 927.25,298.6 927.50,300.0 927.75,299.3 928.00,297.7 928.25,299.6 928.50,300.5 928.75,299.2 929.00,301.1 929.25,299.4 929.50,299.8 929.75,301.9 930.00,301.6 930.25,298.0 930.50,301.2 930.75,301.7 931.00,301.9 931.25,301.4 931.50,299.9 931.75,298.3 932.00,297.9 932.25,301.2 932.50,297.6 932.75,298.8 933.00,299.3 933.25,301.6 933.50,301.7 933.75,297.9 934.00,299.6 934.25,299.4 934.50,298.2 934.75,299.8 935.00,301.2 935.25,300.2 935.50,299.3 935.75,298.1 936.00,299.3 936.25,299.8 936.50,300.2 936.75,302.1 937.00,300.8 937.25,299.7 937.50,298.1 937.75,301.0 938.00,300.5 938.25,300.4 938.50,301.1 938.75,299.7 939.00,298.9 939.25,301.5 939.50,299.0 939.75,299.5 940.00,301.0 940.25,301.9 940.50,299.3 940.75,297.8 941.00,301.1 M941.20,395.4 941.25,383.5 941.50,351.8 941.75,377.7 942.00,358.0 942.25,375.4 942.50,362.7 942.75,373.9 943.00,364.4 943.25,371.7 943.50,362.0 943.75,372.4 944.00,359.6 944.25,371.7 944.50,361.1 944.75,371.3 945.00,364.0 945.25,370.7 945.50,363.0 945.75,367.4 946.00,365.5 946.25,371.6 M946.50,266.8 946.50,311.1 946.75,276.1 947.00,308.3 947.25,281.1 947.50,308.5 947.75,278.5 948.00,306.3 948.25,290.2 948.50,307.1 948.75,289.2 949.00,304.1 949.25,293.2 949.50,301.8 949.75,291.7 950.00,304.0 950.25,294.5 950.50,301.1 950.75,294.3 951.00,303.3 951.25,298.4 951.50,300.9 951.75,296.3 952.00,299.3 952.25,299.5 952.50,302.5 952.75,298.2 953.00,298.8 953.25,299.4 953.50,299.8 953.75,299.6 954.00,299.8 954.25,299.4 954.50,299.0 954.75,300.1 955.00,298.6 955.25,296.9 955.50,301.4 955.75,297.7 956.00,301.0 956.25,297.6 956.50,299.8 956.75,301.3 957.00,301.3 957.25,298.3 957.50,299.8 957.75,298.9 958.00,299.6 958.25,298.7 958.50,298.2 958.75,298.3 959.00,302.3 959.25,299.6 959.50,300.6 959.75,300.9 960.00,301.5 960.25,298.3 960.50,299.2 960.75,299.9 961.00,299.5 961.25,300.0 961.50,300.2 961.75,298.0 962.00,300.1 962.25,301.0 962.50,300.6 962.75,301.9 963.00,298.0 963.25,299.7 963.50,298.5 963.75,300.4 964.00,301.9 964.25,299.5 964.50,301.8 964.75,298.9 965.00,297.8 965.25,298.1 965.50,301.8 965.75,298.9 966.00,302.0 966.25,298.6 966.50,298.3 966.75,299.0 967.00,302.1 967.25,298.8 967.50,299.7 967.75,300.8 968.00,299.5 968.25,300.4 968.50,300.1 968.75,302.0 969.00,300.0 969.25,300.0 969.50,301.0 969.75,299.3 970.00,299.0 970.25,298.9 970.50,297.7 970.75,298.1 971.00,297.8 971.25,301.0 971.50,299.6 971.75,300.8 972.00,297.6 M972.20,394.7 972.25,381.7 972.50,357.8 972.75,375.8 973.00,356.7 973.25,373.5 973.50,358.6 973.75,374.0 974.00,364.2 974.25,373.5 974.50,361.0 974.75,372.2 975.00,364.6 975.25,368.6 975.50,365.3 975.75,370.8 976.00,365.2 976.25,369.4 976.50,364.2 976.75,370.5 977.00,364.1 M977.20,266.7 977.25,316.2 977.50,278.4 977.75,309.4 978.00,281.2 978.25,307.5 978.50,284.6 978.75,303.9 979.00,290.2 979.25,305.2 979.50,292.2 979.75,307.5 980.00,295.4 980.25,304.7 980.50,294.9 980.75,302.5 981.00,297.5 981.25,301.6 981.50,294.6 981.75,301.1 982.00,294.9 982.25,301.6 982.50,299.0 982.75,299.6 983.00,295.4 983.25,303.0 983.50,298.5 983.75,303.6 984.00,300.1 984.25,303.2 984.50,297.4 984.75,299.2 985.00,300.9 985.25,299.4 985.50,299.0 985.75,301.8 986.00,297.3 986.25,299.7 986.50,297.1 986.75,301.9 987.00,298.2 987.25,298.7 987.50,297.8 987.75,299.8 988.00,298.5 988.25,299.4 988.50,299.8 988.75,299.9 989.00,298.1 989.25,302.3 989.50,300.2 989.75,299.8 990.00,299.3 990.25,301.8 990.50,300.9 990.75,298.6 991.00,300.3 991.25,300.0 991.50,301.8 991.75,299.0 992.00,301.8 992.25,301.4 M992.30,396.7 992.50,356.6 992.75,379.4 993.00,354.4 993.25,374.5 993.50,358.0 993.75,370.9 994.00,360.0 994.25,373.8 994.50,359.7 994.75,372.0 995.00,358.7 995.25,369.6 995.50,363.7 995.75,368.7 996.00,361.8 996.25,369.6 996.50,362.2 996.75,368.8 997.00,362.7 997.25,368.4 997.50,365.6 997.75,368.8 M997.80,267.0 998.00,275.3 998.25,310.5 998.50,282.7 998.75,309.6 999.00,281.7 999.25,305.8 999.50,285.9 999.75,302.6 1000.00,287.2 1000.25,305.4 1000.50,292.6 1000.75,301.6 1001.00,295.3 1001.25,305.3 1001.50,296.7 1001.75,302.8 1002.00,294.4 1002.25,300.5 1002.50,294.7 1002.75,303.0 M1002.90,395.6 1003.00,384.1 1003.25,352.9 1003.50,377.7 1003.75,360.1 1004.00,375.7 1004.25,362.5 1004.50,370.8 1004.75,361.8 1005.00,375.5 1005.25,363.1 1005.50,374.2 1005.75,361.0 1006.00,368.8 1006.25,363.3 1006.50,369.4 1006.75,362.3 1007.00,370.0 1007.25,362.7 1007.50,370.7 1007.75,362.7 1008.00,367.4 M1008.20,265.3 1008.25,312.0 1008.50,273.7 1008.75,311.8 1009.00,280.2 1009.25,310.2 1009.50,282.0 1009.75,305.0 1010.00,288.2 1010.25,305.7 1010.50,288.5 1010.75,305.7 1011.00,293.9 1011.25,305.5 1011.50,293.7 1011.75,302.7 1012.00,294.7 1012.25,301.3 1012.50,295.3 1012.75,300.4 1013.00,298.1 M1013.20,394.9 1013.25,378.2 1013.50,352.7 1013.75,380.1 1014.00,360.4 1014.25,375.8 1014.50,360.0 1014.75,375.5 1015.00,361.3 1015.25,373.6 1015.50,361.5 1015.75,372.9 1016.00,362.3 1016.25,370.6 1016.50,364.6 1016.75,371.7 1017.00,364.3 1017.25,369.7 1017.50,363.0 1017.75,369.6 1018.00,366.5 1018.25,371.0 1018.50,363.2 1018.75,370.3 1019.00,364.9 1019.25,367.2 1019.50,367.0 1019.75,366.8 1020.00,364.6 1020.25,369.7 1020.50,366.4 1020.75,369.4 1021.00,367.3 1021.25,369.3 1021.50,367.6 1021.75,365.8 1022.00,365.7 1022.25,365.1 1022.50,367.8 1022.75,368.7 1023.00,365.1 1023.25,368.3 1023.50,367.5 1023.75,367.6 1024.00,365.8 1024.25,368.9 1024.50,368.3 1024.75,366.5 1025.00,364.3 1025.25,366.5 1025.50,365.9 1025.75,367.9 1026.00,364.9 1026.25,368.3 1026.50,365.9 1026.75,367.9 1027.00,367.7 1027.25,366.2 1027.50,367.1 1027.75,367.7 1028.00,367.7 1028.25,366.8 1028.50,367.3 1028.75,367.6 1029.00,366.5 1029.25,365.6 1029.50,365.5 1029.75,367.6 1030.00,367.9 1030.25,366.6 1030.50,365.3 1030.75,367.4 1031.00,367.3 1031.25,365.9 1031.50,366.4 1031.75,366.6 1032.00,367.6 1032.25,365.7 1032.50,366.3 1032.75,366.6 1033.00,367.5 1033.25,365.6 1033.50,365.5 1033.75,366.0 1034.00,366.4 1034.25,366.4 1034.50,365.5 1034.75,366.8 1035.00,367.7 1035.25,366.5 1035.50,365.5 1035.75,367.5 1036.00,366.5 1036.25,367.3 1036.50,366.5 1036.75,367.9 1037.00,366.0 1037.25,368.1 1037.50,367.5 1037.75,365.4 1038.00,367.1 1038.25,367.9 1038.50,367.1 1038.75,366.9 M1038.90,238.6 1039.00,325.4 1039.25,259.5 1039.50,315.5 1039.75,261.0 1040.00,316.6 1040.25,261.1 1040.50,312.2 1040.75,265.9 1041.00,312.3 1041.25,270.2 1041.50,315.7 1041.75,276.1 1042.00,313.7 1042.25,286.2 1042.50,310.3 1042.75,278.1 1043.00,310.1 1043.25,281.2 1043.50,304.8 1043.75,284.2 1044.00,305.7 1044.25,288.0 1044.50,306.1 M1044.60,395.6 1044.75,352.4 1045.00,378.9 1045.25,360.6 1045.50,377.7 1045.75,362.3 1046.00,372.1 1046.25,361.1 1046.50,373.7 1046.75,363.2 1047.00,371.5 1047.25,361.9 1047.50,370.5 1047.75,364.4 1048.00,369.6 1048.25,365.2 1048.50,369.4 1048.75,360.4 1049.00,370.6 1049.25,364.3 1049.50,366.2 1049.75,365.8 1050.00,370.5 1050.25,362.9 1050.50,370.6 1050.75,363.3 1051.00,369.2 1051.25,365.6 1051.50,367.8 1051.75,365.7 1052.00,368.8 1052.25,366.2 1052.50,367.6 1052.75,366.7 1053.00,366.8 1053.25,364.2 1053.50,367.7 1053.75,364.3 1054.00,367.4 1054.25,364.9 1054.50,369.1 1054.75,368.1 1055.00,365.8 1055.25,365.2 1055.50,366.9 1055.75,366.3 1056.00,365.2 1056.25,365.9 1056.50,366.3 1056.75,366.6 1057.00,366.4 1057.25,366.5 1057.50,365.7 1057.75,367.0 1058.00,368.0 1058.25,367.7 1058.50,365.9 1058.75,367.1 1059.00,367.2 1059.25,367.2 1059.50,365.8 1059.75,367.5 1060.00,366.7 1060.25,367.2 1060.50,366.1 1060.75,366.3 1061.00,367.2 1061.25,367.7 1061.50,365.6 1061.75,367.8 1062.00,367.3 1062.25,366.6 1062.50,366.1 1062.75,368.0 1063.00,366.8 1063.25,367.0 1063.50,367.9 1063.75,367.4 1064.00,366.4 1064.25,367.0 1064.50,368.1 1064.75,367.8 1065.00,367.9 1065.25,365.6 1065.50,367.5 1065.75,366.3 1066.00,366.5 1066.25,367.3 1066.50,367.0 1066.75,366.5 1067.00,365.8 1067.25,366.9 1067.50,367.1 1067.75,366.9 1068.00,366.0 1068.25,365.9 1068.50,367.9 1068.75,368.1 1069.00,367.5 1069.25,367.4 1069.50,366.2 1069.75,367.2 1070.00,366.7 1070.25,365.8 1070.50,366.2 1070.75,365.7 1071.00,367.7 1071.25,365.6 1071.50,365.8 1071.75,367.1 1072.00,367.1 1072.25,367.3 1072.50,365.7 1072.75,365.5 1073.00,367.7 1073.25,367.3 1073.50,365.7 1073.75,367.9 1074.00,366.7 1074.25,365.5 1074.50,367.3 1074.75,368.0 1075.00,366.1 1075.25,367.1 1075.50,365.9 1075.75,368.1 1076.00,365.7 1076.25,366.3 1076.50,366.9 1076.75,365.7 1077.00,368.0 1077.25,368.0 1077.50,365.6 1077.75,365.8 1078.00,367.1 1078.25,367.7 1078.50,367.0 1078.75,366.6 1079.00,368.2 1079.25,367.6 1079.50,366.2 1079.75,367.0 1080.00,366.8 1080.25,367.1 1080.50,366.2 1080.75,367.6 1081.00,365.9 1081.25,367.6 1081.50,367.4 1081.75,365.9 1082.00,368.1 1082.25,366.5 1082.50,366.6 1082.75,366.2 1083.00,367.2 1083.25,366.2 1083.50,367.2 1083.75,366.6 1084.00,366.3 1084.25,367.7 1084.50,367.5 1084.75,365.9 1085.00,366.1 1085.25,366.1 1085.50,366.7 1085.75,368.1 1086.00,366.7 1086.25,368.1 1086.50,367.0 1086.75,367.9 1087.00,367.9 1087.25,366.6 1087.50,366.7 1087.75,367.3 1088.00,366.9 1088.25,367.3 1088.50,367.1 1088.75,367.4 1089.00,365.8 1089.25,367.7 1089.50,365.8 1089.75,367.0 1090.00,367.9 1090.25,367.8 1090.50,365.6 1090.75,367.6 1091.00,366.3 1091.25,366.0 1091.50,366.0 1091.75,368.3 1092.00,366.3 1092.25,365.7 1092.50,366.9 1092.75,366.1 1093.00,366.1 1093.25,367.8 1093.50,366.9 1093.75,368.0 1094.00,367.5 1094.25,366.7 1094.50,367.9 1094.75,367.3 1095.00,366.6 1095.25,367.1 1095.50,367.7 1095.75,367.8 1096.00,366.1 1096.25,367.9 1096.50,366.7 1096.75,368.2 1097.00,367.4 1097.25,367.6 1097.50,366.6 1097.75,368.0 1098.00,366.4 1098.25,367.9 1098.50,367.6 1098.75,368.4 1099.00,367.1 1099.25,365.7 1099.50,366.8 1099.75,366.9 1100.00,366.7 1100.25,368.2 1100.50,366.7 1100.75,366.4 1101.00,367.8 1101.25,367.9 1101.50,367.1 1101.75,365.9 1102.00,368.0 1102.25,366.2 1102.50,366.0 1102.75,366.6 1103.00,367.8 1103.25,367.7 1103.50,366.6 1103.75,366.6 1104.00,367.8 1104.25,367.8 1104.50,366.5 1104.75,367.4 1105.00,367.4 1105.25,366.9 1105.50,366.0 1105.75,368.2 1106.00,368.3 1106.25,366.8 1106.50,366.0 1106.75,366.0 1107.00,367.0 1107.25,366.4 1107.50,367.9 1107.75,367.2 1108.00,367.3 1108.25,367.5 1108.50,368.4 1108.75,367.6 1109.00,368.4 1109.25,368.1 1109.50,366.9 1109.75,368.0 1110.00,366.8 1110.25,366.8 1110.50,366.3 1110.75,367.7 1111.00,366.4 1111.25,367.0 1111.50,366.7 1111.75,367.2 1112.00,367.2 1112.25,367.4 1112.50,368.2 1112.75,366.6 1113.00,365.8 1113.25,366.4 1113.50,368.2 1113.75,367.8 1114.00,366.8 1114.25,366.1 1114.50,367.0 1114.75,368.2 1115.00,366.6 1115.25,367.8 1115.50,365.9 1115.75,368.0 1116.00,367.8 1116.25,366.2 1116.50,366.5 1116.75,367.8 1117.00,367.9 1117.25,365.9 1117.50,367.3 1117.75,366.1 1118.00,367.4 1118.25,368.3 1118.50,367.7 1118.75,366.4 1119.00,367.7 1119.25,368.3 1119.50,365.9 1119.75,365.8 1120.00,366.1 1120.25,367.3 1120.50,367.8 1120.75,367.8 1121.00,368.0 1121.25,368.1 1121.50,367.7 1121.75,367.3 1122.00,367.5 1122.25,367.4 1122.50,366.8 1122.75,366.9 1123.00,366.5 1123.25,366.0 1123.50,366.6 1123.75,366.4 1124.00,367.0 1124.25,367.9 1124.50,366.2 1124.75,368.1 1125.00,367.9 1125.25,368.0 1125.50,367.3 1125.75,366.6 1126.00,367.2 1126.25,366.5 1126.50,366.9 1126.75,365.9 1127.00,365.8 1127.25,367.1 1127.50,368.1 1127.75,368.0 1128.00,367.8 1128.25,368.0 1128.50,366.7 1128.75,368.1 1129.00,366.2 1129.25,367.7 1129.50,366.5 1129.75,367.0 1130.00,368.4 1130.25,368.4 1130.50,367.4 1130.75,368.4 1131.00,366.7 1131.25,368.1 1131.50,366.5 1131.75,366.3 1132.00,365.8 1132.25,366.6 1132.50,366.8 1132.75,366.4 1133.00,366.2 1133.25,366.0 1133.50,367.4 1133.75,365.8 1134.00,366.2 1134.25,366.6 1134.50,366.4 1134.75,367.7 1135.00,366.0 1135.25,366.9 1135.50,368.4 1135.75,367.7 1136.00,367.1 1136.25,365.9 1136.50,367.4 1136.75,367.5 1137.00,366.0 1137.25,367.2 1137.50,368.4 1137.75,367.8 1138.00,367.9 1138.25,366.9 1138.50,367.7 1138.75,367.8 1139.00,366.2 1139.25,368.3 1139.50,368.4 1139.75,367.6 1140.00,367.0 1140.25,367.5 1140.50,367.2 1140.75,367.6 1141.00,366.3 1141.25,368.1 1141.50,367.0 1141.75,365.9 1142.00,366.5 1142.25,366.8 1142.50,368.2 1142.75,367.5 1143.00,367.6 1143.25,366.3 1143.50,368.2 1143.75,368.1 1144.00,366.3 1144.25,368.4 1144.50,366.8 1144.75,367.0 1145.00,366.9 1145.25,366.0 1145.50,368.1 1145.75,368.3 1146.00,366.5 1146.25,366.2 1146.50,367.8 1146.75,367.6 1147.00,367.2 1147.25,368.3 1147.50,367.5 1147.75,368.2 1148.00,366.7 1148.25,366.0 1148.50,367.8 1148.75,366.3 1149.00,368.2 1149.25,367.4 1149.50,367.0 1149.75,368.5 1150.00,367.8 1150.25,368.4 1150.50,367.4 1150.75,367.7 1151.00,367.8 1151.25,366.9 1151.50,367.4 1151.75,367.3 1152.00,368.4 1152.25,367.4 1152.50,367.7 1152.75,368.4 1153.00,366.7 1153.25,366.4 1153.50,366.5 1153.75,368.3 1154.00,368.2 1154.25,367.5 1154.50,367.9 1154.75,366.7 1155.00,368.0 1155.25,366.6 1155.50,366.9 1155.75,368.4 1156.00,367.8 1156.25,367.0 1156.50,368.0 1156.75,366.6 1157.00,368.4 1157.25,368.4 1157.50,366.0 1157.75,367.7 1158.00,368.2 1158.25,368.1 1158.50,366.3 1158.75,368.4 1159.00,367.4 1159.25,367.9 1159.50,366.8 1159.75,368.1 1160.00,367.1 1160.25,367.2 1160.50,368.1 1160.75,366.6 1161.00,366.1 1161.25,367.7 1161.50,367.5 1161.75,368.3 1162.00,367.7 1162.25,366.1 1162.50,366.4 1162.75,368.1 1163.00,367.2 1163.25,366.9 1163.50,366.9 1163.75,366.7 1164.00,367.8 1164.25,367.0 1164.50,367.0 1164.75,367.5 1165.00,367.9 1165.25,366.3 1165.50,366.0 1165.75,366.3 1166.00,366.4 1166.25,367.1 1166.50,366.2 1166.75,368.2 1167.00,367.4 1167.25,366.8 1167.50,366.6 1167.75,366.5 1168.00,368.4 1168.25,367.4 1168.50,367.0 1168.75,367.2 1169.00,368.3 1169.25,367.6 1169.50,367.9 1169.75,368.3 1170.00,367.8 1170.25,367.3 1170.50,366.2 1170.75,367.7 1171.00,367.2 1171.25,366.8 1171.50,368.1 1171.75,367.2 1172.00,368.7 1172.25,366.4 1172.50,367.0 1172.75,368.3 1173.00,367.6 1173.25,366.0 1173.50,366.4 1173.75,368.5 1174.00,366.9 1174.25,368.4 1174.50,368.4 1174.75,367.0 1175.00,366.4 1175.25,367.4 1175.50,368.7 1175.75,367.5 1176.00,367.9 1176.25,367.4 1176.50,368.4 1176.75,368.3 1177.00,368.1 1177.25,366.3 1177.50,366.1 1177.75,366.5 1178.00,367.6 1178.25,367.3 1178.50,368.7 1178.75,366.7 1179.00,367.6 1179.25,368.2 1179.50,368.4 1179.75,366.6 1180.00,367.8 1180.25,366.6 1180.50,367.5 1180.75,367.9 1181.00,367.5 1181.25,367.2 1181.50,367.7 1181.75,368.6 1182.00,367.0 1182.25,366.5 1182.50,368.0 1182.75,368.4 1183.00,366.1 1183.25,368.6 1183.50,367.0 1183.75,367.4 1184.00,367.7 1184.25,366.6 1184.50,367.8 1184.75,366.8 1185.00,368.7 1185.25,368.6 1185.50,366.4 1185.75,368.0 1186.00,366.2 1186.25,367.7 1186.50,367.2 1186.75,368.4 1187.00,368.1 1187.25,367.5 1187.50,366.6 1187.75,366.5 1188.00,368.2 1188.25,367.3 1188.50,368.1 1188.75,367.4 1189.00,368.0 1189.25,368.2 1189.50,366.4 1189.75,366.9 1190.00,367.4 1190.25,366.7 1190.50,367.4 1190.75,368.7 1191.00,367.5 1191.25,368.5 1191.50,366.3 1191.75,368.1 1192.00,367.9 1192.25,368.3 1192.50,368.5 1192.75,366.6 1193.00,367.1 1193.25,366.4 1193.50,367.3 1193.75,366.8 1194.00,367.4 1194.25,366.4 1194.50,367.3 1194.75,366.3 1195.00,367.2 1195.25,367.4 1195.50,367.6 1195.75,367.6 1196.00,367.0 1196.25,368.6 1196.50,366.4 1196.75,367.9 1197.00,366.3 1197.25,368.5 1197.50,366.7 1197.75,368.2 1198.00,368.6 1198.25,368.4 1198.50,368.8 1198.75,366.2 1199.00,367.9 1199.25,366.6 1199.50,366.9 1199.75,367.4 1200.00,368.4 1200.25,367.9 1200.50,368.3 1200.75,366.8 1201.00,367.0 1201.25,368.4 1201.50,367.9 1201.75,368.4 1202.00,367.2 1202.25,367.7 1202.50,367.5 1202.75,368.2 1203.00,367.9 1203.25,366.5 1203.50,368.4 1203.75,367.9 1204.00,368.5 1204.25,368.7 1204.50,368.7 1204.75,367.4 1205.00,366.7 1205.25,368.9 1205.50,368.0 1205.75,367.5 1206.00,366.6 1206.25,368.0 1206.50,367.8 1206.75,368.0 1207.00,367.7 1207.25,366.7 1207.50,368.0 1207.75,366.4 1208.00,368.5 1208.25,368.4 1208.50,366.7 1208.75,368.5 1209.00,368.3 1209.25,367.3 1209.50,368.4 1209.75,366.4 1210.00,366.5 1210.25,368.5 1210.50,366.8 1210.75,367.9 1211.00,366.3 1211.25,367.6 1211.50,367.5 1211.75,366.4 1212.00,368.6 1212.25,366.4 1212.50,368.9 1212.75,368.0 1213.00,368.7 1213.25,367.2 1213.50,366.4 1213.75,367.7 1214.00,367.7 1214.25,367.8 1214.50,367.4 1214.75,367.4 1215.00,367.6 1215.25,367.0 1215.50,368.1 1215.75,368.4 1216.00,367.3 1216.25,368.6 1216.50,367.5 1216.75,368.6 1217.00,367.5 1217.25,367.2 1217.50,368.0 1217.75,367.3 1218.00,366.4 1218.25,369.0 1218.50,368.7 1218.75,367.4 1219.00,366.3 1219.25,368.5 1219.50,368.2 1219.75,367.1 1220.00,368.0 1220.25,367.4 1220.50,366.5 1220.75,368.6 1221.00,367.5 1221.25,368.8 1221.50,366.9 1221.75,368.1 1222.00,366.5 1222.25,367.0 1222.50,367.8 1222.75,366.6 1223.00,368.4 1223.25,366.4 1223.50,367.0 1223.75,368.9 1224.00,367.5 1224.25,367.5 1224.50,368.4 1224.75,366.8 1225.00,368.5 1225.25,368.8 1225.50,367.8 1225.75,367.0 1226.00,366.7 1226.25,368.7 1226.50,368.9 1226.75,367.1 1227.00,366.3 1227.25,367.2 1227.50,367.6 1227.75,366.3 1228.00,367.3 1228.25,368.6 1228.50,367.7 1228.75,367.5 1229.00,368.4 1229.25,368.9 1229.50,366.5 1229.75,366.8 1230.00,368.8 1230.25,367.8 1230.50,367.9 1230.75,366.8 1231.00,367.8 1231.25,368.4 1231.50,368.6 1231.75,367.9 1232.00,367.1 1232.25,366.6 1232.50,367.6 1232.75,366.4 1233.00,369.0 1233.25,368.9 1233.50,368.7 1233.75,367.1 1234.00,366.6 1234.25,368.4 1234.50,367.8 1234.75,366.9 1235.00,369.0 1235.25,366.9 1235.50,366.9 1235.75,368.6 1236.00,367.1 1236.25,367.3 1236.50,366.7 1236.75,368.2 1237.00,368.4 1237.25,367.4 1237.50,368.8 1237.75,366.9 1238.00,366.6 1238.25,368.5 1238.50,366.7 1238.75,368.5 1239.00,368.8 1239.25,368.6 1239.50,368.8 1239.75,367.0 1240.00,368.9 1240.25,367.1 1240.50,368.1 1240.75,367.9 1241.00,366.7 1241.25,368.4 1241.50,367.9 1241.75,368.7 1242.00,367.0 1242.25,367.9 1242.50,366.9 1242.75,367.2 1243.00,367.8 1243.25,366.8 1243.50,366.8 1243.75,367.1 1244.00,367.1 1244.25,369.0 1244.50,368.8 1244.75,368.9 1245.00,368.3 1245.25,368.8 1245.50,367.5 1245.75,369.1 1246.00,369.0 1246.25,368.5 1246.50,367.0 1246.75,366.7 1247.00,367.1 1247.25,368.6 1247.50,366.5 1247.75,367.5 1248.00,367.7 1248.25,368.3 1248.50,368.5 1248.75,368.0 1249.00,368.1 1249.25,368.9 1249.50,368.4 1249.75,366.7 1250.00,367.0 1250.25,368.4 1250.50,368.7 1250.75,367.6 1251.00,368.6 1251.25,368.7 1251.50,368.9 1251.75,369.0 1252.00,368.3 1252.25,367.6 1252.50,369.0 1252.75,367.7 1253.00,368.0 1253.25,367.1 1253.50,368.3 1253.75,367.1 1254.00,366.6 1254.25,367.9 1254.50,368.8 1254.75,367.8 1255.00,368.7 1255.25,367.1 1255.50,367.6 1255.75,368.7 1256.00,368.4 1256.25,366.6 1256.50,367.0 1256.75,367.7 1257.00,368.5 1257.25,367.9 1257.50,367.6 1257.75,366.9 1258.00,368.2 1258.25,366.9 1258.50,366.6 1258.75,368.6 1259.00,368.6 1259.25,367.2 1259.50,368.8 1259.75,367.3 1260.00,368.0 1260.25,366.6 1260.50,367.7 1260.75,367.3 1261.00,368.0 1261.25,366.7 1261.50,368.0 1261.75,368.5 1262.00,368.8 1262.25,368.0 1262.50,366.8 1262.75,367.9 1263.00,367.0 1263.25,368.3 1263.50,368.8 1263.75,367.4 1264.00,367.5 1264.25,369.1 1264.50,368.2 1264.75,368.4 1265.00,366.6 1265.25,368.8 1265.50,368.2 1265.75,367.8 1266.00,368.2 1266.25,368.4 1266.50,368.1 1266.75,366.9 1267.00,367.4 1267.25,367.5 1267.50,367.9 1267.75,368.4 1268.00,367.5 1268.25,367.6 1268.50,367.0 1268.75,368.1 1269.00,367.1 1269.25,368.4 1269.50,369.0 1269.75,366.9 1270.00,369.0 1270.25,366.7 1270.50,367.5 1270.75,366.9 1271.00,368.1 1271.25,367.0 1271.50,367.2 1271.75,368.2 1272.00,366.8 1272.25,368.1 1272.50,368.5 1272.75,366.7 1273.00,368.2 1273.25,368.6 1273.50,367.1 1273.75,368.0 1274.00,368.3 1274.25,367.1 1274.50,367.9 1274.75,368.2 1275.00,367.8 1275.25,366.6 1275.50,368.6 1275.75,368.2 1276.00,368.1 1276.25,368.8 1276.50,368.8 1276.75,369.2 1277.00,367.2 1277.25,366.7 1277.50,369.0 1277.75,366.6 1278.00,368.6 1278.25,366.6 1278.50,369.0 1278.75,366.6 1279.00,366.7 1279.25,367.5 1279.50,367.3 1279.75,369.1 1280.00,368.6 1280.25,367.1 1280.50,369.1 1280.75,366.7 1281.00,367.9 1281.25,366.7 1281.50,367.4 1281.75,368.1 1282.00,367.7 1282.25,369.0 1282.50,369.0 1282.75,368.6 1283.00,368.4 1283.25,368.9 1283.50,367.7 1283.75,367.6 1284.00,366.6 1284.25,368.6 1284.50,367.5 1284.75,368.9 1285.00,367.9 1285.25,369.2 1285.50,368.3 1285.75,368.4 1286.00,368.9 1286.25,367.3 1286.50,368.7 1286.75,368.8 1287.00,367.8 1287.25,368.8 1287.50,366.9 1287.75,368.0 1288.00,367.6 1288.25,366.6 1288.50,368.3 1288.75,368.0 1289.00,368.5 1289.25,367.3 1289.50,368.5 1289.75,367.0 1290.00,367.7 1290.25,368.6 1290.50,367.2 1290.75,368.1 1291.00,368.6 1291.25,368.0 1291.50,368.0 1291.75,368.5 1292.00,366.9 1292.25,368.9 1292.50,368.5 1292.75,367.3 1293.00,367.7 1293.25,367.0 1293.50,368.9 1293.75,367.7 1294.00,366.7 1294.25,367.7 1294.50,367.4 1294.75,368.0 1295.00,368.9 1295.25,369.1 1295.50,367.8 1295.75,368.8 1296.00,369.0 1296.25,368.0 1296.50,368.9 1296.75,367.2 1297.00,367.6 1297.25,369.2 1297.50,367.4 1297.75,368.1 1298.00,367.7 1298.25,369.1 1298.50,366.7 1298.75,366.7 1299.00,367.7 1299.25,369.3 1299.50,368.2 1299.75,369.3 1300.00,368.1 1300.25,366.7 1300.50,367.7 1300.75,369.2 1301.00,368.4 1301.25,368.7 1301.50,368.6 1301.75,367.9 1302.00,369.0 1302.25,367.3 1302.50,366.9 1302.75,368.4 1303.00,367.0 1303.25,366.7 1303.50,367.3 1303.75,368.3 1304.00,367.3 1304.25,366.8 1304.50,366.7 1304.75,368.8 1305.00,367.4 1305.25,368.0 1305.50,369.1 1305.75,367.9 1306.00,366.9 1306.25,368.0 1306.50,368.9 1306.75,368.9 1307.00,368.3 1307.25,369.0 1307.50,368.1 1307.75,368.0 1308.00,367.8 1308.25,368.6 1308.50,368.3 1308.75,369.3 1309.00,368.0 1309.25,366.9 1309.50,366.9 1309.75,367.5 1310.00,368.9 1310.25,368.4 1310.50,369.1 1310.75,369.0 1311.00,369.1 1311.25,369.4 1311.50,368.8 1311.75,366.8 1312.00,368.9 1312.25,367.7 1312.50,366.8 1312.75,367.9 1313.00,368.6 1313.25,367.1 1313.50,368.5 1313.75,367.5 1314.00,369.2 1314.25,367.3 1314.50,366.8 1314.75,369.4 1315.00,369.3 1315.25,368.6 1315.50,369.0 1315.75,367.5 1316.00,369.2 1316.25,367.2 1316.50,369.2 1316.75,367.6 1317.00,367.3 1317.25,367.8 1317.50,367.8 1317.75,367.8 1318.00,367.2 1318.25,368.5 1318.50,369.3 1318.75,368.8 1319.00,369.0 1319.25,367.1 1319.50,369.2 1319.75,367.2 1320.00,367.9 1320.25,367.2 1320.50,367.9 1320.75,367.4 1321.00,368.1 1321.25,367.6 1321.50,367.8 1321.75,368.2 1322.00,368.6 1322.25,367.8 1322.50,366.8 1322.75,369.4 1323.00,368.3 1323.25,367.1 1323.50,367.1 1323.75,368.9 1324.00,367.3 1324.25,368.2 1324.50,368.0 1324.75,367.0 1325.00,369.1 1325.25,369.2 1325.50,368.1 1325.75,368.3 1326.00,367.1 1326.25,367.7 1326.50,368.0 1326.75,366.9 1327.00,367.8 1327.25,369.4 1327.50,367.2 1327.75,368.7 1328.00,367.0 1328.25,367.0 1328.50,367.7 1328.75,368.9 1329.00,367.0 1329.25,369.4 1329.50,368.9 1329.75,367.2 1330.00,367.7 1330.25,367.9 1330.50,367.3 1330.75,368.9 1331.00,367.8 1331.25,368.6 1331.50,366.9 1331.75,367.8 1332.00,367.5 1332.25,368.0 1332.50,367.5 1332.75,369.5 1333.00,369.2 1333.25,369.5 1333.50,367.4 1333.75,368.9 1334.00,369.1 1334.25,367.0 1334.50,369.1 1334.75,366.9 1335.00,368.9 1335.25,368.0 1335.50,367.4 1335.75,369.5 1336.00,366.9 1336.25,367.6 1336.50,369.2 1336.75,368.8 1337.00,368.9 1337.25,369.0 1337.50,367.4 1337.75,368.0 1338.00,368.9 1338.25,367.9 1338.50,367.9 1338.75,367.4 1339.00,367.0 1339.25,368.9 1339.50,368.3 1339.75,367.4 1340.00,367.9 1340.25,368.0 1340.50,368.2 1340.75,368.3 1341.00,369.4 1341.25,367.5 1341.50,368.5 1341.75,367.9 1342.00,369.5 1342.25,367.9 1342.50,368.9 1342.75,368.7 1343.00,368.2 1343.25,367.3 1343.50,367.0 1343.75,369.2 1344.00,367.5 1344.25,366.9 1344.50,367.9 1344.75,369.2 1345.00,366.9 1345.25,368.5 1345.50,368.2 1345.75,368.8 1346.00,369.2 1346.25,368.3 1346.50,369.0 1346.75,367.6 1347.00,367.8 1347.25,367.7 1347.50,368.1 1347.75,367.5 1348.00,369.4 1348.25,367.1 1348.50,369.3 1348.75,367.5 1349.00,369.5 1349.25,368.1 1349.50,367.9 1349.75,367.1 1350.00,368.3 1350.25,369.5 1350.50,369.4 1350.75,367.6 1351.00,368.3 1351.25,369.5 1351.50,369.2 1351.75,368.8 1352.00,367.7 1352.25,369.1 1352.50,367.3 1352.75,367.8 1353.00,367.1 1353.25,368.4 1353.50,368.2 1353.75,367.7 1354.00,368.5 1354.25,367.4 1354.50,367.5 1354.75,368.5 1355.00,367.3 1355.25,368.1 1355.50,367.6 1355.75,368.2 1356.00,368.2 1356.25,368.5 1356.50,367.3 1356.75,368.5 1357.00,367.7 1357.25,368.5 1357.50,367.0 1357.75,367.5 1358.00,367.6 1358.25,368.3 1358.50,368.0 1358.75,368.8 1359.00,369.2 1359.25,368.1 1359.50,367.6 1359.75,369.2 1360.00,367.8 1360.25,368.0 1360.50,368.4 1360.75,368.8 1361.00,368.2 1361.25,367.7 1361.50,367.1 1361.75,368.1 1362.00,367.7 1362.25,367.5 1362.50,367.6 1362.75,368.5 1363.00,367.7 1363.25,368.7 1363.50,368.4 1363.75,368.2 1364.00,368.8 1364.25,369.2 1364.50,368.8 1364.75,368.6 1365.00,367.0 1365.25,368.6 1365.50,368.5 1365.75,368.4 1366.00,368.3 1366.25,368.8 1366.50,367.2 1366.75,367.8 1367.00,369.6 1367.25,369.6 1367.50,369.4 1367.75,369.5 1368.00,367.2 1368.25,368.1 1368.50,368.5 1368.75,369.2 1369.00,369.1 1369.25,367.1 1369.50,369.6 1369.75,367.7 1370.00,368.3 1370.25,367.4 1370.50,368.5 1370.75,369.1 1371.00,368.5 1371.25,367.6 1371.50,367.9 1371.75,367.9 1372.00,368.0 1372.25,367.6 1372.50,369.0 1372.75,368.2 1373.00,367.5 1373.25,368.4 1373.50,369.5 1373.75,368.1 1374.00,367.2 1374.25,369.2 1374.50,369.6 1374.75,368.5 1375.00,367.2 1375.25,367.4 1375.50,367.5 1375.75,368.7 1376.00,367.3 1376.25,369.4 1376.50,367.2 1376.75,369.6 1377.00,367.1 1377.25,368.4 1377.50,367.3 1377.75,368.3 1378.00,369.0 1378.25,368.0 1378.50,368.6 1378.75,367.9 1379.00,367.7 1379.25,369.4 1379.50,369.4 1379.75,368.8 1380.00,367.4 1380.25,367.2 1380.50,368.6 1380.75,368.7 1381.00,367.1 1381.25,367.9 1381.50,367.6 1381.75,368.7 1382.00,369.0 1382.25,368.7 1382.50,367.2 1382.75,368.5 1383.00,368.6 1383.25,367.4 1383.50,368.4 1383.75,367.6 1384.00,368.2 1384.25,369.3 1384.50,367.3 1384.75,368.8 1385.00,368.9 1385.25,367.6 1385.50,369.0 1385.75,369.1 1386.00,367.3 1386.25,369.3 1386.50,368.6 1386.75,367.5 1387.00,367.1 1387.25,367.1 1387.50,367.8 1387.75,368.5 1388.00,368.6 1388.25,369.5 1388.50,369.8 1388.75,369.3 1389.00,369.4 1389.25,369.8 1389.50,367.9 1389.75,368.5 1390.00,369.0 1390.25,367.2 1390.50,367.3 1390.75,369.1 1391.00,367.1 1391.25,368.9 1391.50,368.6 1391.75,368.2 1392.00,369.0 1392.25,369.7 1392.50,369.6 1392.75,367.9 1393.00,368.8 1393.25,367.3 1393.50,369.1 1393.75,367.2 1394.00,369.7 1394.25,367.5 1394.50,369.4 1394.75,368.0 1395.00,369.0 1395.25,368.7 1395.50,369.3 1395.75,369.6 1396.00,368.7 1396.25,369.1 1396.50,368.7 1396.75,369.0 1397.00,368.3 1397.25,368.4 1397.50,369.5 1397.75,367.9 1398.00,369.7 1398.25,368.0 1398.50,369.6 1398.75,367.9 1399.00,367.2 1399.25,368.5 1399.50,368.8 1399.75,369.5 1400.00,367.7 1400.25,369.4 1400.50,369.7 1400.75,367.8 1401.00,369.6 1401.25,369.8 1401.50,368.8 1401.75,369.5 1402.00,367.8 1402.25,368.0 1402.50,367.9 1402.75,367.3 1403.00,369.4 1403.25,368.6 1403.50,367.9 1403.75,367.3 1404.00,368.3 1404.25,369.2 1404.50,369.1 1404.75,367.7 1405.00,368.1 1405.25,368.7 1405.50,369.1 1405.75,368.0 1406.00,369.1 1406.25,367.8 1406.50,368.5 1406.75,369.4 1407.00,367.8 1407.25,368.6 1407.50,367.2 1407.75,368.8 1408.00,367.9 1408.25,369.7 1408.50,367.2 1408.75,367.3 1409.00,368.3 1409.25,368.6 1409.50,369.0 1409.75,368.5 1410.00,368.3 1410.25,368.6 1410.50,367.5 1410.75,368.5 1411.00,367.8 1411.25,367.4 1411.50,369.5 1411.75,367.2 1412.00,367.3 1412.25,369.4 1412.50,367.6 1412.75,369.1 1413.00,368.2 1413.25,367.8 1413.50,369.5 1413.75,368.2 1414.00,369.2 1414.25,369.3 1414.50,367.4 1414.75,367.9 1415.00,367.7 1415.25,369.3 1415.50,367.3 1415.75,369.8 1416.00,368.3 1416.25,369.6 1416.50,368.9 1416.75,369.3 1417.00,369.4 1417.25,367.5 1417.50,369.3 1417.75,367.8 1418.00,367.5 1418.25,368.3 1418.50,369.1 1418.75,368.4 1419.00,368.3 1419.25,369.0 1419.50,367.3 1419.75,367.9 1420.00,369.9 1420.25,368.7 1420.50,368.8 1420.75,367.6 1421.00,367.3 1421.25,368.5 1421.50,369.2 1421.75,367.4 1422.00,367.4 1422.25,367.9 1422.50,369.8 1422.75,368.3 1423.00,369.8 1423.25,367.5 1423.50,367.7 1423.75,369.1 1424.00,367.9" fill="none" stroke="#1455a0" stroke-width="1.3" stroke-linejoin="round"/>
 <path d="M143.00,325.1 143.25,325.7 143.50,325.5 143.75,326.0 144.00,325.2 144.25,327.3 144.50,325.6 144.75,328.7 145.00,325.5 145.25,327.0 145.50,329.5 145.75,329.6 146.00,332.2 146.25,330.9 146.50,328.2 146.75,330.1 147.00,327.9 147.25,326.7 147.50,326.6 147.75,329.5 148.00,329.2 148.25,328.9 148.50,326.2 148.75,328.4 149.00,328.5 149.25,325.2 149.50,328.0 149.75,328.3 150.00,325.7 150.25,328.2 150.50,327.0 150.75,326.2 151.00,324.8 151.25,325.4 151.50,324.8 151.75,327.9 152.00,327.0 152.25,327.2 152.50,325.7 152.75,324.3 153.00,326.0 153.25,325.5 153.50,323.8 153.75,327.0 154.00,324.8 154.25,325.5 154.50,327.0 154.75,324.4 155.00,325.8 155.25,325.5 155.50,324.6 155.75,326.6 156.00,324.1 156.25,325.1 156.50,326.6 156.75,324.0 157.00,325.7 157.25,325.8 157.50,324.8 157.75,325.7 158.00,323.0 158.25,325.8 158.50,323.5 158.75,324.5 159.00,323.7 159.25,322.3 159.50,322.7 159.75,324.8 160.00,324.1 160.25,325.3 160.50,323.4 160.75,323.1 161.00,325.6 161.25,324.5 161.50,323.2 161.75,322.0 162.00,324.9 162.25,323.9 162.50,321.7 162.75,322.5 163.00,324.3 163.25,323.1 163.50,321.8 163.75,322.9 164.00,321.9 164.25,323.6 164.50,322.9 164.75,321.2 165.00,323.9 165.25,322.2 165.50,323.4 165.75,323.7 166.00,322.3 166.25,322.1 166.50,322.8 166.75,321.7 167.00,320.6 167.25,323.7 167.50,322.3 167.75,320.6 168.00,323.3 168.25,322.6 168.50,323.5 168.75,321.9 169.00,321.8 169.25,321.4 169.50,320.5 169.75,320.2 170.00,322.8 170.25,322.7 170.50,320.4 170.75,321.9 171.00,320.8 171.25,321.4 171.50,319.7 171.75,323.1 172.00,322.8 172.25,325.1 172.50,322.9 172.75,323.1 173.00,325.7 173.25,325.4 173.50,324.5 173.75,325.5 174.00,326.6 174.25,327.4 174.50,324.9 174.75,326.2 175.00,324.2 175.25,324.6 175.50,325.1 175.75,325.0 176.00,325.7 176.25,330.5 176.50,328.9 176.75,329.1 177.00,328.3 177.25,326.4 177.50,326.1 177.75,327.8 178.00,324.8 178.25,325.9 178.50,327.6 178.75,324.2 179.00,325.7 179.25,325.8 179.50,326.2 179.75,324.4 180.00,326.9 180.25,323.6 180.50,323.3 180.75,325.0 181.00,323.2 181.25,323.6 181.50,324.9 181.75,326.1 182.00,325.5 182.25,324.4 182.50,325.4 182.75,323.9 183.00,324.1 183.25,325.4 183.50,322.8 183.75,324.4 184.00,325.7 184.25,323.5 184.50,324.6 184.75,325.3 185.00,324.9 185.25,324.3 185.50,323.5 185.75,324.2 186.00,325.2 186.25,324.3 186.50,322.9 186.75,322.7 187.00,322.5 187.25,323.0 187.50,323.5 187.75,323.6 188.00,323.7 188.25,323.5 188.50,322.9 188.75,322.0 189.00,322.8 189.25,322.3 189.50,321.7 189.75,321.2 190.00,321.7 190.25,321.6 190.50,323.2 190.75,322.4 191.00,322.8 191.25,321.2 191.50,321.8 191.75,322.6 192.00,320.4 192.25,322.5 192.50,322.9 192.75,323.3 193.00,320.5 193.25,323.0 193.50,323.0 193.75,320.9 194.00,321.9 194.25,322.4 194.50,322.8 194.75,322.1 195.00,319.7 195.25,321.7 195.50,321.1 195.75,322.4 196.00,319.5 196.25,320.3 196.50,320.1 196.75,322.8 197.00,320.9 197.25,321.5 197.50,322.2 197.75,319.8 198.00,321.7 198.25,320.2 198.50,319.1 198.75,321.3 199.00,321.0 199.25,321.9 199.50,320.6 199.75,320.0 200.00,321.3 200.25,321.2 200.50,322.1 200.75,320.8 201.00,321.5 201.25,322.0 201.50,319.8 201.75,320.9 202.00,319.5 202.25,319.8 202.50,319.6 202.75,319.0 203.00,317.4 203.25,321.3 203.50,321.2 203.75,322.0 204.00,321.5 204.25,325.1 204.50,322.9 204.75,324.3 205.00,322.1 205.25,323.9 205.50,325.0 205.75,323.1 206.00,323.2 206.25,325.5 206.50,325.9 206.75,326.6 207.00,329.6 207.25,327.4 207.50,327.0 207.75,327.4 208.00,326.2 208.25,326.5 208.50,325.2 208.75,323.6 209.00,323.0 209.25,322.6 209.50,322.4 209.75,322.3 210.00,324.4 210.25,323.8 210.50,322.8 210.75,323.8 211.00,321.5 211.25,322.0 211.50,321.6 211.75,322.9 212.00,323.7 212.25,321.7 212.50,324.6 212.75,322.8 213.00,323.9 213.25,323.8 213.50,323.9 213.75,322.1 214.00,324.0 214.25,321.1 214.50,320.8 214.75,323.1 215.00,323.3 215.25,321.6 215.50,322.9 215.75,321.6 216.00,322.0 216.25,322.9 216.50,322.8 216.75,321.7 217.00,323.6 217.25,320.2 217.50,321.2 217.75,321.7 218.00,321.6 218.25,322.9 218.50,320.5 218.75,321.6 219.00,323.2 219.25,320.0 219.50,321.4 219.75,320.2 220.00,321.1 220.25,321.9 220.50,321.1 220.75,319.9 221.00,320.3 221.25,321.4 221.50,322.7 221.75,322.3 222.00,321.9 222.25,321.6 222.50,318.9 222.75,321.7 223.00,319.0 223.25,320.2 223.50,322.3 223.75,320.2 224.00,319.2 224.25,321.0 224.50,321.5 224.75,320.6 225.00,321.4 225.25,320.8 225.50,321.1 225.75,321.0 226.00,320.7 226.25,321.9 226.50,318.6 226.75,321.7 227.00,321.3 227.25,320.2 227.50,320.8 227.75,320.9 228.00,320.2 228.25,320.3 228.50,319.2 228.75,320.4 229.00,318.9 229.25,320.6 229.50,319.9 229.75,319.5 230.00,319.5 230.25,320.9 230.50,319.0 230.75,321.1 231.00,319.6 231.25,319.3 231.50,319.8 231.75,318.5 232.00,317.4 232.25,318.0 232.50,319.3 232.75,319.4 233.00,316.1 233.25,317.1 233.50,321.6 233.75,323.4 234.00,323.0 234.25,322.2 234.50,321.4 234.75,323.3 235.00,322.1 235.25,321.2 235.50,322.7 235.75,323.7 236.00,323.2 236.25,324.2 236.50,325.1 236.75,325.3 237.00,324.2 237.25,325.5 237.50,326.1 237.75,323.5 238.00,325.7 238.25,325.6 238.50,328.5 238.75,326.1 239.00,327.6 239.25,324.4 239.50,325.9 239.75,323.4 240.00,326.7 240.25,326.2 240.50,324.6 240.75,323.1 241.00,323.2 241.25,323.9 241.50,325.5 241.75,325.3 242.00,325.1 242.25,323.8 242.50,325.3 242.75,324.8 243.00,322.1 243.25,323.8 243.50,322.9 243.75,321.5 244.00,324.5 244.25,324.8 244.50,323.1 244.75,324.9 245.00,322.1 245.25,322.0 245.50,323.3 245.75,324.7 246.00,323.3 246.25,322.2 246.50,323.4 246.75,323.7 247.00,323.8 247.25,322.8 247.50,323.1 247.75,321.0 248.00,320.5 248.25,322.6 248.50,321.6 248.75,322.7 249.00,322.6 249.25,320.6 249.50,321.8 249.75,322.2 250.00,322.9 250.25,323.6 250.50,321.5 250.75,319.9 251.00,319.9 251.25,319.8 251.50,321.0 251.75,321.5 252.00,320.7 252.25,321.3 252.50,320.9 252.75,321.4 253.00,320.3 253.25,322.6 253.50,321.8 253.75,322.4 254.00,319.6 254.25,320.6 254.50,320.4 254.75,321.7 255.00,320.2 255.25,321.0 255.50,320.4 255.75,320.0 256.00,321.1 256.25,319.5 256.50,319.0 256.75,320.3 257.00,319.2 257.25,320.9 257.50,322.1 257.75,318.7 258.00,321.3 258.25,321.2 258.50,318.9 258.75,318.7 259.00,319.3 259.25,318.4 259.50,320.6 259.75,319.6 260.00,320.4 260.25,318.1 260.50,319.3 260.75,320.3 261.00,321.4 261.25,318.8 261.50,318.7 261.75,318.3 262.00,320.2 262.25,318.5 262.50,319.3 262.75,320.3 263.00,318.3 263.25,319.2 263.50,322.6 263.75,320.3 264.00,322.2 264.25,323.2 264.50,321.9 264.75,324.6 265.00,324.9 265.25,323.0 265.50,323.9 265.75,325.2 266.00,323.9 266.25,322.3 266.50,322.6 266.75,323.4 267.00,324.8 267.25,325.0 267.50,323.6 267.75,324.9 268.00,326.8 268.25,325.5 268.50,325.7 268.75,324.1 269.00,324.3 269.25,326.8 269.50,330.3 269.75,330.8 270.00,328.7 270.25,327.0 270.50,327.9 270.75,326.3 271.00,325.9 271.25,327.9 271.50,327.8 271.75,323.9 272.00,325.8 272.25,325.7 272.50,327.0 272.75,325.1 273.00,323.5 273.25,325.4 273.50,323.6 273.75,325.4 274.00,324.1 274.25,323.9 274.50,325.3 274.75,324.6 275.00,325.1 275.25,325.2 275.50,323.6 275.75,323.1 276.00,323.9 276.25,324.4 276.50,325.7 276.75,323.4 277.00,325.4 277.25,325.5 277.50,323.8 277.75,323.6 278.00,324.3 278.25,322.4 278.50,325.5 278.75,324.6 279.00,324.4 279.25,324.8 279.50,323.3 279.75,321.8 280.00,321.7 280.25,323.5 280.50,323.2 280.75,321.5 281.00,324.7 281.25,324.5 281.50,324.7 281.75,322.7 282.00,321.8 282.25,324.0 282.50,323.9 282.75,324.3 283.00,322.4 283.25,321.8 283.50,320.9 283.75,322.5 284.00,322.0 284.25,320.6 284.50,320.6 284.75,321.6 285.00,321.1 285.25,320.4 285.50,322.7 285.75,321.7 286.00,322.2 286.25,323.3 286.50,322.5 286.75,321.8 287.00,322.8 287.25,321.1 287.50,320.7 287.75,319.8 288.00,319.7 288.25,320.5 288.50,322.3 288.75,320.2 289.00,323.0 289.25,319.9 289.50,319.7 289.75,322.4 290.00,320.3 290.25,322.6 290.50,322.3 290.75,322.2 291.00,320.7 291.25,322.5 291.50,319.9 291.75,321.5 292.00,319.0 292.25,320.9 292.50,322.5 292.75,321.9 293.00,322.4 293.25,320.0 293.50,321.3 293.75,321.0 294.00,321.0 294.25,320.2 294.50,320.7 294.75,320.0 295.00,320.7 295.25,322.3 295.50,324.8 295.75,325.2 296.00,323.6 296.25,323.9 296.50,324.1 296.75,323.7 297.00,324.3 297.25,322.7 297.50,326.2 297.75,323.5 298.00,323.4 298.25,324.9 298.50,325.3 298.75,325.4 299.00,326.7 299.25,324.0 299.50,324.9 299.75,325.1 300.00,328.6 300.25,328.0 300.50,327.7 300.75,325.8 301.00,326.3 301.25,328.1 301.50,325.3 301.75,324.4 302.00,326.4 302.25,326.7 302.50,325.4 302.75,324.7 303.00,323.6 303.25,324.6 303.50,325.8 303.75,323.5 304.00,325.8 304.25,325.4 304.50,324.6 304.75,325.0 305.00,326.0 305.25,324.3 305.50,325.4 305.75,325.5 306.00,324.1 306.25,324.9 306.50,324.3 306.75,322.4 307.00,324.9 307.25,324.2 307.50,323.3 307.75,323.0 308.00,325.6 308.25,325.2 308.50,323.3 308.75,324.3 309.00,323.9 309.25,322.4 309.50,323.7 309.75,321.5 310.00,323.9 310.25,325.3 310.50,324.2 310.75,325.8 311.00,325.9 311.25,326.3 311.50,328.1 311.75,325.3 312.00,329.0 312.25,328.2 312.50,327.8 312.75,326.0 313.00,326.5 313.25,327.5 313.50,327.0 313.75,327.3 314.00,326.4 314.25,329.1 314.50,329.5 314.75,328.8 315.00,327.5 315.25,328.0 315.50,329.0 315.75,327.7 316.00,330.3 316.25,330.7 316.50,328.9 316.75,330.9 317.00,331.0 317.25,331.5 317.50,331.9 317.75,332.7 318.00,332.2 318.25,333.3 318.50,332.8 318.75,332.6 319.00,332.2 319.25,331.2 319.50,330.7 319.75,332.3 320.00,333.6 320.25,331.9 320.50,334.6 320.75,334.7 321.00,334.8 321.25,333.2 321.50,335.8 321.75,334.1 322.00,335.1 322.25,333.4 322.50,336.8 322.75,336.0 323.00,336.0 323.25,335.3 323.50,336.7 323.75,337.8 324.00,337.0 324.25,336.4 324.50,335.1 324.75,336.1 325.00,337.2 325.25,337.2 325.50,336.2 325.75,339.3 326.00,336.5 326.25,339.0 326.50,337.3 326.75,338.3 327.00,336.9 327.25,337.3 327.50,336.9 327.75,339.6 328.00,337.2 328.25,341.1 328.50,338.9 328.75,337.9 329.00,339.4 329.25,340.1 329.50,341.2 329.75,340.9 330.00,342.3 330.25,341.7 330.50,343.5 330.75,341.7 331.00,343.9 331.25,343.3 331.50,341.7 331.75,340.1 332.00,340.1 332.25,339.2 332.50,340.8 332.75,341.2 333.00,338.1 333.25,338.8 333.50,340.7 333.75,340.6 334.00,339.4 334.25,339.9 334.50,338.3 334.75,340.0 335.00,338.4 335.25,336.0 335.50,337.7 335.75,341.8 336.00,341.1 336.25,339.6 336.50,342.8 336.75,342.3 337.00,340.7 337.25,341.1 337.50,341.0 337.75,341.4 338.00,342.5 338.25,339.9 338.50,341.3 338.75,342.0 339.00,340.8 339.25,342.5 339.50,340.7 339.75,343.1 340.00,341.0 340.25,341.2 340.50,341.9 340.75,342.1 341.00,344.2 341.25,346.2 341.50,344.9 341.75,343.6 342.00,343.3 342.25,343.5 342.50,343.9 342.75,339.8 343.00,342.4 343.25,339.5 343.50,341.6 343.75,342.0 344.00,340.1 344.25,341.6 344.50,338.5 344.75,340.2 345.00,338.6 345.25,341.6 345.50,341.3 345.75,336.1 346.00,339.1 346.25,340.9 346.50,341.2 346.75,341.2 347.00,344.3 347.25,342.2 347.50,344.3 347.75,342.0 348.00,343.5 348.25,341.5 348.50,342.8 348.75,343.3 349.00,343.2 349.25,344.2 349.50,342.6 349.75,343.8 350.00,344.2 350.25,343.3 350.50,341.9 350.75,342.8 351.00,343.2 351.25,344.3 351.50,345.3 351.75,344.0 352.00,345.2 352.25,344.3 352.50,345.4 352.75,342.9 353.00,345.3 353.25,343.6 353.50,346.2 353.75,343.5 354.00,345.8 354.25,344.2 354.50,344.6 354.75,347.0 355.00,344.4 355.25,346.3 355.50,344.1 355.75,345.3 356.00,348.6 356.25,349.4 356.50,348.5 356.75,346.6 357.00,347.6 357.25,344.6 357.50,347.1 357.75,346.4 358.00,345.7 358.25,345.2 358.50,344.2 358.75,345.9 359.00,346.1 359.25,345.9 359.50,344.5 359.75,345.2 360.00,345.1 360.25,341.6 360.50,342.3 360.75,342.5 361.00,342.9 361.25,341.8 361.50,341.6 361.75,343.3 362.00,343.9 362.25,345.6 362.50,347.3 362.75,344.1 363.00,344.7 363.25,346.1 363.50,345.9 363.75,347.2 364.00,345.6 364.25,343.9 364.50,347.1 364.75,347.1 365.00,344.2 365.25,347.2 365.50,344.5 365.75,346.7 366.00,345.3 366.25,346.4 366.50,346.5 366.75,347.1 367.00,348.3 367.25,348.4 367.50,345.1 367.75,347.6 368.00,348.4 368.25,347.6 368.50,349.1 368.75,346.5 369.00,348.7 369.25,346.7 369.50,348.2 369.75,348.7 370.00,347.5 370.25,349.3 370.50,347.0 370.75,348.5 371.00,349.6 371.25,348.5 371.50,349.5 371.75,353.6 372.00,352.0 372.25,350.0 372.50,351.4 372.75,349.5 373.00,349.4 373.25,350.1 373.50,347.8 373.75,347.4 374.00,347.4 374.25,346.3 374.50,346.7 374.75,348.5 375.00,345.0 375.25,344.7 375.50,345.3 375.75,344.6 376.00,344.5 376.25,344.9 376.50,345.5 376.75,346.9 377.00,343.8 377.25,347.3 377.50,347.1 377.75,345.9 378.00,346.7 378.25,348.2 378.50,348.7 378.75,350.0 379.00,347.3 379.25,349.1 379.50,346.6 379.75,346.4 380.00,348.3 380.25,348.2 380.50,347.6 380.75,349.6 381.00,349.4 381.25,346.8 381.50,347.3 381.75,347.7 382.00,350.4 382.25,348.8 382.50,349.0 382.75,348.2 383.00,350.7 383.25,348.0 383.50,349.4 383.75,350.8 384.00,350.4 384.25,349.9 384.50,349.0 384.75,349.4 385.00,350.4 385.25,349.3 385.50,348.5 385.75,349.0 386.00,348.5 386.25,350.0 386.50,350.1 386.75,349.4 387.00,350.5 387.25,349.1 387.50,351.4 387.75,351.7 388.00,352.1 388.25,352.1 388.50,351.1 388.75,352.2 389.00,351.6 389.25,352.6 389.50,352.0 389.75,352.0 390.00,353.0 390.25,351.6 390.50,351.5 390.75,351.6 391.00,351.6 391.25,352.3 391.50,351.1 391.75,351.2 392.00,352.4 392.25,353.9 392.50,352.7 392.75,357.9 393.00,357.5 393.25,354.2 393.50,355.9 393.75,353.9 394.00,353.1 394.25,351.9 394.50,352.1 394.75,352.9 395.00,352.3 395.25,350.6 395.50,352.6 395.75,349.4 396.00,352.2 396.25,351.2 396.50,350.4 396.75,348.9 397.00,349.4 397.25,351.3 397.50,349.6 397.75,351.3 398.00,347.1 398.25,350.4 398.50,350.2 398.75,353.2 399.00,352.9 399.25,352.6 399.50,352.0 399.75,350.5 400.00,353.4 400.25,352.0 400.50,352.5 400.75,350.5 401.00,352.6 401.25,351.3 401.50,354.1 401.75,351.1 402.00,353.7 402.25,353.7 402.50,351.2 402.75,353.1 403.00,354.3 403.25,351.4 403.50,351.3 403.75,353.8 404.00,351.8 404.25,353.7 404.50,351.2 404.75,351.4 405.00,354.8 405.25,353.2 405.50,355.0 405.75,353.7 406.00,352.1 406.25,355.2 406.50,354.0 406.75,355.4 407.00,354.1 407.25,353.5 407.50,355.3 407.75,353.8 408.00,356.0 408.25,353.1 408.50,355.4 408.75,354.9 409.00,355.8 409.25,353.6 409.50,356.7 409.75,354.5 410.00,355.9 410.25,354.2 410.50,354.6 410.75,353.6 411.00,354.9 411.25,357.3 411.50,357.2 411.75,354.8 412.00,354.2 412.25,354.1 412.50,355.6 412.75,356.6 413.00,355.7 413.25,357.4 413.50,356.7 413.75,356.4 414.00,355.9 414.25,357.7 414.50,355.3 414.75,356.6 415.00,358.2 415.25,358.1 415.50,358.3 415.75,358.5 416.00,356.8 416.25,358.2 416.50,358.6 416.75,355.8 417.00,356.6 417.25,358.0 417.50,359.0 417.75,357.9 418.00,358.4 418.25,357.7 418.50,357.1 418.75,357.9 419.00,357.7 419.25,357.8 419.50,356.7 419.75,358.5 420.00,357.2 420.25,360.0 420.50,360.4 420.75,357.1 421.00,358.5 421.25,359.6 421.50,360.6 421.75,359.0 422.00,360.0 422.25,360.2 422.50,361.2 422.75,360.3 423.00,359.8 423.25,360.6 423.50,358.6 423.75,358.0 424.00,360.8 424.25,359.3 424.50,361.0 424.75,360.5 425.00,360.0 425.25,359.4 425.50,362.2 425.75,361.3 426.00,360.5 426.25,361.8 426.50,361.4 426.75,360.2 427.00,359.2 427.25,361.3 427.50,359.3 427.75,361.0 428.00,360.7 428.25,362.3 428.50,362.2 428.75,360.3 429.00,359.5 429.25,362.6 429.50,363.0 429.75,361.4 430.00,360.6 430.25,361.0 430.50,362.0 430.75,360.5 431.00,360.8 431.25,361.9 431.50,362.8 431.75,360.9 432.00,361.1 432.25,363.6 432.50,361.6 432.75,362.9 433.00,364.3 433.25,363.8 433.50,362.9 433.75,362.9 434.00,361.6 434.25,362.7 434.50,361.1 434.75,364.1 435.00,364.0 435.25,361.4 435.50,364.9 435.75,364.8 436.00,364.2 436.25,364.2 436.50,362.9 436.75,365.0 437.00,363.0 437.25,363.2 437.50,362.2 437.75,361.7 438.00,362.9 438.25,365.2 438.50,363.3 438.75,364.1 439.00,363.1 439.25,364.6 439.50,363.5 439.75,362.8 440.00,364.3 440.25,364.8 440.50,364.0 440.75,366.1 441.00,362.6 441.25,362.6 441.50,366.2 441.75,365.2 442.00,363.3 442.25,364.5 442.50,364.6 442.75,364.0 443.00,366.4 443.25,364.0 443.50,364.0 443.75,366.1 444.00,364.5 444.25,366.7 444.50,366.1 444.75,363.7 445.00,365.2 445.25,364.9 445.50,366.7 445.75,364.4 446.00,364.9 446.25,363.9 446.50,366.4 446.75,366.7 447.00,366.0 447.25,366.1 447.50,367.2 447.75,364.9 448.00,364.3 448.25,364.2 448.50,365.5 448.75,366.5 449.00,364.9 449.25,366.0 449.50,367.3 449.75,365.6 450.00,366.3 450.25,364.4 450.50,366.0 450.75,367.8 451.00,366.3 451.25,367.9 451.50,367.1 451.75,367.9 452.00,365.5 452.25,365.6 452.50,366.6 452.75,366.5 453.00,368.4 453.25,365.4 453.50,366.6 453.75,365.1 454.00,366.6 454.25,369.9 454.50,370.0 454.75,369.1 455.00,367.9 455.25,365.1 455.50,366.2 455.75,365.4 456.00,364.9 456.25,365.0 456.50,366.0 456.75,363.6 457.00,364.6 457.25,364.8 457.50,363.6 457.75,361.7 458.00,363.5 458.25,362.8 458.50,362.1 458.75,362.4 459.00,363.4 459.25,361.3 459.50,361.9 459.75,360.6 460.00,360.4 460.25,360.2 460.50,360.4 460.75,362.1 461.00,360.0 461.25,358.9 461.50,361.9 461.75,361.6 462.00,360.5 462.25,357.8 462.50,358.6 462.75,357.2 463.00,357.7 463.25,357.1 463.50,358.0 463.75,357.3 464.00,358.2 464.25,356.9 464.50,353.6 464.75,356.2 465.00,358.9 465.25,360.7 465.50,361.6 465.75,359.7 466.00,359.9 466.25,361.1 466.50,360.5 466.75,360.8 467.00,359.0 467.25,358.9 467.50,358.2 467.75,360.3 468.00,361.2 468.25,359.2 468.50,358.6 468.75,360.4 469.00,358.4 469.25,358.0 469.50,364.4 469.75,360.2 470.00,362.5 470.25,358.7 470.50,359.6 470.75,360.4 471.00,359.5 471.25,359.8 471.50,357.7 471.75,359.1 472.00,356.2 472.25,355.5 472.50,358.7 472.75,356.6 473.00,357.1 473.25,356.4 473.50,357.5 473.75,357.4 474.00,356.8 474.25,356.4 474.50,354.5 474.75,356.1 475.00,354.3 475.25,356.2 475.50,353.0 475.75,353.8 476.00,354.8 476.25,354.0 476.50,352.2 476.75,352.5 477.00,353.9 477.25,352.3 477.50,352.6 477.75,351.8 478.00,352.0 478.25,353.1 478.50,351.4 478.75,351.6 479.00,353.3 479.25,351.2 479.50,351.5 479.75,350.1 480.00,349.9 480.25,349.8 480.50,352.5 480.75,352.9 481.00,355.2 481.25,353.4 481.50,354.6 481.75,352.1 482.00,353.0 482.25,354.7 482.50,354.7 482.75,355.1 483.00,352.6 483.25,351.9 483.50,352.6 483.75,352.8 484.00,353.9 484.25,355.4 484.50,355.2 484.75,352.9 485.00,355.7 485.25,353.2 485.50,357.8 485.75,354.4 486.00,354.9 486.25,354.2 486.50,354.3 486.75,352.9 487.00,354.7 487.25,351.9 487.50,354.0 487.75,352.5 488.00,352.6 488.25,352.2 488.50,350.3 488.75,351.0 489.00,352.7 489.25,351.6 489.50,351.7 489.75,349.9 490.00,351.1 490.25,348.9 490.50,350.3 490.75,346.2 491.00,351.3 491.25,351.6 491.50,350.2 491.75,353.0 492.00,352.1 492.25,352.4 492.50,350.7 492.75,350.8 493.00,353.7 493.25,351.6 493.50,350.9 493.75,352.4 494.00,351.0 494.25,351.2 494.50,353.3 494.75,354.5 495.00,352.7 495.25,357.8 495.50,355.6 495.75,352.3 496.00,351.9 496.25,351.4 496.50,352.8 496.75,352.3 497.00,349.8 497.25,352.2 497.50,350.1 497.75,352.1 498.00,348.6 498.25,350.5 498.50,348.1 498.75,348.7 499.00,349.5 499.25,350.2 499.50,347.4 499.75,350.6 500.00,348.7 500.25,349.6 500.50,348.7 500.75,348.0 501.00,347.9 501.25,349.8 501.50,350.1 501.75,349.1 502.00,350.2 502.25,352.4 502.50,349.8 502.75,349.5 503.00,349.0 503.25,350.3 503.50,351.4 503.75,350.2 504.00,352.7 504.25,351.3 504.50,349.7 504.75,349.7 505.00,350.5 505.25,351.5 505.50,353.7 505.75,353.4 506.00,351.5 506.25,349.7 506.50,352.1 506.75,352.3 507.00,350.2 507.25,348.1 507.50,350.6 507.75,348.7 508.00,349.7 508.25,347.0 508.50,348.8 508.75,350.1 509.00,348.1 509.25,347.1 509.50,348.0 509.75,348.3 510.00,346.8 510.25,347.6 510.50,345.6 510.75,346.8 511.00,348.0 511.25,347.8 511.50,347.7 511.75,344.7 512.00,347.5 512.25,346.2 512.50,346.5 512.75,347.5 513.00,345.2 513.25,345.4 513.50,346.2 513.75,345.5 514.00,345.9 514.25,344.1 514.50,344.8 514.75,344.4 515.00,345.7 515.25,342.7 515.50,343.1 515.75,343.4 516.00,343.5 516.25,344.7 516.50,343.5 516.75,341.9 517.00,344.7 517.25,341.2 517.50,342.2 517.75,343.1 518.00,342.6 518.25,341.5 518.50,342.3 518.75,342.6 519.00,341.9 519.25,342.6 519.50,340.1 519.75,341.4 520.00,343.1 520.25,340.2 520.50,342.5 520.75,339.3 521.00,341.3 521.25,339.3 521.50,341.0 521.75,339.0 522.00,339.6 522.25,341.2 522.50,341.1 522.75,339.5 523.00,340.2 523.25,338.2 523.50,340.7 523.75,340.8 524.00,339.4 524.25,338.5 524.50,340.6 524.75,340.1 525.00,339.0 525.25,338.3 525.50,337.1 525.75,336.9 526.00,338.3 526.25,337.0 526.50,338.7 526.75,338.0 527.00,338.1 527.25,337.6 527.50,336.0 527.75,337.9 528.00,337.3 528.25,338.8 528.50,335.6 528.75,337.6 529.00,338.6 529.25,336.9 529.50,336.0 529.75,335.4 530.00,338.3 530.25,336.9 530.50,335.7 530.75,336.9 531.00,334.3 531.25,335.6 531.50,335.9 531.75,335.8 532.00,339.9 532.25,337.9 532.50,340.3 532.75,339.0 533.00,337.7 533.25,339.0 533.50,337.6 533.75,340.1 534.00,338.8 534.25,338.0 534.50,339.1 534.75,339.6 535.00,338.1 535.25,339.9 535.50,339.9 535.75,338.2 536.00,340.0 536.25,341.1 536.50,339.1 536.75,340.3 537.00,339.0 537.25,341.3 537.50,341.1 537.75,341.6 538.00,342.8 538.25,342.2 538.50,340.7 538.75,343.4 539.00,341.1 539.25,342.4 539.50,341.9 539.75,343.1 540.00,341.0 540.25,340.9 540.50,340.9 540.75,341.8 541.00,342.4 541.25,345.0 541.50,345.4 541.75,346.9 542.00,345.7 542.25,343.9 542.50,345.4 542.75,341.7 543.00,343.7 543.25,344.0 543.50,342.8 543.75,341.5 544.00,340.6 544.25,341.9 544.50,341.1 544.75,340.6 545.00,341.3 545.25,340.6 545.50,340.7 545.75,339.7 546.00,342.4 546.25,340.9 546.50,341.9 546.75,339.8 547.00,339.4 547.25,338.9 547.50,340.2 547.75,338.1 548.00,340.1 548.25,337.6 548.50,338.5 548.75,338.5 549.00,338.3 549.25,340.4 549.50,339.0 549.75,339.3 550.00,339.4 550.25,336.6 550.50,336.8 550.75,340.0 551.00,337.6 551.25,337.8 551.50,338.4 551.75,338.9 552.00,338.3 552.25,335.8 552.50,335.7 552.75,339.0 553.00,338.3 553.25,337.9 553.50,335.3 553.75,337.5 554.00,336.5 554.25,336.7 554.50,334.6 554.75,335.3 555.00,336.9 555.25,336.0 555.50,336.2 555.75,335.7 556.00,337.0 556.25,337.1 556.50,335.3 556.75,337.0 557.00,337.0 557.25,336.2 557.50,336.3 557.75,333.3 558.00,334.2 558.25,333.6 558.50,336.4 558.75,335.6 559.00,334.5 559.25,335.8 559.50,332.9 559.75,335.4 560.00,332.4 560.25,334.0 560.50,332.4 560.75,333.1 561.00,332.4 561.25,334.9 561.50,332.2 561.75,333.1 562.00,332.6 562.25,334.5 562.50,334.3 562.75,333.0 563.00,332.4 563.25,331.8 563.50,333.5 563.75,333.9 564.00,333.7 564.25,332.2 564.50,333.3 564.75,331.9 565.00,333.5 565.25,330.7 565.50,330.6 565.75,330.6 566.00,332.4 566.25,333.3 566.50,332.1 566.75,328.2 567.00,332.9 567.25,333.3 567.50,333.0 567.75,333.8 568.00,332.7 568.25,335.6 568.50,335.0 568.75,335.8 569.00,334.8 569.25,335.9 569.50,336.3 569.75,334.4 570.00,335.3 570.25,334.7 570.50,333.7 570.75,335.5 571.00,337.3 571.25,336.7 571.50,335.8 571.75,334.4 572.00,337.7 572.25,337.5 572.50,337.7 572.75,338.0 573.00,338.6 573.25,337.7 573.50,337.5 573.75,338.2 574.00,336.8 574.25,339.5 574.50,338.8 574.75,337.8 575.00,337.2 575.25,337.1 575.50,336.7 575.75,338.0 576.00,340.7 576.25,338.4 576.50,338.6 576.75,337.9 577.00,338.5 577.25,341.4 577.50,342.4 577.75,341.2 578.00,342.9 578.25,340.9 578.50,340.7 578.75,337.9 579.00,340.8 579.25,338.2 579.50,338.5 579.75,337.1 580.00,337.2 580.25,337.7 580.50,337.7 580.75,336.4 581.00,339.2 581.25,336.4 581.50,335.9 581.75,338.5 582.00,336.2 582.25,335.5 582.50,336.4 582.75,336.6 583.00,336.0 583.25,337.4 583.50,334.9 583.75,336.4 584.00,335.2 584.25,336.5 584.50,337.1 584.75,337.7 585.00,336.2 585.25,334.9 585.50,336.0 585.75,337.4 586.00,335.9 586.25,337.2 586.50,336.5 586.75,334.1 587.00,336.2 587.25,335.1 587.50,335.7 587.75,336.3 588.00,333.3 588.25,333.3 588.50,333.4 588.75,333.2 589.00,333.2 589.25,334.7 589.50,332.8 589.75,333.4 590.00,333.3 590.25,333.0 590.50,331.9 590.75,334.8 591.00,334.1 591.25,335.2 591.50,331.9 591.75,331.6 592.00,331.4 592.25,333.5 592.50,332.8 592.75,333.8 593.00,333.6 593.25,333.6 593.50,334.1 593.75,331.3 594.00,331.4 594.25,331.3 594.50,333.5 594.75,331.0 595.00,331.6 595.25,332.0 595.50,331.5 595.75,331.7 596.00,331.4 596.25,333.3 596.50,331.3 596.75,331.1 597.00,333.0 597.25,331.4 597.50,331.8 597.75,329.8 598.00,330.1 598.25,329.6 598.50,330.0 598.75,330.4 599.00,331.8 599.25,330.2 599.50,329.5 599.75,329.9 600.00,330.7 600.25,330.0 600.50,329.2 600.75,331.5 601.00,328.8 601.25,329.8 601.50,331.0 601.75,327.7 602.00,329.1 602.25,330.3 602.50,327.5 602.75,327.7 603.00,331.1 603.25,332.1 603.50,331.3 603.75,330.4 604.00,330.9 604.25,331.5 604.50,333.9 604.75,332.5 605.00,332.7 605.25,331.0 605.50,331.6 605.75,332.9 606.00,334.9 606.25,334.1 606.50,334.4 606.75,333.3 607.00,334.8 607.25,335.4 607.50,334.7 607.75,335.9 608.00,337.3 608.25,336.1 608.50,335.8 608.75,337.1 609.00,335.1 609.25,333.3 609.50,332.5 609.75,333.5 610.00,331.6 610.25,332.0 610.50,332.3 610.75,332.4 611.00,333.9 611.25,331.3 611.50,331.1 611.75,330.6 612.00,331.0 612.25,330.8 612.50,330.0 612.75,333.0 613.00,330.8 613.25,331.9 613.50,330.0 613.75,330.1 614.00,332.9 614.25,331.3 614.50,332.7 614.75,332.5 615.00,329.5 615.25,330.6 615.50,330.3 615.75,330.7 616.00,329.5 616.25,330.5 616.50,329.4 616.75,329.2 617.00,329.1 617.25,328.8 617.50,330.5 617.75,328.5 618.00,328.1 618.25,331.6 618.50,329.2 618.75,330.2 619.00,330.5 619.25,328.3 619.50,329.2 619.75,330.9 620.00,327.7 620.25,328.6 620.50,330.2 620.75,329.5 621.00,327.1 621.25,330.6 621.50,327.9 621.75,329.3 622.00,328.9 622.25,329.0 622.50,330.0 622.75,328.4 623.00,327.3 623.25,328.2 623.50,327.9 623.75,326.9 624.00,328.9 624.25,327.0 624.50,326.1 624.75,327.4 625.00,328.5 625.25,328.9 625.50,328.7 625.75,326.7 626.00,327.2 626.25,325.4 626.50,328.9 626.75,327.9 627.00,325.7 627.25,327.6 627.50,327.5 627.75,326.4 628.00,325.3 628.25,327.8 628.50,325.5 628.75,325.9 629.00,325.0 629.25,328.2 629.50,324.9 629.75,326.9 630.00,326.3 630.25,328.0 630.50,324.5 630.75,327.0 631.00,326.9 631.25,326.6 631.50,327.3 631.75,326.7 632.00,323.9 632.25,326.6 632.50,327.2 632.75,325.1 633.00,325.4 633.25,324.8 633.50,325.4 633.75,326.5 634.00,325.7 634.25,326.5 634.50,326.5 634.75,326.8 635.00,329.9 635.25,328.4 635.50,328.7 635.75,329.5 636.00,329.0 636.25,330.8 636.50,329.6 636.75,329.6 637.00,328.6 637.25,329.9 637.50,330.2 637.75,331.1 638.00,330.3 638.25,331.6 638.50,331.1 638.75,332.9 639.00,334.0 639.25,332.4 639.50,331.0 639.75,331.2 640.00,331.7 640.25,330.9 640.50,330.5 640.75,329.6 641.00,329.3 641.25,328.4 641.50,328.6 641.75,330.8 642.00,329.7 642.25,329.5 642.50,327.1 642.75,328.2 643.00,328.3 643.25,329.9 643.50,326.7 643.75,328.4 644.00,328.6 644.25,328.7 644.50,327.4 644.75,328.4 645.00,329.4 645.25,327.0 645.50,329.5 645.75,328.7 646.00,327.0 646.25,328.4 646.50,326.2 646.75,329.2 647.00,327.0 647.25,329.0 647.50,328.5 647.75,328.3 648.00,327.7 648.25,327.4 648.50,328.1 648.75,325.0 649.00,325.5 649.25,327.5 649.50,324.8 649.75,326.9 650.00,326.9 650.25,325.6 650.50,326.9 650.75,326.0 651.00,327.6 651.25,327.2 651.50,327.6 651.75,324.3 652.00,326.5 652.25,324.9 652.50,326.3 652.75,325.8 653.00,327.4 653.25,324.1 653.50,326.2 653.75,325.7 654.00,323.9 654.25,325.9 654.50,325.7 654.75,324.3 655.00,326.2 655.25,324.1 655.50,326.3 655.75,323.5 656.00,324.0 656.25,325.9 656.50,325.9 656.75,324.1 657.00,324.4 657.25,323.9 657.50,326.2 657.75,325.6 658.00,323.2 658.25,323.5 658.50,323.3 658.75,325.4 659.00,325.6 659.25,325.2 659.50,325.7 659.75,325.3 660.00,325.4 660.25,325.3 660.50,324.0 660.75,323.7 661.00,323.2 661.25,322.0 661.50,323.1 661.75,324.3 662.00,325.0 662.25,322.9 662.50,323.9 662.75,321.4 663.00,322.9 663.25,323.5 663.50,324.6 663.75,321.6 664.00,321.0 664.25,321.2 664.50,323.2 664.75,327.2 665.00,325.1 665.25,327.4 665.50,327.4 665.75,327.6 666.00,328.6 666.25,325.2 666.50,328.3 666.75,328.3 667.00,326.7 667.25,328.3 667.50,327.3 667.75,328.3 668.00,327.1 668.25,326.3 668.50,326.9 668.75,329.3 669.00,328.5 669.25,328.2 669.50,331.3 669.75,329.8 670.00,330.0 670.25,330.4 670.50,328.9 670.75,327.1 671.00,326.8 671.25,329.4 671.50,329.9 671.75,327.6 672.00,325.9 672.25,326.4 672.50,328.4 672.75,326.9 673.00,327.3 673.25,325.5 673.50,326.7 673.75,326.0 674.00,327.3 674.25,326.0 674.50,326.1 674.75,325.4 675.00,325.3 675.25,325.5 675.50,325.3 675.75,327.3 676.00,327.1 676.25,325.2 676.50,324.7 676.75,327.7 677.00,326.8 677.25,324.6 677.50,324.2 677.75,324.1 678.00,327.1 678.25,325.7 678.50,325.3 678.75,326.9 679.00,323.7 679.25,323.9 679.50,325.8 679.75,324.6 680.00,324.3 680.25,323.9 680.50,325.3 680.75,324.0 681.00,323.5 681.25,323.7 681.50,324.4 681.75,324.9 682.00,325.1 682.25,324.5 682.50,326.1 682.75,324.0 683.00,323.7 683.25,322.6 683.50,322.5 683.75,324.2 684.00,326.0 684.25,322.8 684.50,325.7 684.75,323.2 685.00,322.3 685.25,324.7 685.50,323.2 685.75,323.4 686.00,324.2 686.25,323.5 686.50,323.6 686.75,322.5 687.00,325.0 687.25,323.5 687.50,323.5 687.75,322.9 688.00,325.0 688.25,322.1 688.50,323.3 688.75,323.9 689.00,321.9 689.25,324.7 689.50,321.3 689.75,323.0 690.00,321.0 690.25,322.7 690.50,322.1 690.75,322.3 691.00,322.6 691.25,323.9 691.50,321.3 691.75,324.1 692.00,321.4 692.25,323.3 692.50,322.3 692.75,321.0 693.00,323.0 693.25,322.0 693.50,322.5 693.75,321.8 694.00,322.4 694.25,321.4 694.50,322.8 694.75,320.4 695.00,322.7 695.25,323.0 695.50,319.3 695.75,321.5 696.00,322.4 696.25,322.5 696.50,325.2 696.75,325.1 697.00,326.6 697.25,323.4 697.50,326.9 697.75,326.1 698.00,324.8 698.25,327.5 698.50,326.0 698.75,324.4 699.00,324.7 699.25,327.7 699.50,326.4 699.75,327.7 700.00,327.5 700.25,325.8 700.50,325.9 700.75,325.7 701.00,329.1 701.25,327.9 701.50,328.4 701.75,328.6 702.00,327.8 702.25,328.9 702.50,327.5 702.75,328.3 703.00,325.7 703.25,327.5 703.50,327.2 703.75,325.7 704.00,327.2 704.25,327.8 704.50,326.2 704.75,327.4 705.00,325.4 705.25,324.2 705.50,326.5 705.75,325.6 706.00,323.6 706.25,325.3 706.50,324.3 706.75,324.2 707.00,323.5 707.25,324.4 707.50,324.8 707.75,326.5 708.00,326.2 708.25,325.3 708.50,326.7 708.75,323.8 709.00,324.4 709.25,326.3 709.50,323.8 709.75,324.2 710.00,324.1 710.25,326.1 710.50,324.0 710.75,324.7 711.00,322.6 711.25,323.3 711.50,325.2 711.75,323.8 712.00,322.6 712.25,324.7 712.50,324.3 712.75,322.5 713.00,323.2 713.25,325.3 713.50,324.9 713.75,323.0 714.00,322.0 714.25,324.5 714.50,321.5 714.75,322.3 715.00,322.3 715.25,324.6 715.50,323.0 715.75,324.8 716.00,324.9 716.25,323.8 716.50,324.3 716.75,323.9 717.00,321.6 717.25,324.6 717.50,322.6 717.75,322.2 718.00,322.8 718.25,321.2 718.50,320.6 718.75,321.7 719.00,321.8 719.25,320.9 719.50,320.9 719.75,323.3 720.00,320.4 720.25,321.0 720.50,323.2 720.75,323.5 721.00,320.4 721.25,321.1 721.50,320.5 721.75,320.4 722.00,323.6 722.25,321.7 722.50,320.0 722.75,321.7 723.00,322.1 723.25,320.2 723.50,321.4 723.75,321.9 724.00,320.6 724.25,319.4 724.50,320.1 724.75,319.8 725.00,322.3 725.25,319.6 725.50,322.1 725.75,322.3 726.00,318.8 726.25,320.5 726.50,324.6 726.75,322.3 727.00,323.9 727.25,325.8 727.50,325.4 727.75,325.4 728.00,323.0 728.25,323.1 728.50,325.0 728.75,325.8 729.00,326.0 729.25,324.3 729.50,323.8 729.75,325.3 730.00,326.7 730.25,326.1 730.50,325.9 730.75,329.0 731.00,330.5 731.25,327.5 731.50,326.3 731.75,325.3 732.00,328.1 732.25,324.8 732.50,326.0 732.75,327.6 733.00,325.1 733.25,325.5 733.50,325.9 733.75,324.6 734.00,324.1 734.25,324.5 734.50,326.1 734.75,323.8 735.00,326.5 735.25,326.4 735.50,326.0 735.75,324.0 736.00,324.9 736.25,323.5 736.50,326.0 736.75,324.4 737.00,324.4 737.25,325.6 737.50,325.1 737.75,324.6 738.00,325.0 738.25,323.7 738.50,325.1 738.75,325.1 739.00,325.2 739.25,323.5 739.50,322.4 739.75,322.7 740.00,322.2 740.25,323.2 740.50,322.1 740.75,323.3 741.00,323.0 741.25,322.3 741.50,324.5 741.75,322.5 742.00,324.2 742.25,321.7 742.50,322.9 742.75,323.6 743.00,323.8 743.25,323.7 743.50,322.6 743.75,321.5 744.00,323.2 744.25,323.0 744.50,323.1 744.75,323.7 745.00,320.5 745.25,323.2 745.50,322.0 745.75,321.0 746.00,322.8 746.25,321.5 746.50,321.3 746.75,322.1 747.00,320.7 747.25,320.0 747.50,322.0 747.75,322.2 748.00,320.3 748.25,323.3 748.50,322.1 748.75,320.3 749.00,320.1 749.25,320.9 749.50,320.0 749.75,321.5 750.00,322.5 750.25,321.8 750.50,321.1 750.75,321.3 751.00,321.6 751.25,319.6 751.50,320.8 751.75,321.2 752.00,321.8 752.25,321.9 752.50,322.3 752.75,320.5 753.00,322.0 753.25,322.0 753.50,321.2 753.75,320.1 754.00,320.9 754.25,320.3 754.50,320.7 754.75,321.4 755.00,320.2 755.25,321.8 755.50,318.8 755.75,319.7 756.00,318.6 756.25,320.9 756.50,321.0 756.75,318.6 757.00,317.6 757.25,322.7 757.50,320.4 757.75,322.5 758.00,323.5 758.25,324.1 758.50,324.4 758.75,323.8 759.00,323.3 759.25,322.0 759.50,324.2 759.75,323.1 760.00,324.4 760.25,326.2 760.50,323.4 760.75,325.0 761.00,325.4 761.25,324.3 761.50,326.6 761.75,328.0 762.00,328.2 762.25,327.6 762.50,324.3 762.75,326.4 763.00,325.1 763.25,323.2 763.50,325.6 763.75,325.0 764.00,322.3 764.25,325.0 764.50,323.1 764.75,322.3 765.00,325.0 765.25,324.4 765.50,323.4 765.75,322.1 766.00,325.2 766.25,322.7 766.50,323.9 766.75,323.6 767.00,322.7 767.25,324.3 767.50,322.4 767.75,322.4 768.00,322.8 768.25,322.8 768.50,321.9 768.75,323.3 769.00,324.5 769.25,323.0 769.50,322.6 769.75,324.1 770.00,321.2 770.25,323.1 770.50,322.0 770.75,320.6 771.00,322.7 771.25,321.5 771.50,321.0 771.75,323.5 772.00,321.3 772.25,322.5 772.50,322.7 772.75,323.4 773.00,323.3 773.25,321.1 773.50,322.0 773.75,322.6 774.00,323.1 774.25,322.2 774.50,320.0 774.75,322.1 775.00,320.7 775.25,319.5 775.50,322.8 775.75,319.8 776.00,320.6 776.25,319.3 776.50,321.2 776.75,319.7 777.00,320.0 777.25,321.1 777.50,322.3 777.75,320.7 778.00,322.0 778.25,320.0 778.50,322.1 778.75,321.7 779.00,320.9 779.25,319.5 779.50,319.6 779.75,321.5 780.00,321.1 780.25,321.7 780.50,318.9 780.75,321.6 781.00,320.4 781.25,321.3 781.50,318.7 781.75,319.6 782.00,318.4 782.25,319.1 782.50,319.3 782.75,319.3 783.00,320.8 783.25,318.3 783.50,319.3 783.75,321.2 784.00,318.1 784.25,318.9 784.50,318.2 784.75,321.0 785.00,319.7 785.25,317.7 785.50,317.6 785.75,320.7 786.00,321.1 786.25,319.8 786.50,321.0 786.75,319.0 787.00,319.1 787.25,320.4 787.50,315.9 787.75,320.3 788.00,322.2 788.25,319.9 788.50,320.4 788.75,323.2 789.00,322.6 789.25,323.4 789.50,323.0 789.75,324.4 790.00,323.8 790.25,324.1 790.50,322.2 790.75,324.9 791.00,322.8 791.25,323.2 791.50,325.6 791.75,323.6 792.00,326.0 792.25,326.2 792.50,326.2 792.75,328.5 793.00,327.2 793.25,325.4 793.50,327.8 793.75,325.9 794.00,325.7 794.25,323.3 794.50,323.2 794.75,324.4 795.00,323.2 795.25,324.9 795.50,325.4 795.75,323.4 796.00,323.6 796.25,324.9 796.50,321.9 796.75,322.5 797.00,324.8 797.25,325.2 797.50,324.6 797.75,323.4 798.00,323.0 798.25,321.6 798.50,323.8 798.75,323.2 799.00,324.5 799.25,323.5 799.50,322.5 799.75,322.6 800.00,323.1 800.25,324.3 800.50,324.2 800.75,321.3 801.00,322.8 801.25,321.5 801.50,323.4 801.75,323.9 802.00,320.8 802.25,322.8 802.50,323.6 802.75,323.3 803.00,321.8 803.25,322.0 803.50,323.4 803.75,320.5 804.00,322.1 804.25,320.0 804.50,322.8 804.75,322.9 805.00,320.5 805.25,320.4 805.50,322.7 805.75,321.5 806.00,319.6 806.25,321.6 806.50,323.3 806.75,322.5 807.00,322.4 807.25,322.5 807.50,321.4 807.75,322.9 808.00,320.8 808.25,321.4 808.50,320.1 808.75,320.6 809.00,321.9 809.25,320.7 809.50,321.6 809.75,321.1 810.00,322.2 810.25,321.2 810.50,321.1 810.75,319.0 811.00,322.2 811.25,321.5 811.50,320.4 811.75,321.4 812.00,320.4 812.25,321.1 812.50,318.7 812.75,320.9 813.00,321.3 813.25,318.3 813.50,321.2 813.75,318.1 814.00,318.8 814.25,320.3 814.50,319.7 814.75,318.1 815.00,321.6 815.25,319.2 815.50,319.7 815.75,319.2 816.00,321.5 816.25,321.4 816.50,317.8 816.75,318.0 817.00,321.3 817.25,320.9 817.50,318.0 817.75,320.2 818.00,318.1 818.25,317.6 818.50,321.4 818.75,322.2 819.00,322.4 819.25,323.3 819.50,324.6 819.75,321.2 820.00,322.2 820.25,323.8 820.50,323.8 820.75,322.1 821.00,324.5 821.25,322.6 821.50,322.9 821.75,323.2 822.00,326.1 822.25,324.7 822.50,323.0 822.75,324.2 823.00,326.1 823.25,323.6 823.50,330.0 823.75,329.3 824.00,327.7 824.25,326.5 824.50,325.5 824.75,326.1 825.00,324.4 825.25,326.2 825.50,326.6 825.75,323.6 826.00,323.7 826.25,323.1 826.50,325.0 826.75,323.0 827.00,325.6 827.25,322.4 827.50,324.6 827.75,325.6 828.00,324.5 828.25,323.9 828.50,323.1 828.75,322.6 829.00,323.8 829.25,322.6 829.50,324.0 829.75,324.3 830.00,323.3 830.25,323.6 830.50,321.4 830.75,324.8 831.00,324.4 831.25,322.5 831.50,324.6 831.75,322.4 832.00,321.7 832.25,324.6 832.50,322.2 832.75,322.8 833.00,324.3 833.25,323.5 833.50,323.3 833.75,322.9 834.00,321.6 834.25,323.2 834.50,323.6 834.75,324.1 835.00,322.4 835.25,323.0 835.50,322.7 835.75,320.5 836.00,322.0 836.25,323.0 836.50,323.0 836.75,323.0 837.00,322.6 837.25,322.6 837.50,321.6 837.75,322.8 838.00,322.3 838.25,323.0 838.50,320.7 838.75,319.9 839.00,321.7 839.25,320.5 839.50,320.0 839.75,320.3 840.00,321.2 840.25,322.4 840.50,321.9 840.75,320.0 841.00,321.8 841.25,320.1 841.50,321.9 841.75,319.3 842.00,321.7 842.25,321.3 842.50,322.4 842.75,322.1 843.00,322.3 843.25,320.9 843.50,320.8 843.75,319.1 844.00,319.0 844.25,321.9 844.50,320.5 844.75,319.1 845.00,318.8 845.25,320.4 845.50,318.5 845.75,320.8 846.00,319.5 846.25,321.8 846.50,321.4 846.75,318.5 847.00,318.4 847.25,321.7 847.50,320.2 847.75,319.3 848.00,320.9 848.25,320.5 848.50,318.7 848.75,317.4 849.00,320.3 849.25,323.2 849.50,323.3 849.75,323.8 850.00,322.0 850.25,324.7 850.50,324.8 850.75,321.6 851.00,324.5 851.25,322.8 851.50,324.1 851.75,325.2 852.00,325.9 852.25,323.5 852.50,326.1 852.75,324.9 853.00,325.7 853.25,326.6 853.50,326.0 853.75,325.7 854.00,327.7 854.25,329.5 854.50,327.1 854.75,325.4 855.00,325.0 855.25,326.8 855.50,323.7 855.75,326.5 856.00,325.3 856.25,325.8 856.50,325.6 856.75,325.3 857.00,324.9 857.25,325.6 857.50,325.0 857.75,322.2 858.00,325.3 858.25,324.3 858.50,322.5 858.75,323.8 859.00,322.8 859.25,322.5 859.50,321.8 859.75,323.4 860.00,324.9 860.25,324.7 860.50,324.4 860.75,323.5 861.00,323.4 861.25,321.6 861.50,322.8 861.75,324.1 862.00,322.9 862.25,322.6 862.50,324.3 862.75,322.2 863.00,321.0 863.25,321.6 863.50,321.6 863.75,321.2 864.00,321.5 864.25,322.1 864.50,323.9 864.75,323.4 865.00,320.6 865.25,323.3 865.50,322.5 865.75,322.6 866.00,323.8 866.25,321.4 866.50,322.7 866.75,321.8 867.00,321.3 867.25,320.6 867.50,322.1 867.75,323.1 868.00,321.1 868.25,320.8 868.50,321.8 868.75,322.8 869.00,321.2 869.25,321.8 869.50,320.6 869.75,323.1 870.00,321.9 870.25,322.3 870.50,319.8 870.75,320.9 871.00,322.5 871.25,319.6 871.50,322.8 871.75,320.3 872.00,319.5 872.25,322.6 872.50,319.8 872.75,320.5 873.00,321.8 873.25,320.7 873.50,319.4 873.75,321.0 874.00,320.0 874.25,322.2 874.50,321.7 874.75,318.6 875.00,321.9 875.25,319.9 875.50,319.3 875.75,321.6 876.00,319.2 876.25,321.7 876.50,319.1 876.75,320.5 877.00,321.7 877.25,318.1 877.50,320.1 877.75,320.7 878.00,319.4 878.25,318.7 878.50,319.2 878.75,320.0 879.00,321.3 879.25,321.1 879.50,320.4 879.75,319.7 880.00,321.3 880.25,323.5 880.50,322.5 880.75,323.1 881.00,324.0 881.25,324.4 881.50,324.5 881.75,324.5 882.00,323.2 882.25,324.8 882.50,324.5 882.75,323.3 883.00,324.2 883.25,325.7 883.50,322.8 883.75,325.6 884.00,326.6 884.25,326.1 884.50,323.7 884.75,327.7 885.00,329.1 885.25,326.6 885.50,326.4 885.75,324.6 886.00,326.6 886.25,324.7 886.50,326.9 886.75,326.6 887.00,326.2 887.25,322.9 887.50,323.2 887.75,326.1 888.00,324.1 888.25,322.9 888.50,325.4 888.75,324.7 889.00,323.8 889.25,322.0 889.50,323.4 889.75,323.1 890.00,322.7 890.25,322.3 890.50,324.2 890.75,322.7 891.00,323.0 891.25,324.5 891.50,324.4 891.75,322.2 892.00,324.9 892.25,323.5 892.50,323.8 892.75,323.9 893.00,322.2 893.25,324.1 893.50,324.4 893.75,321.1 894.00,320.9 894.25,321.7 894.50,322.5 894.75,323.7 895.00,324.1 895.25,320.8 895.50,321.1 895.75,322.8 896.00,322.8 896.25,321.3 896.50,323.5 896.75,321.4 897.00,321.8 897.25,323.5 897.50,320.9 897.75,322.5 898.00,323.6 898.25,322.1 898.50,322.2 898.75,321.7 899.00,321.8 899.25,320.3 899.50,322.6 899.75,322.5 900.00,319.9 900.25,320.7 900.50,320.0 900.75,320.2 901.00,319.8 901.25,320.0 901.50,320.1 901.75,319.5 902.00,321.0 902.25,319.7 902.50,322.6 902.75,322.1 903.00,321.7 903.25,319.8 903.50,321.3 903.75,320.0 904.00,318.8 904.25,321.4 904.50,320.9 904.75,320.4 905.00,321.3 905.25,319.2 905.50,319.1 905.75,321.3 906.00,321.2 906.25,320.9 906.50,319.8 906.75,318.6 907.00,320.5 907.25,318.8 907.50,320.8 907.75,320.3 908.00,320.5 908.25,321.5 908.50,319.9 908.75,319.8 909.00,318.8 909.25,320.0 909.50,318.6 909.75,320.4 910.00,318.8 910.25,318.2 910.50,319.0 910.75,317.6 911.00,318.6 911.25,320.8 911.50,323.2 911.75,320.6 912.00,321.6 912.25,321.2 912.50,322.5 912.75,321.4 913.00,321.7 913.25,323.9 913.50,324.8 913.75,325.3 914.00,324.2 914.25,322.4 914.50,325.5 914.75,324.7 915.00,325.7 915.25,323.0 915.50,327.5 915.75,325.9 916.00,326.2 916.25,325.6 916.50,324.0 916.75,324.0 917.00,323.1 917.25,323.8 917.50,324.3 917.75,322.5 918.00,325.0 918.25,325.5 918.50,323.5 918.75,321.5 919.00,324.6 919.25,322.0 919.50,324.8 919.75,324.5 920.00,323.1 920.25,322.3 920.50,323.9 920.75,321.5 921.00,322.3 921.25,324.3 921.50,321.6 921.75,322.1 922.00,323.8 922.25,324.2 922.50,324.0 922.75,322.7 923.00,323.9 923.25,320.6 923.50,322.7 923.75,320.7 924.00,323.8 924.25,322.6 924.50,322.3 924.75,322.1 925.00,320.7 925.25,320.0 925.50,322.7 925.75,321.6 926.00,321.4 926.25,323.0 926.50,322.8 926.75,322.6 927.00,322.7 927.25,321.0 927.50,322.9 927.75,321.7 928.00,323.0 928.25,320.2 928.50,321.1 928.75,321.3 929.00,321.5 929.25,319.7 929.50,322.7 929.75,321.7 930.00,320.0 930.25,320.8 930.50,322.4 930.75,318.9 931.00,319.7 931.25,319.6 931.50,319.7 931.75,322.4 932.00,319.9 932.25,318.5 932.50,322.2 932.75,321.9 933.00,320.8 933.25,319.0 933.50,318.5 933.75,319.3 934.00,321.8 934.25,318.4 934.50,320.0 934.75,318.8 935.00,320.2 935.25,318.1 935.50,319.5 935.75,320.0 936.00,320.9 936.25,318.5 936.50,320.6 936.75,319.4 937.00,321.0 937.25,319.9 937.50,320.8 937.75,319.8 938.00,320.0 938.25,320.6 938.50,319.4 938.75,320.5 939.00,318.4 939.25,319.7 939.50,320.9 939.75,318.6 940.00,320.8 940.25,317.5 940.50,318.2 940.75,319.4 941.00,320.2 941.25,315.3 941.50,319.0 941.75,321.9 942.00,322.1 942.25,320.8 942.50,321.9 942.75,322.0 943.00,322.7 943.25,322.5 943.50,322.3 943.75,322.1 944.00,323.9 944.25,323.5 944.50,323.0 944.75,323.8 945.00,323.1 945.25,324.4 945.50,325.5 945.75,324.9 946.00,324.2 946.25,324.1 946.50,328.1 946.75,326.6 947.00,328.3 947.25,326.0 947.50,325.9 947.75,326.1 948.00,325.9 948.25,323.8 948.50,324.1 948.75,323.1 949.00,323.2 949.25,323.0 949.50,325.3 949.75,325.1 950.00,324.7 950.25,322.9 950.50,324.8 950.75,324.2 951.00,322.9 951.25,324.3 951.50,323.7 951.75,322.6 952.00,321.8 952.25,321.2 952.50,324.2 952.75,324.0 953.00,323.1 953.25,321.1 953.50,322.9 953.75,321.2 954.00,321.0 954.25,321.4 954.50,321.8 954.75,322.0 955.00,321.0 955.25,321.5 955.50,322.7 955.75,323.0 956.00,320.6 956.25,320.4 956.50,320.3 956.75,321.1 957.00,322.8 957.25,320.7 957.50,321.3 957.75,320.4 958.00,321.3 958.25,320.0 958.50,323.1 958.75,322.1 959.00,320.2 959.25,322.7 959.50,322.6 959.75,322.3 960.00,320.2 960.25,322.8 960.50,320.1 960.75,322.8 961.00,320.5 961.25,319.3 961.50,320.8 961.75,321.0 962.00,320.5 962.25,321.2 962.50,322.2 962.75,321.1 963.00,319.0 963.25,318.9 963.50,318.8 963.75,320.9 964.00,321.6 964.25,319.8 964.50,320.6 964.75,320.2 965.00,318.9 965.25,321.1 965.50,319.4 965.75,321.5 966.00,319.2 966.25,320.1 966.50,319.2 966.75,321.8 967.00,318.9 967.25,321.7 967.50,319.3 967.75,318.9 968.00,321.2 968.25,320.7 968.50,320.1 968.75,320.0 969.00,318.7 969.25,321.4 969.50,318.3 969.75,317.8 970.00,320.5 970.25,319.2 970.50,319.9 970.75,317.6 971.00,319.6 971.25,319.4 971.50,319.5 971.75,318.5 972.00,320.3 972.25,317.8 972.50,320.4 972.75,319.3 973.00,323.3 973.25,320.3 973.50,322.7 973.75,323.0 974.00,321.6 974.25,321.1 974.50,323.7 974.75,324.8 975.00,323.9 975.25,322.1 975.50,323.3 975.75,323.4 976.00,322.9 976.25,325.0 976.50,325.1 976.75,325.9 977.00,322.8 977.25,327.0 977.50,328.3 977.75,325.5 978.00,327.1 978.25,327.2 978.50,323.3 978.75,323.9 979.00,325.6 979.25,326.2 979.50,325.8 979.75,323.4 980.00,323.1 980.25,325.3 980.50,325.2 980.75,324.9 981.00,324.8 981.25,322.1 981.50,324.3 981.75,323.7 982.00,324.3 982.25,324.5 982.50,324.4 982.75,324.3 983.00,323.7 983.25,323.3 983.50,321.1 983.75,323.6 984.00,321.5 984.25,323.4 984.50,323.7 984.75,323.5 985.00,322.0 985.25,324.1 985.50,322.8 985.75,322.6 986.00,323.3 986.25,323.0 986.50,321.2 986.75,323.0 987.00,320.6 987.25,323.7 987.50,322.4 987.75,321.3 988.00,323.4 988.25,321.7 988.50,320.7 988.75,321.8 989.00,323.1 989.25,320.6 989.50,320.7 989.75,321.8 990.00,319.5 990.25,323.0 990.50,322.7 990.75,319.4 991.00,320.1 991.25,321.5 991.50,320.7 991.75,320.3 992.00,319.5 992.25,322.2 992.50,321.3 992.75,321.4 993.00,324.1 993.25,324.9 993.50,322.8 993.75,325.9 994.00,324.7 994.25,326.4 994.50,326.1 994.75,324.4 995.00,326.6 995.25,324.9 995.50,326.8 995.75,325.5 996.00,323.7 996.25,324.6 996.50,327.0 996.75,327.6 997.00,324.5 997.25,326.0 997.50,326.7 997.75,325.7 998.00,331.6 998.25,327.3 998.50,329.2 998.75,326.2 999.00,325.8 999.25,328.1 999.50,327.3 999.75,326.3 1000.00,327.5 1000.25,324.2 1000.50,324.3 1000.75,324.3 1001.00,323.8 1001.25,326.7 1001.50,324.2 1001.75,325.8 1002.00,327.2 1002.25,324.2 1002.50,323.3 1002.75,323.2 1003.00,325.0 1003.25,323.9 1003.50,327.1 1003.75,328.4 1004.00,327.6 1004.25,329.3 1004.50,329.1 1004.75,328.9 1005.00,329.3 1005.25,327.5 1005.50,329.7 1005.75,328.4 1006.00,327.5 1006.25,329.8 1006.50,331.0 1006.75,330.7 1007.00,328.2 1007.25,331.0 1007.50,331.1 1007.75,330.9 1008.00,331.0 1008.25,334.8 1008.50,333.3 1008.75,332.6 1009.00,332.6 1009.25,329.5 1009.50,330.8 1009.75,329.7 1010.00,328.6 1010.25,329.5 1010.50,328.4 1010.75,328.8 1011.00,327.7 1011.25,330.1 1011.50,327.2 1011.75,328.1 1012.00,329.5 1012.25,328.9 1012.50,328.9 1012.75,328.0 1013.00,326.6 1013.25,327.8 1013.50,330.2 1013.75,331.1 1014.00,332.6 1014.25,332.1 1014.50,329.6 1014.75,330.2 1015.00,331.5 1015.25,331.6 1015.50,333.4 1015.75,332.3 1016.00,332.1 1016.25,333.6 1016.50,334.0 1016.75,332.2 1017.00,334.1 1017.25,333.2 1017.50,334.4 1017.75,334.5 1018.00,333.0 1018.25,333.9 1018.50,331.7 1018.75,333.1 1019.00,335.4 1019.25,333.0 1019.50,335.6 1019.75,334.2 1020.00,335.1 1020.25,335.1 1020.50,333.7 1020.75,334.3 1021.00,336.1 1021.25,335.1 1021.50,335.8 1021.75,337.4 1022.00,334.8 1022.25,334.2 1022.50,335.4 1022.75,335.2 1023.00,335.0 1023.25,335.2 1023.50,335.7 1023.75,336.9 1024.00,335.6 1024.25,336.7 1024.50,338.6 1024.75,338.8 1025.00,337.9 1025.25,338.4 1025.50,338.3 1025.75,338.1 1026.00,337.6 1026.25,339.9 1026.50,338.2 1026.75,339.0 1027.00,338.9 1027.25,338.6 1027.50,340.6 1027.75,341.7 1028.00,340.2 1028.25,340.2 1028.50,339.3 1028.75,342.1 1029.00,342.0 1029.25,341.7 1029.50,341.0 1029.75,339.4 1030.00,340.2 1030.25,339.8 1030.50,342.1 1030.75,341.6 1031.00,341.9 1031.25,343.0 1031.50,342.3 1031.75,341.2 1032.00,344.3 1032.25,342.3 1032.50,344.4 1032.75,342.8 1033.00,342.7 1033.25,343.2 1033.50,342.3 1033.75,342.8 1034.00,342.6 1034.25,344.1 1034.50,345.1 1034.75,346.3 1035.00,344.1 1035.25,344.5 1035.50,344.1 1035.75,345.4 1036.00,346.9 1036.25,347.1 1036.50,345.1 1036.75,346.4 1037.00,346.4 1037.25,347.6 1037.50,346.5 1037.75,347.2 1038.00,346.3 1038.25,345.0 1038.50,345.8 1038.75,346.0 1039.00,351.0 1039.25,348.4 1039.50,349.9 1039.75,346.9 1040.00,347.6 1040.25,348.5 1040.50,347.5 1040.75,344.5 1041.00,345.3 1041.25,344.0 1041.50,345.7 1041.75,343.7 1042.00,345.7 1042.25,344.7 1042.50,344.1 1042.75,343.9 1043.00,346.1 1043.25,343.3 1043.50,343.5 1043.75,345.5 1044.00,342.7 1044.25,344.4 1044.50,343.9 1044.75,341.9 1045.00,342.7 1045.25,344.7 1045.50,347.5 1045.75,347.5 1046.00,347.9 1046.25,345.8 1046.50,344.5 1046.75,347.3 1047.00,344.3 1047.25,346.4 1047.50,345.7 1047.75,347.4 1048.00,345.3 1048.25,346.6 1048.50,347.7 1048.75,347.0 1049.00,347.1 1049.25,347.1 1049.50,346.9 1049.75,345.8 1050.00,348.2 1050.25,348.3 1050.50,346.7 1050.75,345.6 1051.00,347.1 1051.25,346.9 1051.50,346.2 1051.75,348.4 1052.00,349.2 1052.25,349.0 1052.50,348.6 1052.75,347.2 1053.00,349.7 1053.25,347.1 1053.50,348.6 1053.75,348.0 1054.00,347.0 1054.25,350.5 1054.50,347.5 1054.75,350.9 1055.00,350.1 1055.25,351.0 1055.50,348.2 1055.75,349.5 1056.00,349.4 1056.25,349.9 1056.50,350.8 1056.75,351.9 1057.00,349.5 1057.25,349.0 1057.50,351.5 1057.75,349.2 1058.00,352.1 1058.25,351.6 1058.50,352.4 1058.75,350.6 1059.00,350.3 1059.25,349.8 1059.50,350.5 1059.75,352.3 1060.00,352.5 1060.25,353.2 1060.50,350.9 1060.75,351.5 1061.00,353.3 1061.25,350.9 1061.50,350.6 1061.75,350.6 1062.00,353.9 1062.25,353.4 1062.50,352.7 1062.75,351.3 1063.00,353.7 1063.25,352.1 1063.50,352.7 1063.75,352.6 1064.00,352.9 1064.25,354.6 1064.50,353.8 1064.75,354.4 1065.00,355.5 1065.25,352.1 1065.50,355.5 1065.75,355.7 1066.00,354.0 1066.25,354.0 1066.50,352.6 1066.75,353.8 1067.00,354.4 1067.25,355.1 1067.50,353.6 1067.75,355.5 1068.00,353.8 1068.25,354.4 1068.50,356.5 1068.75,354.0 1069.00,356.2 1069.25,356.5 1069.50,355.5 1069.75,355.9 1070.00,357.7 1070.25,354.8 1070.50,355.1 1070.75,354.5 1071.00,355.2 1071.25,354.6 1071.50,355.0 1071.75,357.6 1072.00,357.2 1072.25,355.7 1072.50,357.4 1072.75,355.3 1073.00,355.1 1073.25,356.1 1073.50,357.6 1073.75,356.5 1074.00,357.4 1074.25,359.0 1074.50,357.7 1074.75,356.9 1075.00,356.2 1075.25,357.6 1075.50,356.0 1075.75,359.1 1076.00,358.0 1076.25,359.1 1076.50,358.2 1076.75,357.6 1077.00,360.0 1077.25,356.8 1077.50,360.1 1077.75,359.5 1078.00,359.6 1078.25,357.7 1078.50,357.1 1078.75,359.6 1079.00,357.1 1079.25,360.7 1079.50,357.8 1079.75,357.3 1080.00,357.5 1080.25,359.9 1080.50,360.9 1080.75,360.0 1081.00,358.2 1081.25,359.1 1081.50,358.4 1081.75,360.0 1082.00,359.2 1082.25,360.0 1082.50,361.9 1082.75,361.3 1083.00,359.5 1083.25,359.9 1083.50,358.9 1083.75,360.5 1084.00,360.4 1084.25,362.4 1084.50,362.2 1084.75,361.6 1085.00,360.2 1085.25,360.1 1085.50,362.7 1085.75,361.8 1086.00,359.5 1086.25,359.8 1086.50,361.5 1086.75,362.1 1087.00,359.9 1087.25,359.5 1087.50,360.6 1087.75,361.5 1088.00,360.5 1088.25,363.3 1088.50,362.9 1088.75,362.3 1089.00,363.0 1089.25,362.9 1089.50,363.5 1089.75,361.2 1090.00,361.5 1090.25,360.8 1090.50,360.8 1090.75,361.3 1091.00,361.6 1091.25,362.8 1091.50,363.4 1091.75,360.8 1092.00,361.2 1092.25,361.2 1092.50,361.4 1092.75,363.3 1093.00,361.9 1093.25,361.8 1093.50,361.5 1093.75,363.6 1094.00,363.8 1094.25,364.9 1094.50,361.7 1094.75,362.9 1095.00,362.4 1095.25,364.8 1095.50,365.0 1095.75,362.5 1096.00,363.2 1096.25,362.5 1096.50,365.4 1096.75,362.2 1097.00,362.2 1097.25,362.6 1097.50,364.9 1097.75,363.9 1098.00,364.2 1098.25,363.5 1098.50,365.8 1098.75,363.4 1099.00,365.7 1099.25,363.8 1099.50,365.5 1099.75,363.6 1100.00,365.5 1100.25,365.3 1100.50,363.8 1100.75,364.5 1101.00,366.0 1101.25,366.0 1101.50,365.8 1101.75,366.6 1102.00,364.6 1102.25,365.7 1102.50,364.2 1102.75,364.1 1103.00,363.4 1103.25,364.2 1103.50,367.1 1103.75,365.2 1104.00,365.0 1104.25,364.9 1104.50,366.2 1104.75,365.0 1105.00,366.1 1105.25,366.8 1105.50,366.0 1105.75,367.0 1106.00,365.8 1106.25,366.8 1106.50,367.2 1106.75,364.4 1107.00,364.5 1107.25,366.7 1107.50,364.1 1107.75,364.7 1108.00,366.2 1108.25,365.7 1108.50,367.8 1108.75,367.4 1109.00,364.4 1109.25,367.4 1109.50,365.1 1109.75,367.9 1110.00,365.9 1110.25,364.7 1110.50,365.6 1110.75,366.5 1111.00,364.9 1111.25,365.3 1111.50,365.7 1111.75,368.1 1112.00,367.1 1112.25,368.0 1112.50,366.3 1112.75,366.5 1113.00,368.2 1113.25,365.9 1113.50,368.3 1113.75,367.9 1114.00,365.9 1114.25,367.9 1114.50,365.5 1114.75,367.3 1115.00,368.9 1115.25,368.5 1115.50,367.4 1115.75,367.9 1116.00,367.9 1116.25,368.9 1116.50,366.5 1116.75,368.8 1117.00,368.2 1117.25,367.2 1117.50,368.0 1117.75,367.4 1118.00,369.1 1118.25,369.5 1118.50,366.7 1118.75,366.0 1119.00,367.0 1119.25,367.8 1119.50,368.7 1119.75,369.6 1120.00,368.0 1120.25,368.9 1120.50,369.8 1120.75,368.2 1121.00,368.9 1121.25,367.3 1121.50,369.0 1121.75,369.5 1122.00,367.3 1122.25,369.5 1122.50,369.8 1122.75,368.5 1123.00,368.1 1123.25,370.2 1123.50,367.2 1123.75,366.9 1124.00,367.0 1124.25,370.2 1124.50,369.6 1124.75,368.2 1125.00,367.9 1125.25,369.4 1125.50,368.6 1125.75,369.0 1126.00,370.5 1126.25,367.1 1126.50,367.1 1126.75,370.9 1127.00,369.2 1127.25,370.8 1127.50,368.1 1127.75,369.9 1128.00,369.3 1128.25,369.3 1128.50,369.3 1128.75,370.4 1129.00,370.8 1129.25,368.5 1129.50,369.2 1129.75,370.4 1130.00,368.7 1130.25,367.5 1130.50,369.2 1130.75,369.3 1131.00,369.8 1131.25,369.7 1131.50,368.7 1131.75,370.9 1132.00,369.5 1132.25,370.5 1132.50,370.8 1132.75,369.8 1133.00,369.8 1133.25,369.8 1133.50,371.2 1133.75,371.0 1134.00,368.0 1134.25,370.4 1134.50,371.7 1134.75,368.5 1135.00,370.0 1135.25,371.1 1135.50,369.6 1135.75,370.0 1136.00,368.4 1136.25,371.5 1136.50,370.3 1136.75,368.4 1137.00,371.3 1137.25,372.0 1137.50,370.6 1137.75,369.5 1138.00,370.0 1138.25,371.2 1138.50,371.9 1138.75,370.2 1139.00,370.8 1139.25,368.9 1139.50,370.2 1139.75,371.8 1140.00,369.7 1140.25,369.4 1140.50,369.5 1140.75,369.5 1141.00,371.0 1141.25,369.2 1141.50,370.7 1141.75,369.0 1142.00,369.8 1142.25,371.9 1142.50,370.3 1142.75,371.0 1143.00,371.4 1143.25,372.4 1143.50,371.1 1143.75,370.9 1144.00,372.5 1144.25,369.2 1144.50,371.7 1144.75,369.3 1145.00,370.3 1145.25,371.3 1145.50,372.3 1145.75,369.6 1146.00,369.5 1146.25,371.4 1146.50,371.4 1146.75,372.9 1147.00,372.5 1147.25,370.5 1147.50,370.0 1147.75,371.3 1148.00,370.8 1148.25,372.7 1148.50,370.4 1148.75,373.0 1149.00,371.0 1149.25,371.9 1149.50,371.8 1149.75,372.8 1150.00,369.8 1150.25,371.9 1150.50,372.7 1150.75,370.8 1151.00,373.2 1151.25,371.2 1151.50,371.3 1151.75,372.3 1152.00,370.4 1152.25,372.3 1152.50,370.2 1152.75,372.4 1153.00,372.3 1153.25,371.1 1153.50,370.2 1153.75,373.0 1154.00,371.5 1154.25,373.0 1154.50,371.2 1154.75,369.9 1155.00,371.3 1155.25,371.2 1155.50,373.1 1155.75,370.1 1156.00,372.8 1156.25,372.8 1156.50,370.2 1156.75,370.5 1157.00,371.1 1157.25,370.0 1157.50,370.9 1157.75,370.6 1158.00,370.2 1158.25,370.8 1158.50,373.8 1158.75,372.0 1159.00,370.4 1159.25,370.6 1159.50,373.4 1159.75,373.0 1160.00,370.3 1160.25,371.3 1160.50,370.3 1160.75,370.3 1161.00,372.3 1161.25,372.2 1161.50,373.5 1161.75,373.1 1162.00,371.7 1162.25,370.6 1162.50,373.0 1162.75,373.2 1163.00,371.0 1163.25,372.8 1163.50,374.2 1163.75,372.5 1164.00,370.5 1164.25,373.1 1164.50,372.4 1164.75,374.0 1165.00,372.4 1165.25,373.8 1165.50,372.6 1165.75,373.2 1166.00,371.3 1166.25,371.7 1166.50,371.1 1166.75,371.7 1167.00,371.1 1167.25,373.5 1167.50,374.1 1167.75,373.2 1168.00,371.1 1168.25,372.7 1168.50,374.0 1168.75,371.6 1169.00,372.3 1169.25,372.0 1169.50,371.4 1169.75,374.1 1170.00,372.1 1170.25,371.5 1170.50,372.9 1170.75,371.1 1171.00,372.4 1171.25,373.1 1171.50,372.2 1171.75,372.2 1172.00,373.1 1172.25,371.3 1172.50,373.3 1172.75,373.0 1173.00,371.8 1173.25,372.7 1173.50,373.5 1173.75,372.0 1174.00,372.7 1174.25,373.9 1174.50,374.0 1174.75,373.9 1175.00,373.7 1175.25,373.5 1175.50,371.4 1175.75,371.8 1176.00,373.9 1176.25,372.5 1176.50,371.3 1176.75,373.1 1177.00,374.3 1177.25,374.8 1177.50,372.6 1177.75,371.6 1178.00,374.6 1178.25,372.3 1178.50,372.9 1178.75,374.9 1179.00,373.4 1179.25,371.5 1179.50,373.9 1179.75,373.7 1180.00,374.0 1180.25,371.5 1180.50,373.4 1180.75,374.6 1181.00,374.4 1181.25,371.5 1181.50,372.7 1181.75,374.2 1182.00,373.7 1182.25,372.0 1182.50,372.3 1182.75,371.5 1183.00,374.6 1183.25,374.5 1183.50,372.4 1183.75,373.0 1184.00,371.9 1184.25,374.5 1184.50,372.6 1184.75,372.6 1185.00,372.6 1185.25,373.9 1185.50,372.3 1185.75,373.3 1186.00,373.6 1186.25,372.3 1186.50,372.7 1186.75,372.6 1187.00,371.7 1187.25,372.5 1187.50,374.9 1187.75,373.3 1188.00,375.3 1188.25,373.2 1188.50,373.8 1188.75,374.8 1189.00,373.2 1189.25,372.4 1189.50,372.0 1189.75,372.9 1190.00,374.5 1190.25,375.1 1190.50,373.5 1190.75,374.9 1191.00,373.3 1191.25,375.4 1191.50,373.4 1191.75,372.0 1192.00,373.4 1192.25,373.8 1192.50,372.1 1192.75,372.9 1193.00,373.5 1193.25,375.0 1193.50,374.7 1193.75,374.8 1194.00,374.0 1194.25,375.5 1194.50,375.1 1194.75,375.5 1195.00,375.7 1195.25,375.3 1195.50,373.5 1195.75,372.2 1196.00,374.5 1196.25,374.3 1196.50,373.9 1196.75,374.4 1197.00,372.7 1197.25,373.6 1197.50,374.3 1197.75,372.5 1198.00,374.6 1198.25,373.5 1198.50,375.7 1198.75,373.3 1199.00,375.4 1199.25,374.8 1199.50,373.4 1199.75,374.9 1200.00,375.0 1200.25,373.7 1200.50,375.4 1200.75,372.5 1201.00,374.3 1201.25,373.6 1201.50,374.8 1201.75,375.5 1202.00,372.4 1202.25,374.2 1202.50,373.4 1202.75,373.7 1203.00,374.5 1203.25,375.5 1203.50,373.4 1203.75,374.2 1204.00,372.6 1204.25,374.4 1204.50,373.4 1204.75,375.1 1205.00,373.6 1205.25,372.4 1205.50,375.3 1205.75,372.5 1206.00,373.2 1206.25,373.5 1206.50,374.5 1206.75,375.6 1207.00,372.5 1207.25,374.9 1207.50,375.3 1207.75,374.5 1208.00,372.4 1208.25,373.4 1208.50,373.7 1208.75,373.1 1209.00,375.5 1209.25,372.4 1209.50,375.5 1209.75,373.8 1210.00,376.1 1210.25,375.5 1210.50,375.7 1210.75,374.2 1211.00,372.6 1211.25,375.6 1211.50,375.6 1211.75,373.0 1212.00,376.1 1212.25,375.3 1212.50,375.7 1212.75,375.1 1213.00,375.8 1213.25,375.7 1213.50,375.1 1213.75,373.5 1214.00,374.0 1214.25,373.4 1214.50,372.8 1214.75,373.8 1215.00,376.2 1215.25,373.7 1215.50,373.4 1215.75,374.2 1216.00,375.1 1216.25,375.4 1216.50,374.3 1216.75,373.5 1217.00,375.3 1217.25,375.7 1217.50,376.3 1217.75,373.0 1218.00,374.2 1218.25,374.9 1218.50,376.2 1218.75,372.6 1219.00,372.6 1219.25,374.7 1219.50,374.3 1219.75,372.8 1220.00,374.5 1220.25,374.9 1220.50,375.4 1220.75,373.3 1221.00,375.4 1221.25,374.3 1221.50,374.0 1221.75,373.1 1222.00,373.9 1222.25,373.4 1222.50,374.3 1222.75,372.8 1223.00,375.8 1223.25,375.4 1223.50,376.3 1223.75,376.3 1224.00,375.9 1224.25,373.2 1224.50,373.1 1224.75,373.8 1225.00,375.9 1225.25,374.6 1225.50,376.4 1225.75,375.4 1226.00,376.0 1226.25,373.9 1226.50,373.6 1226.75,375.1 1227.00,374.7 1227.25,374.7 1227.50,375.2 1227.75,374.6 1228.00,372.8 1228.25,375.9 1228.50,373.9 1228.75,375.0 1229.00,374.1 1229.25,372.9 1229.50,373.9 1229.75,374.7 1230.00,374.8 1230.25,375.4 1230.50,373.8 1230.75,375.0 1231.00,374.9 1231.25,375.7 1231.50,375.2 1231.75,373.7 1232.00,373.5 1232.25,373.5 1232.50,373.2 1232.75,373.3 1233.00,376.0 1233.25,376.2 1233.50,375.0 1233.75,374.1 1234.00,374.6 1234.25,373.6 1234.50,376.0 1234.75,376.4 1235.00,375.4 1235.25,373.8 1235.50,374.3 1235.75,373.3 1236.00,373.8 1236.25,373.8 1236.50,375.3 1236.75,375.4 1237.00,373.2 1237.25,375.3 1237.50,374.0 1237.75,374.8 1238.00,376.1 1238.25,373.7 1238.50,375.4 1238.75,373.4 1239.00,373.8 1239.25,373.6 1239.50,376.4 1239.75,376.0 1240.00,373.4 1240.25,374.9 1240.50,374.3 1240.75,373.3 1241.00,373.7 1241.25,373.9 1241.50,374.3 1241.75,376.7 1242.00,374.2 1242.25,373.5 1242.50,376.7 1242.75,375.2 1243.00,376.0 1243.25,374.5 1243.50,373.4 1243.75,373.5 1244.00,374.1 1244.25,374.4 1244.50,376.0 1244.75,376.7 1245.00,374.1 1245.25,376.0 1245.50,373.3 1245.75,374.5 1246.00,375.5 1246.25,374.9 1246.50,373.1 1246.75,374.3 1247.00,373.5 1247.25,374.9 1247.50,375.9 1247.75,376.1 1248.00,373.4 1248.25,374.4 1248.50,376.4 1248.75,373.6 1249.00,373.9 1249.25,373.9 1249.50,376.3 1249.75,374.5 1250.00,375.6 1250.25,373.6 1250.50,376.3 1250.75,375.9 1251.00,373.2 1251.25,374.8 1251.50,373.7 1251.75,373.5 1252.00,375.3 1252.25,375.1 1252.50,374.6 1252.75,376.4 1253.00,373.6 1253.25,374.3 1253.50,375.5 1253.75,375.8 1254.00,373.1 1254.25,374.6 1254.50,375.8 1254.75,374.9 1255.00,376.1 1255.25,376.2 1255.50,376.1 1255.75,376.7 1256.00,374.9 1256.25,374.4 1256.50,375.1 1256.75,375.0 1257.00,375.0 1257.25,373.7 1257.50,376.6 1257.75,373.6 1258.00,376.1 1258.25,376.1 1258.50,376.1 1258.75,375.8 1259.00,374.6 1259.25,375.8 1259.50,375.3 1259.75,373.9 1260.00,375.7 1260.25,373.6 1260.50,376.7 1260.75,376.2 1261.00,373.8 1261.25,375.2 1261.50,374.3 1261.75,376.7 1262.00,374.5 1262.25,376.8 1262.50,375.4 1262.75,375.4 1263.00,375.8 1263.25,376.0 1263.50,376.7 1263.75,375.8 1264.00,376.6 1264.25,373.3 1264.50,375.1 1264.75,373.9 1265.00,373.5 1265.25,376.8 1265.50,374.6 1265.75,373.7 1266.00,374.2 1266.25,375.8 1266.50,374.8 1266.75,374.3 1267.00,374.5 1267.25,375.2 1267.50,375.7 1267.75,373.4 1268.00,376.6 1268.25,374.2 1268.50,374.4 1268.75,375.6 1269.00,376.2 1269.25,375.3 1269.50,375.6 1269.75,373.2 1270.00,373.4 1270.25,375.8 1270.50,374.8 1270.75,375.0 1271.00,374.7 1271.25,376.7 1271.50,373.9 1271.75,375.8 1272.00,374.0 1272.25,376.0 1272.50,376.3 1272.75,374.1 1273.00,374.8 1273.25,374.7 1273.50,374.1 1273.75,375.1 1274.00,374.4 1274.25,373.6 1274.50,373.8 1274.75,376.7 1275.00,375.7 1275.25,373.6 1275.50,376.4 1275.75,373.4 1276.00,374.5 1276.25,374.4 1276.50,376.6 1276.75,375.6 1277.00,374.3 1277.25,375.6 1277.50,374.7 1277.75,374.6 1278.00,376.1 1278.25,376.8 1278.50,376.9 1278.75,375.1 1279.00,373.6 1279.25,373.7 1279.50,374.8 1279.75,376.0 1280.00,373.9 1280.25,375.8 1280.50,373.6 1280.75,373.8 1281.00,375.9 1281.25,374.7 1281.50,376.5 1281.75,374.0 1282.00,376.8 1282.25,374.9 1282.50,375.4 1282.75,373.9 1283.00,375.9 1283.25,376.7 1283.50,374.2 1283.75,374.8 1284.00,376.4 1284.25,376.4 1284.50,376.2 1284.75,375.2 1285.00,376.4 1285.25,373.5 1285.50,374.1 1285.75,375.0 1286.00,373.8 1286.25,375.0 1286.50,375.2 1286.75,375.6 1287.00,376.7 1287.25,376.0 1287.50,374.6 1287.75,374.4 1288.00,373.9 1288.25,374.0 1288.50,376.7 1288.75,374.1 1289.00,376.5 1289.25,374.8 1289.50,375.3 1289.75,374.1 1290.00,376.8 1290.25,374.4 1290.50,374.8 1290.75,376.4 1291.00,375.5 1291.25,375.1 1291.50,374.5 1291.75,376.3 1292.00,376.9 1292.25,375.0 1292.50,375.0 1292.75,375.1 1293.00,376.7 1293.25,374.4 1293.50,377.2 1293.75,375.7 1294.00,374.3 1294.25,375.6 1294.50,377.1 1294.75,374.1 1295.00,376.8 1295.25,375.1 1295.50,375.8 1295.75,375.5 1296.00,376.4 1296.25,374.5 1296.50,373.9 1296.75,375.2 1297.00,374.2 1297.25,374.2 1297.50,373.7 1297.75,375.1 1298.00,373.6 1298.25,373.7 1298.50,376.4 1298.75,377.1 1299.00,375.6 1299.25,376.2 1299.50,376.2 1299.75,376.3 1300.00,374.3 1300.25,375.4 1300.50,376.1 1300.75,376.4 1301.00,374.7 1301.25,376.9 1301.50,376.4 1301.75,376.2 1302.00,376.1 1302.25,374.1 1302.50,376.8 1302.75,376.4 1303.00,375.1 1303.25,376.5 1303.50,374.2 1303.75,374.2 1304.00,376.4 1304.25,374.4 1304.50,373.6 1304.75,375.8 1305.00,376.0 1305.25,376.5 1305.50,375.9 1305.75,374.9 1306.00,376.3 1306.25,373.7 1306.50,376.0 1306.75,375.3 1307.00,376.1 1307.25,375.7 1307.50,374.9 1307.75,376.7 1308.00,377.2 1308.25,376.7 1308.50,376.0 1308.75,374.1 1309.00,374.6 1309.25,375.3 1309.50,375.8 1309.75,374.4 1310.00,375.8 1310.25,375.0 1310.50,374.2 1310.75,374.7 1311.00,374.1 1311.25,376.7 1311.50,375.0 1311.75,376.6 1312.00,376.7 1312.25,376.9 1312.50,373.6 1312.75,375.8 1313.00,375.1 1313.25,375.2 1313.50,376.4 1313.75,376.2 1314.00,373.7 1314.25,374.0 1314.50,376.3 1314.75,374.8 1315.00,374.7 1315.25,376.6 1315.50,376.2 1315.75,374.7 1316.00,376.3 1316.25,376.9 1316.50,376.7 1316.75,376.0 1317.00,377.1 1317.25,375.8 1317.50,375.5 1317.75,376.2 1318.00,376.2 1318.25,376.2 1318.50,374.6 1318.75,373.5 1319.00,374.5 1319.25,376.7 1319.50,375.6 1319.75,374.7 1320.00,374.4 1320.25,375.5 1320.50,376.5 1320.75,377.0 1321.00,375.3 1321.25,374.0 1321.50,374.8 1321.75,376.4 1322.00,377.1 1322.25,377.2 1322.50,376.5 1322.75,374.8 1323.00,374.3 1323.25,374.1 1323.50,374.7 1323.75,375.4 1324.00,376.5 1324.25,377.0 1324.50,377.1 1324.75,375.8 1325.00,375.4 1325.25,375.8 1325.50,374.4 1325.75,375.1 1326.00,376.0 1326.25,377.1 1326.50,376.8 1326.75,375.2 1327.00,376.4 1327.25,373.8 1327.50,374.5 1327.75,375.6 1328.00,373.9 1328.25,374.8 1328.50,373.7 1328.75,374.2 1329.00,374.7 1329.25,374.7 1329.50,375.5 1329.75,373.6 1330.00,374.7 1330.25,376.0 1330.50,373.9 1330.75,374.3 1331.00,375.4 1331.25,376.7 1331.50,376.6 1331.75,376.9 1332.00,377.1 1332.25,375.7 1332.50,376.7 1332.75,377.0 1333.00,376.6 1333.25,375.5 1333.50,374.6 1333.75,375.7 1334.00,375.5 1334.25,373.9 1334.50,374.4 1334.75,373.9 1335.00,374.2 1335.25,377.2 1335.50,376.4 1335.75,376.9 1336.00,377.1 1336.25,375.8 1336.50,374.6 1336.75,373.9 1337.00,376.7 1337.25,375.2 1337.50,374.3 1337.75,373.9 1338.00,375.8 1338.25,374.3 1338.50,376.9 1338.75,375.6 1339.00,377.3 1339.25,375.3 1339.50,376.2 1339.75,377.2 1340.00,376.7 1340.25,375.6 1340.50,374.0 1340.75,376.2 1341.00,374.3 1341.25,374.3 1341.50,374.3 1341.75,376.2 1342.00,375.7 1342.25,373.7 1342.50,375.4 1342.75,374.2 1343.00,375.8 1343.25,373.6 1343.50,374.3 1343.75,374.5 1344.00,376.2 1344.25,374.3 1344.50,375.6 1344.75,376.4 1345.00,376.2 1345.25,377.2 1345.50,376.9 1345.75,374.7 1346.00,374.2 1346.25,376.3 1346.50,374.1 1346.75,374.4 1347.00,376.8 1347.25,376.9 1347.50,377.3 1347.75,377.0 1348.00,374.8 1348.25,374.0 1348.50,373.9 1348.75,376.5 1349.00,377.3 1349.25,375.3 1349.50,375.4 1349.75,375.2 1350.00,374.4 1350.25,374.2 1350.50,374.1 1350.75,375.1 1351.00,374.9 1351.25,374.8 1351.50,376.5 1351.75,376.5 1352.00,376.5 1352.25,376.6 1352.50,375.1 1352.75,374.9 1353.00,376.9 1353.25,375.2 1353.50,375.8 1353.75,373.8 1354.00,373.6 1354.25,375.6 1354.50,377.0 1354.75,375.2 1355.00,375.7 1355.25,376.0 1355.50,376.2 1355.75,375.5 1356.00,376.5 1356.25,377.0 1356.50,375.7 1356.75,375.3 1357.00,375.4 1357.25,373.9 1357.50,375.2 1357.75,374.4 1358.00,373.6 1358.25,375.0 1358.50,375.5 1358.75,376.5 1359.00,374.8 1359.25,373.9 1359.50,375.1 1359.75,375.2 1360.00,375.4 1360.25,376.7 1360.50,375.6 1360.75,373.8 1361.00,375.1 1361.25,375.0 1361.50,376.9 1361.75,376.8 1362.00,375.7 1362.25,376.4 1362.50,377.4 1362.75,374.1 1363.00,375.9 1363.25,374.2 1363.50,374.4 1363.75,374.7 1364.00,374.1 1364.25,374.2 1364.50,376.4 1364.75,376.6 1365.00,375.6 1365.25,376.6 1365.50,374.1 1365.75,375.9 1366.00,376.6 1366.25,374.5 1366.50,374.0 1366.75,377.0 1367.00,375.6 1367.25,376.8 1367.50,375.0 1367.75,375.6 1368.00,374.8 1368.25,375.5 1368.50,374.7 1368.75,375.5 1369.00,376.4 1369.25,374.3 1369.50,377.2 1369.75,374.4 1370.00,375.3 1370.25,374.8 1370.50,376.0 1370.75,377.2 1371.00,376.6 1371.25,373.7 1371.50,377.1 1371.75,374.1 1372.00,377.3 1372.25,377.2 1372.50,376.1 1372.75,375.7 1373.00,376.5 1373.25,375.3 1373.50,376.7 1373.75,376.6 1374.00,373.8 1374.25,376.0 1374.50,376.6 1374.75,373.9 1375.00,374.3 1375.25,376.0 1375.50,375.6 1375.75,374.5 1376.00,374.0 1376.25,376.2 1376.50,374.3 1376.75,377.0 1377.00,376.8 1377.25,375.4 1377.50,376.3 1377.75,374.6 1378.00,377.4 1378.25,377.0 1378.50,377.2 1378.75,374.0 1379.00,374.2 1379.25,374.3 1379.50,376.4 1379.75,375.3 1380.00,376.4 1380.25,375.6 1380.50,375.7 1380.75,377.3 1381.00,374.2 1381.25,375.3 1381.50,374.2 1381.75,376.2 1382.00,376.0 1382.25,376.7 1382.50,374.0 1382.75,375.5 1383.00,375.1 1383.25,377.2 1383.50,374.3 1383.75,375.1 1384.00,377.2 1384.25,376.2 1384.50,374.4 1384.75,374.9 1385.00,376.2 1385.25,375.1 1385.50,374.7 1385.75,375.2 1386.00,376.6 1386.25,376.0 1386.50,376.8 1386.75,374.2 1387.00,374.6 1387.25,373.7 1387.50,376.0 1387.75,374.9 1388.00,376.0 1388.25,375.3 1388.50,373.8 1388.75,377.3 1389.00,377.4 1389.25,375.9 1389.50,375.9 1389.75,376.9 1390.00,374.0 1390.25,375.7 1390.50,377.0 1390.75,374.4 1391.00,374.2 1391.25,375.6 1391.50,376.9 1391.75,375.0 1392.00,377.1 1392.25,374.6 1392.50,374.4 1392.75,374.9 1393.00,375.8 1393.25,375.9 1393.50,374.9 1393.75,375.6 1394.00,374.1 1394.25,377.3 1394.50,374.2 1394.75,374.5 1395.00,374.8 1395.25,376.8 1395.50,376.9 1395.75,375.7 1396.00,376.9 1396.25,374.5 1396.50,377.4 1396.75,374.9 1397.00,374.4 1397.25,376.0 1397.50,375.2 1397.75,376.8 1398.00,374.9 1398.25,375.8 1398.50,375.1 1398.75,375.1 1399.00,374.5 1399.25,377.2 1399.50,374.6 1399.75,377.0 1400.00,376.0 1400.25,374.2 1400.50,375.1 1400.75,374.9 1401.00,376.9 1401.25,375.1 1401.50,375.3 1401.75,374.0 1402.00,374.8 1402.25,375.0 1402.50,377.3 1402.75,376.5 1403.00,376.5 1403.25,376.7 1403.50,377.2 1403.75,376.7 1404.00,376.7 1404.25,376.7 1404.50,377.2 1404.75,376.5 1405.00,375.3 1405.25,374.4 1405.50,375.2 1405.75,374.4 1406.00,375.7 1406.25,376.6 1406.50,377.3 1406.75,373.7 1407.00,376.9 1407.25,374.7 1407.50,375.3 1407.75,375.7 1408.00,374.9 1408.25,375.7 1408.50,374.7 1408.75,375.1 1409.00,376.0 1409.25,377.3 1409.50,375.7 1409.75,376.6 1410.00,377.2 1410.25,374.0 1410.50,374.5 1410.75,374.8 1411.00,377.2 1411.25,375.2 1411.50,376.7 1411.75,374.3 1412.00,375.6 1412.25,374.7 1412.50,374.0 1412.75,374.3 1413.00,373.8 1413.25,375.9 1413.50,377.4 1413.75,375.3 1414.00,374.5 1414.25,373.9 1414.50,376.9 1414.75,377.3 1415.00,376.0 1415.25,374.1 1415.50,375.5 1415.75,376.8 1416.00,376.2 1416.25,375.6 1416.50,375.5 1416.75,375.0 1417.00,373.7 1417.25,374.9 1417.50,375.2 1417.75,377.1 1418.00,377.1 1418.25,373.9 1418.50,374.8 1418.75,374.0 1419.00,377.1 1419.25,373.8 1419.50,373.7 1419.75,374.3 1420.00,375.5 1420.25,373.8 1420.50,376.2 1420.75,375.9 1421.00,376.9 1421.25,374.3 1421.50,376.2 1421.75,375.6 1422.00,375.5 1422.25,373.8 1422.50,376.9 1422.75,377.1 1423.00,373.9 1423.25,376.4 1423.50,376.4 1423.75,375.3 1424.00,376.3" fill="none" stroke="#e80c26" stroke-width="1.6" stroke-linejoin="round"/>
 <circle cx="688" cy="211" r="0.9" fill="#333"/>
 <!-- trigger diamond -->
 <path d="M206.8 334.3 L210.8 338.3 L206.8 342.3 L202.8 338.3 Z" fill="#f3e2a6" stroke="#a88a50" stroke-width="0.8"/>
 <!-- left 7.0 marker -->
 <path d="M121 80.5 H142.5 L148 86 L142.5 91.5 H121 Q117.5 91.5 117.5 88 V84 Q117.5 80.5 121 80.5 Z" fill="#fff" stroke="#1c4f86" stroke-width="1.1"/>
 <path d="M142.5 81 L148 86 L142.5 91 Z" fill="#1c5ea6"/>
 <!-- right 7.0 marker -->
 <path d="M1426 80.5 H1447 Q1449.5 80.5 1449.5 83 V89 Q1449.5 91.5 1447 91.5 H1426 L1418 86 Z" fill="#fff" stroke="#d22b3f" stroke-width="1.1"/>
 <path d="M1423.5 81 L1418 86 L1423.5 91 Z" fill="#d22b3f"/>
 <!-- bottom -3.0 marker -->
 <path d="M128.5 716.5 H155 V728 Q155 731 152 731 H131.5 Q128.5 731 128.5 728 Z" fill="none" stroke="#1c4f86" stroke-width="1.1"/>
 <path d="M140 716.5 L145 711.5 L150 716.5 Z" fill="#1c5ea6"/>
 <!-- zoom magnifier -->
 <g>
  <circle cx="1400" cy="102.5" r="4.6" fill="none" stroke="#0e4f94" stroke-width="2"/>
  <path d="M1398 102.5 H1402 M1400 100.5 V104.5" stroke="#0e4f94" stroke-width="1.2"/>
  <path d="M1403.5 106 L1410.5 113" stroke="#0e4f94" stroke-width="3.2"/>
 </g>
</svg>
<div class="t" style="left:132.5px;top:94px;font-size:9.6px;color:#1c4f86;width:14px;text-align:center;">V</div>
<div class="t" style="left:122px;top:81.8px;font-size:9.4px;color:#3a6a90;width:20px;text-align:right;">7.0</div>
<div class="t" style="left:1421px;top:94px;font-size:9.6px;color:#c8283c;width:14px;text-align:center;">V</div>
<div class="t" style="left:1425px;top:81.5px;font-size:10px;color:#c8283c;">7.0</div>

<div class="t" style="top:19.6px;font-size:9px;font-weight:400;color:#1a1a1a;letter-spacing:-0.17px;left:17.0px;-webkit-text-stroke:0.2px #1a1a1a;">PicoScope7 for MOPAR Scope</div>
<div class="t" style="top:51.4px;font-size:9px;font-weight:400;color:#a02a3a;left:-84.0px;width:300px;text-align:center;">Stopped</div>
<div class="t" style="top:38.7px;font-size:8.5px;font-weight:400;color:#333;left:137.9px;">Timebase</div>
<div class="t" style="top:59.1px;font-size:10.8px;font-weight:400;color:#1c3f66;left:137.9px;-webkit-text-stroke:0.4px #1c3f66;">50 μs/div</div>
<div class="t" style="top:38.1px;font-size:6.4px;font-weight:400;color:#333;right:1218.0px;text-align:right;">Samples</div>
<div class="t" style="top:47.3px;font-size:6.5px;font-weight:700;color:#1c3f66;right:1218.0px;text-align:right;">100 kS</div>
<div class="t" style="top:57.1px;font-size:6.6px;font-weight:400;color:#333;right:1218.0px;text-align:right;">Sample rate</div>
<div class="t" style="top:65.6px;font-size:6.6px;font-weight:400;color:#333;right:1218.0px;text-align:right;">200 MS/s</div>
<div class="t" style="top:37.4px;font-size:9px;font-weight:400;color:#333;left:277.3px;">Trigger</div>
<div class="t" style="top:62.3px;font-size:11px;font-weight:400;color:#1c3f66;left:277.3px;-webkit-text-stroke:0.4px #1c3f66;">3 V</div>
<div class="t" style="top:37.1px;font-size:6.6px;font-weight:400;color:#333;right:1100.5px;text-align:right;">A</div>
<div class="t" style="top:47.7px;font-size:6.6px;font-weight:400;color:#333;right:1085.8px;text-align:right;">5 %</div>
<div class="t" style="top:57.2px;font-size:6.7px;font-weight:400;color:#333;right:1085.8px;text-align:right;">Simple edge</div>
<div class="t" style="top:67.4px;font-size:6.7px;font-weight:400;color:#333;right:1085.8px;text-align:right;">Auto</div>
<div class="t" style="top:39.2px;font-size:8.8px;font-weight:400;color:#333;left:286.2px;width:300px;text-align:center;">Waveform</div>
<div class="t" style="top:51.1px;font-size:11px;font-weight:400;color:#1c4a80;left:286.2px;width:300px;text-align:center;-webkit-text-stroke:0.4px #1c4a80;">64</div>
<div class="t" style="top:66.4px;font-size:6.6px;font-weight:400;color:#333;left:286.2px;width:300px;text-align:center;">of 64</div>
<div class="t" style="top:61.9px;font-size:6.7px;font-weight:400;color:#2a3f5a;left:363.0px;width:300px;text-align:center;">Guided tests</div>
<div class="t" style="top:61.9px;font-size:6.7px;font-weight:400;color:#2a3f5a;left:411.0px;width:300px;text-align:center;">Auto setup</div>
<div class="t" style="top:61.9px;font-size:6.7px;font-weight:400;color:#2a3f5a;left:459.7px;width:300px;text-align:center;">Open</div>
<div class="t" style="top:61.9px;font-size:6.7px;font-weight:400;color:#2a3f5a;left:508.0px;width:300px;text-align:center;">Save</div>
<div class="t" style="top:61.9px;font-size:6.7px;font-weight:400;color:#2a3f5a;left:556.7px;width:300px;text-align:center;">Print</div>
<div class="t" style="top:61.9px;font-size:6.7px;font-weight:400;color:#2a3f5a;left:604.8px;width:300px;text-align:center;">Vehicle details</div>
<div class="t" style="top:82.5px;font-size:8.5px;font-weight:400;color:#1f4e86;left:24.5px;-webkit-text-stroke:0.3px #1f4e86;">A</div>
<div class="t" style="top:81.4px;font-size:6.5px;font-weight:400;color:#333;right:1355.8px;text-align:right;">DC</div>
<div class="t" style="top:90.3px;font-size:6.3px;font-weight:400;color:#333;right:1355.8px;text-align:right;">Blue x1</div>
<div class="t" style="top:104.7px;font-size:10.4px;font-weight:400;color:#1f4e86;left:24.5px;-webkit-text-stroke:0.35px #1f4e86;">±10 V</div>
<div class="t" style="top:124.7px;font-size:8.5px;font-weight:400;color:#c8213a;left:24.5px;-webkit-text-stroke:0.3px #c8213a;">B</div>
<div class="t" style="top:123.6px;font-size:6.5px;font-weight:400;color:#333;right:1355.8px;text-align:right;">DC</div>
<div class="t" style="top:132.5px;font-size:6.3px;font-weight:400;color:#333;right:1355.8px;text-align:right;">Red x1</div>
<div class="t" style="top:146.9px;font-size:10.4px;font-weight:400;color:#c8213a;left:24.5px;-webkit-text-stroke:0.35px #c8213a;">±10 V</div>
<div class="t" style="top:166.9px;font-size:8.5px;font-weight:400;color:#2a7a4a;left:24.5px;-webkit-text-stroke:0.3px #2a7a4a;">C</div>
<div class="t" style="top:165.8px;font-size:6.5px;font-weight:400;color:#333;right:1355.8px;text-align:right;">DC</div>
<div class="t" style="top:174.7px;font-size:6.3px;font-weight:400;color:#333;right:1355.8px;text-align:right;">x1</div>
<div class="t" style="top:189.1px;font-size:10.4px;font-weight:400;color:#2a7a4a;left:24.5px;-webkit-text-stroke:0.35px #2a7a4a;">Off</div>
<div class="t" style="top:209.2px;font-size:8.5px;font-weight:400;color:#b8963a;left:24.5px;-webkit-text-stroke:0.3px #b8963a;">D</div>
<div class="t" style="top:208.1px;font-size:6.5px;font-weight:400;color:#333;right:1355.8px;text-align:right;">DC</div>
<div class="t" style="top:217.0px;font-size:6.3px;font-weight:400;color:#333;right:1355.8px;text-align:right;">x1</div>
<div class="t" style="top:231.4px;font-size:10.4px;font-weight:400;color:#b8963a;left:24.5px;-webkit-text-stroke:0.35px #b8963a;">Off</div>
<div class="t" style="top:281.5px;font-size:6.6px;font-weight:400;color:#2a3f5a;left:-119.0px;width:300px;text-align:center;">More...</div>
<div class="t" style="top:281.5px;font-size:6.6px;font-weight:400;color:#2a3f5a;left:-63.2px;width:300px;text-align:center;">Auto setup</div>
<div class="t" style="top:324.8px;font-size:6.6px;font-weight:400;color:#2a3f5a;left:-119.0px;width:300px;text-align:center;">Channel labels</div>
<div class="t" style="top:324.8px;font-size:6.6px;font-weight:400;color:#2a3f5a;left:-63.2px;width:300px;text-align:center;">Guided tests</div>
<div class="t" style="top:367.8px;font-size:6.6px;font-weight:400;color:#2a3f5a;left:-119.0px;width:300px;text-align:center;">Settings</div>
<div class="t" style="top:410.8px;font-size:6.6px;font-weight:400;color:#2a3f5a;left:-119.0px;width:300px;text-align:center;">Serial decoding</div>
<div class="t" style="top:410.8px;font-size:6.6px;font-weight:400;color:#2a3f5a;left:-63.2px;width:300px;text-align:center;">Math channels</div>
<div class="t" style="top:453.8px;font-size:6.6px;font-weight:400;color:#2a3f5a;left:-119.0px;width:300px;text-align:center;">Rulers</div>
<div class="t" style="top:453.8px;font-size:6.6px;font-weight:400;color:#2a3f5a;left:-63.2px;width:300px;text-align:center;">Views</div>
<div class="t" style="top:496.8px;font-size:6.6px;font-weight:400;color:#2a3f5a;left:-63.2px;width:300px;text-align:center;">Measurements</div>
<div class="t" style="top:540.3px;font-size:6.6px;font-weight:400;color:#2a3f5a;left:-119.0px;width:300px;text-align:center;">Notes</div>
<div class="t" style="top:540.3px;font-size:6.6px;font-weight:400;color:#2a3f5a;left:-63.2px;width:300px;text-align:center;">Send feedback</div>
<div class="t" style="top:363.8px;font-size:6.6px;font-weight:400;color:#2a3f5a;left:-63.2px;width:300px;text-align:center;">About</div>
<div class="t" style="top:372.4px;font-size:6.6px;font-weight:400;color:#2a3f5a;left:-63.2px;width:300px;text-align:center;">PicoScope 7</div>
<div class="t" style="top:493.1px;font-size:6.6px;font-weight:400;color:#2a3f5a;left:-119.0px;width:300px;text-align:center;">Reference</div>
<div class="t" style="top:501.5px;font-size:6.6px;font-weight:400;color:#2a3f5a;left:-119.0px;width:300px;text-align:center;">waveforms</div>
<div class="t" style="top:711.6px;font-size:9.6px;font-weight:400;color:#bd2038;left:1425.0px;-webkit-text-stroke:0.15px #bd2038;">-3.0</div>
<div class="t" style="top:648.5px;font-size:9.6px;font-weight:400;color:#245887;right:1306.9px;text-align:right;-webkit-text-stroke:0.15px #245887;">-2.0</div>
<div class="t" style="top:648.5px;font-size:9.6px;font-weight:400;color:#bd2038;left:1425.0px;-webkit-text-stroke:0.15px #bd2038;">-2.0</div>
<div class="t" style="top:585.4px;font-size:9.6px;font-weight:400;color:#245887;right:1306.9px;text-align:right;-webkit-text-stroke:0.15px #245887;">-1.0</div>
<div class="t" style="top:585.4px;font-size:9.6px;font-weight:400;color:#bd2038;left:1425.0px;-webkit-text-stroke:0.15px #bd2038;">-1.0</div>
<div class="t" style="top:522.3px;font-size:9.6px;font-weight:400;color:#245887;right:1306.9px;text-align:right;-webkit-text-stroke:0.15px #245887;">0.0</div>
<div class="t" style="top:522.3px;font-size:9.6px;font-weight:400;color:#bd2038;left:1425.0px;-webkit-text-stroke:0.15px #bd2038;">0.0</div>
<div class="t" style="top:459.2px;font-size:9.6px;font-weight:400;color:#245887;right:1306.9px;text-align:right;-webkit-text-stroke:0.15px #245887;">1.0</div>
<div class="t" style="top:459.2px;font-size:9.6px;font-weight:400;color:#bd2038;left:1425.0px;-webkit-text-stroke:0.15px #bd2038;">1.0</div>
<div class="t" style="top:396.1px;font-size:9.6px;font-weight:400;color:#245887;right:1306.9px;text-align:right;-webkit-text-stroke:0.15px #245887;">2.0</div>
<div class="t" style="top:396.1px;font-size:9.6px;font-weight:400;color:#bd2038;left:1425.0px;-webkit-text-stroke:0.15px #bd2038;">2.0</div>
<div class="t" style="top:333.0px;font-size:9.6px;font-weight:400;color:#245887;right:1306.9px;text-align:right;-webkit-text-stroke:0.15px #245887;">3.0</div>
<div class="t" style="top:333.0px;font-size:9.6px;font-weight:400;color:#bd2038;left:1425.0px;-webkit-text-stroke:0.15px #bd2038;">3.0</div>
<div class="t" style="top:269.9px;font-size:9.6px;font-weight:400;color:#245887;right:1306.9px;text-align:right;-webkit-text-stroke:0.15px #245887;">4.0</div>
<div class="t" style="top:269.9px;font-size:9.6px;font-weight:400;color:#bd2038;left:1425.0px;-webkit-text-stroke:0.15px #bd2038;">4.0</div>
<div class="t" style="top:206.8px;font-size:9.6px;font-weight:400;color:#245887;right:1306.9px;text-align:right;-webkit-text-stroke:0.15px #245887;">5.0</div>
<div class="t" style="top:206.8px;font-size:9.6px;font-weight:400;color:#bd2038;left:1425.0px;-webkit-text-stroke:0.15px #bd2038;">5.0</div>
<div class="t" style="top:143.7px;font-size:9.6px;font-weight:400;color:#245887;right:1306.9px;text-align:right;-webkit-text-stroke:0.15px #245887;">6.0</div>
<div class="t" style="top:143.7px;font-size:9.6px;font-weight:400;color:#bd2038;left:1425.0px;-webkit-text-stroke:0.15px #bd2038;">6.0</div>
<div class="t" style="top:711.6px;font-size:9.6px;font-weight:400;color:#245887;right:1306.9px;text-align:right;-webkit-text-stroke:0.15px #245887;">-3.0</div>
<div class="t" style="top:719.0px;font-size:9.4px;font-weight:400;color:#222;left:200.0px;">0.0 μs</div>
<div class="t" style="top:719.4px;font-size:9.4px;font-weight:400;color:#222;left:184.7px;width:300px;text-align:center;">50.0</div>
<div class="t" style="top:719.4px;font-size:9.4px;font-weight:400;color:#222;left:312.8px;width:300px;text-align:center;">100.0</div>
<div class="t" style="top:719.4px;font-size:9.4px;font-weight:400;color:#222;left:441.0px;width:300px;text-align:center;">150.0</div>
<div class="t" style="top:719.4px;font-size:9.4px;font-weight:400;color:#222;left:569.2px;width:300px;text-align:center;">200.0</div>
<div class="t" style="top:719.4px;font-size:9.4px;font-weight:400;color:#222;left:697.3px;width:300px;text-align:center;">250.0</div>
<div class="t" style="top:719.4px;font-size:9.4px;font-weight:400;color:#222;left:825.5px;width:300px;text-align:center;">300.0</div>
<div class="t" style="top:719.4px;font-size:9.4px;font-weight:400;color:#222;left:953.7px;width:300px;text-align:center;">350.0</div>
<div class="t" style="top:719.4px;font-size:9.4px;font-weight:400;color:#222;left:1081.9px;width:300px;text-align:center;">400.0</div>
<div class="t" style="top:719.4px;font-size:9.4px;font-weight:400;color:#222;left:1210.0px;width:300px;text-align:center;">450.0</div>

<!-- watermark -->
<div class="a" style="left:0;top:734px;width:1450px;height:16px;overflow:hidden;"><div class="t" style="left:1353px;top:-3px;font-size:24px;font-weight:700;color:#16161f;transform:scaleX(0.7);transform-origin:0 0;">2817180312</div></div>
</body></html>
